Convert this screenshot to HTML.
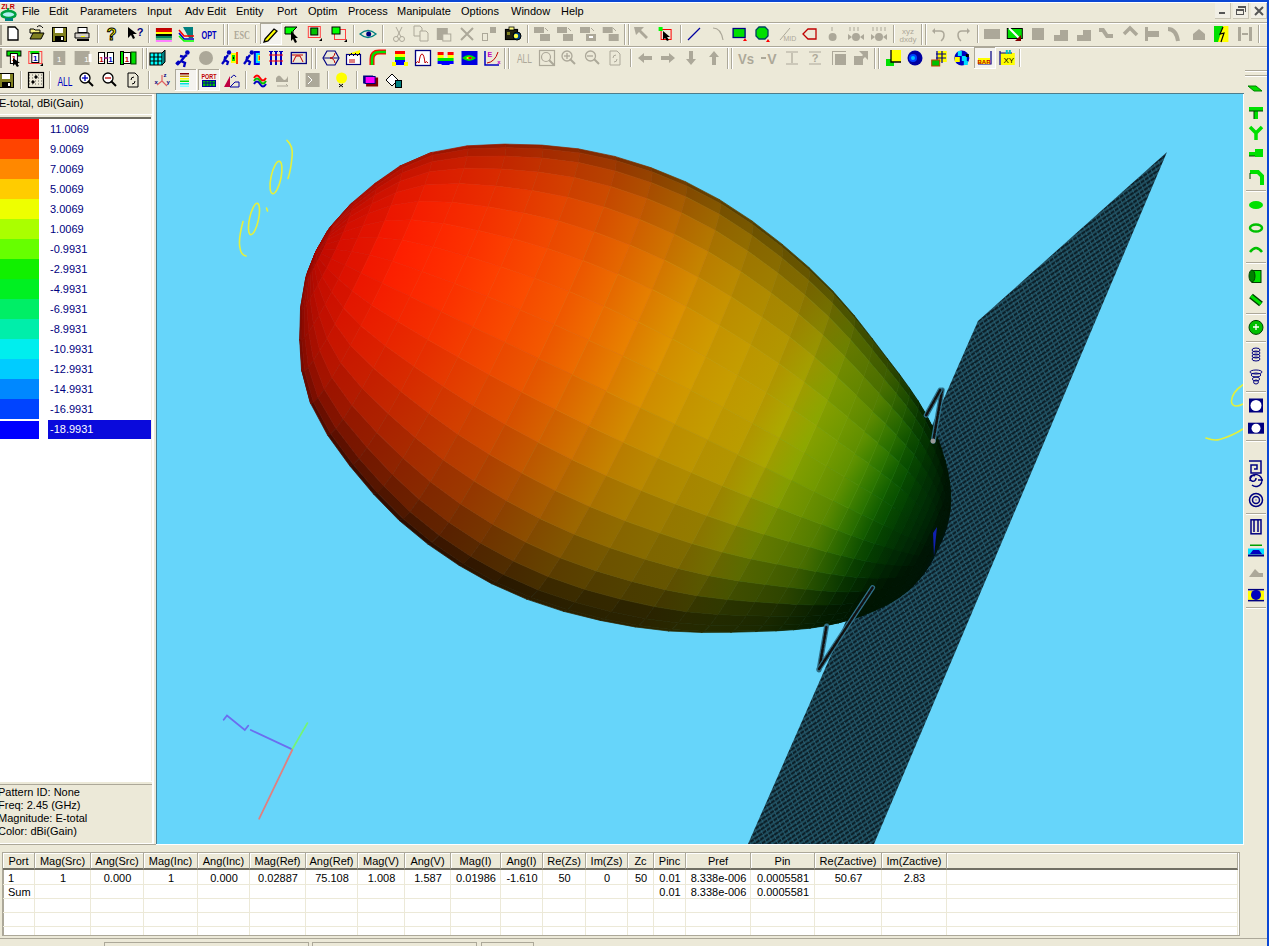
<!DOCTYPE html><html><head><meta charset="utf-8"><style>
*{margin:0;padding:0;box-sizing:border-box}
body{width:1269px;height:946px;overflow:hidden;background:#ece9d8;font-family:"Liberation Sans", sans-serif;font-size:11px;color:#000;position:relative}
.a{position:absolute}
.menu span{position:absolute;top:4px;font-size:11px;line-height:14px}
.tb{position:absolute;width:16px;height:16px}
.sep{position:absolute;width:2px;height:18px;border-left:1px solid #aca899;border-right:1px solid #fff}
.grip{position:absolute;width:6px;height:20px;border-left:1px solid #aca899;border-right:1px solid #aca899}
.leg{position:absolute;left:0;width:39px;height:20px}
.legt{position:absolute;left:50px;color:#000080;font-size:11px;line-height:13px}
.info{position:absolute;left:-2px;font-size:11px;line-height:13px}
table.g{position:absolute;left:3px;top:853px;border-collapse:collapse;table-layout:fixed}
.hd{position:absolute;top:853px;height:17px;background:#ece9d8;border-right:1px solid #aca899;border-bottom:2px solid #716f64;text-align:center;font-size:11px;line-height:16px;box-shadow:inset 1px 1px 0 #fff}
.cell{position:absolute;height:14px;font-size:11px;line-height:14px;text-align:center}
</style></head><body>
<div class="a" style="left:0;top:0;width:1269px;height:2px;background:#0b47d4"></div>
<div class="a" style="left:1267px;top:0;width:2px;height:946px;background:#0b47d4"></div>
<div class="a" style="left:0;top:2px;width:1267px;height:1px;background:#fff"></div>
<svg class="a" style="left:0;top:3px" width="17" height="18"><text x="8" y="6" font-family="Liberation Sans" font-size="7" font-weight="bold" fill="#c00000" text-anchor="middle">ZLR</text><ellipse cx="8.5" cy="11.5" rx="7" ry="3.5" fill="#b0f0f0" stroke="#00a040" stroke-width="2.5"/><path d="M8 5v3" stroke="#00a040" stroke-width="2"/><rect x="5" y="15" width="8" height="3" fill="#008080"/></svg>
<div class="menu">
<span style="left:22px">File</span>
<span style="left:49px">Edit</span>
<span style="left:80px">Parameters</span>
<span style="left:147px">Input</span>
<span style="left:185px">Adv Edit</span>
<span style="left:236px">Entity</span>
<span style="left:277px">Port</span>
<span style="left:308px">Optim</span>
<span style="left:348px">Process</span>
<span style="left:397px">Manipulate</span>
<span style="left:461px">Options</span>
<span style="left:511px">Window</span>
<span style="left:561px">Help</span>
</div>
<div class="a" style="left:0;top:22px;width:1267px;height:1px;background:#aca899"></div>
<div class="a" style="left:0;top:23px;width:1267px;height:1px;background:#fff"></div>
<div class="a" style="left:0;top:46px;width:1267px;height:1px;background:#aca899"></div>
<div class="a" style="left:0;top:47px;width:1267px;height:1px;background:#fff"></div>
<div class="a" style="left:1215px;top:3px;width:16px;height:16px;background:#f1efe5;border-right:1px solid #c8c4b4;border-bottom:1px solid #c8c4b4"></div>
<div class="a" style="left:1233px;top:3px;width:16px;height:16px;background:#f1efe5;border-right:1px solid #c8c4b4;border-bottom:1px solid #c8c4b4"></div>
<div class="a" style="left:1251px;top:3px;width:16px;height:16px;background:#f1efe5;border-right:1px solid #c8c4b4;border-bottom:1px solid #c8c4b4"></div>
<div class="a" style="left:1219px;top:12px;width:6px;height:2px;background:#555"></div>
<div class="a" style="left:1236px;top:9px;width:8px;height:6px;border:1px solid #555;border-top-width:2px"></div>
<div class="a" style="left:1238px;top:6px;width:8px;height:6px;border-top:2px solid #555;border-right:1px solid #555"></div>
<svg class="a" style="left:1254px;top:6px" width="10" height="10"><path d="M1 1L9 9M9 1L1 9" stroke="#555" stroke-width="2"/></svg>
<svg class="a" style="left:0;top:0" width="1269" height="946" viewBox="0 0 1269 946">
<path d="M8 27h7l3 3v10h-10z" fill="#ffffff" stroke="#000" stroke-width="1.3"/>
<path d="M30 29h4l1 1h5v3h-10z" fill="#f8f080" stroke="#000" stroke-width="1"/>
<path d="M30 39l3-6h11l-3 6z" fill="#808020" stroke="#000" stroke-width="1"/>
<path d="M37 27q3-3 6 1" fill="none" stroke="#000" stroke-width="1"/>
<rect x="52.5" y="27.5" width="14.0" height="14.0" fill="#808020" stroke="#000" stroke-width="1"/>
<rect x="55.0" y="28.0" width="8.0" height="5.0" fill="#ffffff"/>
<rect x="55.0" y="36.0" width="9.0" height="5.0" fill="#000"/>
<rect x="61.0" y="37.0" width="2.0" height="3.0" fill="#ffffff"/>
<rect x="78.0" y="27.5" width="9.0" height="5.0" fill="#ffffff" stroke="#000" stroke-width="1"/>
<path d="M75 33h14v5h-14z" fill="#d4d0c8" stroke="#000" stroke-width="1"/>
<rect x="77.0" y="39.0" width="12.0" height="2.0" fill="#000"/>
<rect x="81.0" y="36.0" width="4.0" height="1.0" fill="#ff0"/>
<rect x="97.0" y="25.0" width="1.0" height="18.0" fill="#aca899"/>
<rect x="98.0" y="25.0" width="1.0" height="18.0" fill="#ffffff"/>
<text x="111.6" y="40.0" fill="#ff0" font-size="16" font-weight="bold" text-anchor="middle" font-family='"Liberation Sans", sans-serif' stroke="#000" stroke-width="1">?</text>
<path d="M128 27v11l3-3 2 4 2-1-2-4h4z" fill="#000"/>
<text x="140.0" y="36.0" fill="#000080" font-size="11" font-weight="bold" text-anchor="middle" font-family='"Liberation Sans", sans-serif'>?</text>
<rect x="148.0" y="25.0" width="1.0" height="18.0" fill="#aca899"/>
<rect x="149.0" y="25.0" width="1.0" height="18.0" fill="#ffffff"/>
<rect x="155.9" y="28.0" width="16.0" height="2.0" fill="#c00000"/>
<rect x="155.9" y="30.0" width="16.0" height="2.0" fill="#e00000"/>
<rect x="155.9" y="32.0" width="16.0" height="2.0" fill="#ffff00"/>
<rect x="155.9" y="34.0" width="16.0" height="2.0" fill="#000000"/>
<rect x="155.9" y="36.0" width="16.0" height="2.0" fill="#008060"/>
<rect x="155.9" y="38.0" width="16.0" height="2.0" fill="#60c080"/>
<rect x="155.9" y="40.0" width="16.0" height="2.0" fill="#ff80ff"/>
<path d="M183 27h10v11h-4z" fill="#008080"/>
<path d="M179 30l5 6h10" fill="none" stroke="#ff0000" stroke-width="1.6"/>
<path d="M179 33l5 6h10" fill="none" stroke="#0000c0" stroke-width="1.6"/>
<path d="M179 36l5 5h10" fill="none" stroke="#00ff00" stroke-width="1.6"/>
<text x="209.0" y="39.0" fill="#0000c0" font-size="10" font-weight="bold" text-anchor="middle" font-family='"Liberation Sans", sans-serif' textLength="15" lengthAdjust="spacingAndGlyphs">OPT</text>
<rect x="223.0" y="24.0" width="1.0" height="21.0" fill="#aca899"/>
<rect x="224.0" y="24.0" width="1.0" height="21.0" fill="#ffffff"/>
<rect x="227.0" y="24.0" width="1.0" height="21.0" fill="#aca899"/>
<rect x="228.0" y="24.0" width="1.0" height="21.0" fill="#ffffff"/>
<text x="242.0" y="39.0" fill="#aca899" font-size="12" font-weight="bold" text-anchor="middle" font-family='"Liberation Serif", serif' textLength="16" lengthAdjust="spacingAndGlyphs">ESC</text>
<rect x="255.0" y="25.0" width="1.0" height="18.0" fill="#aca899"/>
<rect x="256.0" y="25.0" width="1.0" height="18.0" fill="#ffffff"/>
<rect x="260.0" y="23.0" width="22.0" height="22.0" fill="#f4f3ee"/>
<rect x="260.0" y="23.0" width="22.0" height="1.0" fill="#aca899"/>
<rect x="260.0" y="23.0" width="1.0" height="22.0" fill="#aca899"/>
<rect x="260.0" y="44.0" width="22.0" height="1.0" fill="#ffffff"/>
<rect x="281.0" y="23.0" width="1.0" height="22.0" fill="#ffffff"/>
<path d="M265 39l9-10 3 2-9 10-4 1z" fill="#ffff00" stroke="#000" stroke-width="1.3"/>
<path d="M285 27h12l-4 4v3h-8z" fill="#00ff00" stroke="#000" stroke-width="1"/>
<path d="M291 31v10l2-2 2 4 2-1-2-4h3z" fill="#000"/>
<rect x="308.3" y="26.5" width="12.0" height="11.0" fill="none" stroke="#ff4040" stroke-width="1"/>
<rect x="310.8" y="28.0" width="7.0" height="7.0" fill="#00c000" stroke="#000" stroke-width="1"/>
<path d="M319 41l3 0v-3z" fill="#000"/>
<rect x="334.5" y="29.5" width="11.0" height="10.0" fill="none" stroke="#ff4040" stroke-width="1"/>
<rect x="332.0" y="27.0" width="8.0" height="7.0" fill="#00ff00" stroke="#000" stroke-width="1"/>
<path d="M344 42l3 0v-3z" fill="#000"/>
<rect x="353.0" y="25.0" width="1.0" height="18.0" fill="#aca899"/>
<rect x="354.0" y="25.0" width="1.0" height="18.0" fill="#ffffff"/>
<path d="M360 34q8-7 16 0q-8 7-16 0z" fill="none" stroke="#008080" stroke-width="1.3"/>
<circle cx="368.7" cy="34.0" r="2.5" fill="#000080"/>
<rect x="382.0" y="25.0" width="1.0" height="18.0" fill="#aca899"/>
<rect x="383.0" y="25.0" width="1.0" height="18.0" fill="#ffffff"/>
<circle cx="396.0" cy="39.0" r="2.5" fill="none" stroke="#aca899" stroke-width="1"/>
<circle cx="402.0" cy="39.0" r="2.5" fill="none" stroke="#aca899" stroke-width="1"/>
<path d="M397 37l5-10M401 37l-5-10" fill="none" stroke="#aca899" stroke-width="1"/>
<path d="M414 26h6l2 2v8h-8z" fill="#ece9d8" stroke="#aca899" stroke-width="1"/>
<path d="M420 31h6l2 2v8h-8z" fill="#ece9d8" stroke="#aca899" stroke-width="1"/>
<rect x="436.8" y="28.0" width="11.0" height="12.0" fill="#aca899"/>
<rect x="442.8" y="34.0" width="8.0" height="7.0" fill="#ece9d8" stroke="#aca899" stroke-width="1"/>
<path d="M461 28l12 12M473 28l-12 12" fill="none" stroke="#aca899" stroke-width="2"/>
<rect x="482.5" y="33.5" width="5.0" height="7.0" fill="none" stroke="#aca899" stroke-width="1"/>
<rect x="490.0" y="27.0" width="6.0" height="6.0" fill="#aca899"/>
<rect x="505.5" y="29.5" width="12.0" height="10.0" fill="#202010" stroke="#000" stroke-width="1.2"/>
<rect x="509.0" y="27.0" width="5.0" height="3.0" fill="#ffff80" stroke="#000" stroke-width="0.8"/>
<rect x="507.0" y="32.0" width="3.0" height="3.0" fill="#808020"/>
<circle cx="517.0" cy="36.0" r="4.0" fill="#004080" stroke="#000" stroke-width="1"/>
<circle cx="516.0" cy="36.0" r="2.2" fill="#ffff40"/>
<rect x="527.0" y="25.0" width="1.0" height="18.0" fill="#aca899"/>
<rect x="528.0" y="25.0" width="1.0" height="18.0" fill="#ffffff"/>
<rect x="534.0" y="27.0" width="10.0" height="6.0" fill="#aca899"/>
<rect x="540.0" y="34.0" width="10.0" height="7.0" fill="#aca899"/>
<path d="M545 28l3 3" fill="none" stroke="#aca899" stroke-width="1"/>
<rect x="557.0" y="27.0" width="10.0" height="6.0" fill="#aca899"/>
<rect x="563.0" y="34.0" width="10.0" height="7.0" fill="#aca899"/>
<path d="M568 28l3 3" fill="none" stroke="#aca899" stroke-width="1"/>
<rect x="580.0" y="27.0" width="10.0" height="6.0" fill="#aca899"/>
<rect x="586.0" y="34.0" width="10.0" height="7.0" fill="#aca899"/>
<path d="M591 28l3 3" fill="none" stroke="#aca899" stroke-width="1"/>
<rect x="589.0" y="36.0" width="4.0" height="2.0" fill="#ffffff"/>
<rect x="602.7" y="27.0" width="10.0" height="6.0" fill="#aca899"/>
<rect x="608.7" y="34.0" width="10.0" height="7.0" fill="#aca899"/>
<path d="M613 28l3 3" fill="none" stroke="#aca899" stroke-width="1"/>
<rect x="624.0" y="24.0" width="1.0" height="21.0" fill="#aca899"/>
<rect x="625.0" y="24.0" width="1.0" height="21.0" fill="#ffffff"/>
<rect x="628.0" y="24.0" width="1.0" height="21.0" fill="#aca899"/>
<rect x="629.0" y="24.0" width="1.0" height="21.0" fill="#ffffff"/>
<path d="M634 27h10l-3 3 7 7-2 2-7-7-3 3z" fill="#aca899"/>
<rect x="661.1" y="29.5" width="10.0" height="10.0" fill="none" stroke="#ff0000" stroke-width="1"/>
<rect x="658.6" y="27.0" width="4.0" height="4.0" fill="#00ff00"/>
<path d="M663 31v9l2-2 2 3 2-1-2-3h3z" fill="#000"/>
<rect x="680.0" y="25.0" width="1.0" height="18.0" fill="#aca899"/>
<rect x="681.0" y="25.0" width="1.0" height="18.0" fill="#ffffff"/>
<path d="M688 40l12-12" fill="none" stroke="#0000a0" stroke-width="1.2"/>
<path d="M713 28q8 0 10 12" fill="none" stroke="#aca899" stroke-width="1.2"/>
<rect x="733.1" y="28.5" width="12.0" height="9.0" fill="#00e000" stroke="#000080" stroke-width="1.3"/>
<path d="M743 41l2-3 2 3z" fill="#ff0000"/>
<path d="M759 27h6l3 3v6l-3 3h-6l-3-3v-6z" fill="#00e000" stroke="#004060" stroke-width="1.3"/>
<path d="M766 42l2-3 2 3z" fill="#ff0000"/>
<path d="M780 40l10-12" fill="none" stroke="#aca899" stroke-width="1"/>
<text x="789.8" y="41.0" fill="#aca899" font-size="7" font-weight="normal" text-anchor="middle" font-family='"Liberation Sans", sans-serif'>MID</text>
<path d="M803 34l5-5h8v10h-8z" fill="none" stroke="#c00000" stroke-width="1.3"/>
<path d="M832 27v4" fill="none" stroke="#aca899" stroke-width="1"/>
<circle cx="832.6" cy="37.0" r="4.0" fill="#aca899"/>
<path d="M850 27v4" fill="none" stroke="#aca899" stroke-width="1"/>
<path d="M854 27v4" fill="none" stroke="#aca899" stroke-width="1"/>
<path d="M858 27v4" fill="none" stroke="#aca899" stroke-width="1"/>
<circle cx="856.0" cy="37.0" r="4.0" fill="#aca899"/>
<path d="M848 34l4 3-4 3z" fill="#aca899"/>
<path d="M864 34l-4 3 4 3z" fill="#aca899"/>
<path d="M873 27v4" fill="none" stroke="#aca899" stroke-width="1"/>
<path d="M877 27v4" fill="none" stroke="#aca899" stroke-width="1"/>
<path d="M881 27v4" fill="none" stroke="#aca899" stroke-width="1"/>
<path d="M885 27v4" fill="none" stroke="#aca899" stroke-width="1"/>
<circle cx="879.0" cy="37.0" r="4.0" fill="#aca899"/>
<path d="M871 34l4 3-4 3z" fill="#aca899"/>
<path d="M887 34l-4 3 4 3z" fill="#aca899"/>
<rect x="893.0" y="25.0" width="1.0" height="18.0" fill="#aca899"/>
<rect x="894.0" y="25.0" width="1.0" height="18.0" fill="#ffffff"/>
<text x="908.0" y="34.0" fill="#aca899" font-size="8" font-weight="normal" text-anchor="middle" font-family='"Liberation Sans", sans-serif'>xyz</text>
<text x="908.0" y="42.0" fill="#aca899" font-size="8" font-weight="normal" text-anchor="middle" font-family='"Liberation Sans", sans-serif'>dxdy</text>
<rect x="921.0" y="24.0" width="1.0" height="21.0" fill="#aca899"/>
<rect x="922.0" y="24.0" width="1.0" height="21.0" fill="#ffffff"/>
<rect x="925.0" y="24.0" width="1.0" height="21.0" fill="#aca899"/>
<rect x="926.0" y="24.0" width="1.0" height="21.0" fill="#ffffff"/>
<path d="M934 31h6q4 0 4 4t-3 6" fill="none" stroke="#aca899" stroke-width="1.5"/>
<path d="M932 31l3-3v6z" fill="#aca899"/>
<path d="M968 31h-6q-4 0-4 4t3 6" fill="none" stroke="#aca899" stroke-width="1.5"/>
<path d="M970 31l-3-3v6z" fill="#aca899"/>
<rect x="977.0" y="25.0" width="1.0" height="18.0" fill="#aca899"/>
<rect x="978.0" y="25.0" width="1.0" height="18.0" fill="#ffffff"/>
<rect x="984.0" y="29.0" width="16.0" height="10.0" fill="#aca899"/>
<rect x="1007.3" y="28.5" width="15.0" height="10.0" fill="#00e000" stroke="#000" stroke-width="1"/>
<path d="M1009 28l10 10" fill="none" stroke="#ffffff" stroke-width="2"/>
<path d="M1015 41l6-6v6z" fill="#800000"/>
<rect x="1032.0" y="28.0" width="12.0" height="12.0" fill="#aca899"/>
<path d="M1054 35h6v-5h8v11h-14z" fill="#aca899"/>
<path d="M1077 35h6v-5h8v11h-14z" fill="#aca899"/>
<path d="M1099 28h5l4 6h5v4h-7l-4-6h-3z" fill="#aca899"/>
<path d="M1124 34l6-6 7 7" fill="none" stroke="#aca899" stroke-width="3.5"/>
<rect x="1145.0" y="27.0" width="3.0" height="14.0" fill="#aca899"/>
<rect x="1148.0" y="31.0" width="11.0" height="6.0" fill="#aca899"/>
<path d="M1168 29q8 0 10 12" fill="none" stroke="#aca899" stroke-width="4"/>
<path d="M1193 40v-6l6-5 6 5v6z" fill="#aca899"/>
<rect x="1214.4" y="26.0" width="14.0" height="16.0" fill="#ffff00"/>
<path d="M1214 26h9l-5 16h-4z" fill="#00e000"/>
<path d="M1223 27l-3 7 4-1-3 9" fill="none" stroke="#000" stroke-width="1.2"/>
<rect x="1238.0" y="27.0" width="3.0" height="14.0" fill="#aca899"/>
<rect x="1249.0" y="27.0" width="3.0" height="14.0" fill="#aca899"/>
<path d="M1242 34h6" fill="none" stroke="#aca899" stroke-width="2"/>
<rect x="1258.0" y="25.0" width="1.0" height="18.0" fill="#aca899"/>
<rect x="1259.0" y="25.0" width="1.0" height="18.0" fill="#ffffff"/>
<rect x="6.9" y="51.0" width="14.0" height="5.0" fill="#00e000" stroke="#000" stroke-width="1"/>
<rect x="10.4" y="53.5" width="7.0" height="10.0" fill="#ffffff" stroke="#000" stroke-width="1"/>
<text x="13.9" y="61.0" fill="#c00000" font-size="8" font-weight="bold" text-anchor="middle" font-family='"Liberation Sans", sans-serif'>1</text>
<path d="M13 58v8l2-2 2 3 2-1-2-3h3z" fill="#000"/>
<rect x="28.8" y="51.5" width="13.0" height="12.0" fill="none" stroke="#ff4040" stroke-width="1"/>
<rect x="30.3" y="51.0" width="9.0" height="3.0" fill="#00e000"/>
<rect x="31.8" y="53.5" width="7.0" height="9.0" fill="#ffffff" stroke="#000" stroke-width="1"/>
<text x="35.3" y="61.0" fill="#0000c0" font-size="8" font-weight="bold" text-anchor="middle" font-family='"Liberation Sans", sans-serif'>1</text>
<path d="M40 66l3 0v-3z" fill="#000"/>
<rect x="53.3" y="51.0" width="12.0" height="14.0" fill="#aca899"/>
<text x="59.3" y="62.0" fill="#ffffff" font-size="8" font-weight="normal" text-anchor="middle" font-family='"Liberation Sans", sans-serif'>1</text>
<rect x="74.6" y="51.0" width="15.0" height="14.0" fill="#aca899"/>
<rect x="88.6" y="54.0" width="3.0" height="8.0" fill="#ffffff"/>
<text x="86.6" y="62.0" fill="#ffffff" font-size="8" font-weight="normal" text-anchor="middle" font-family='"Liberation Sans", sans-serif'>1</text>
<rect x="98.5" y="52.5" width="6.0" height="11.0" fill="#ffffff" stroke="#000" stroke-width="1"/>
<rect x="107.5" y="52.5" width="6.0" height="11.0" fill="#ffffff" stroke="#000" stroke-width="1"/>
<text x="101.5" y="62.0" fill="#c00000" font-size="8" font-weight="bold" text-anchor="middle" font-family='"Liberation Sans", sans-serif'>1</text>
<text x="110.5" y="62.0" fill="#0000c0" font-size="8" font-weight="bold" text-anchor="middle" font-family='"Liberation Sans", sans-serif'>1</text>
<path d="M104 58h4" fill="none" stroke="#800080" stroke-width="1.5"/>
<rect x="120.5" y="51.5" width="3.0" height="13.0" fill="#00e000" stroke="#000" stroke-width="1"/>
<rect x="123.5" y="52.5" width="7.0" height="11.0" fill="#ffffff" stroke="#000" stroke-width="1"/>
<rect x="131.0" y="52.0" width="5.0" height="12.0" fill="#00e000" stroke="#004000" stroke-width="1"/>
<text x="127.0" y="62.0" fill="#c00000" font-size="8" font-weight="bold" text-anchor="middle" font-family='"Liberation Sans", sans-serif'>1</text>
<rect x="142.0" y="48.0" width="1.0" height="21.0" fill="#aca899"/>
<rect x="143.0" y="48.0" width="1.0" height="21.0" fill="#ffffff"/>
<rect x="146.0" y="48.0" width="1.0" height="21.0" fill="#aca899"/>
<rect x="147.0" y="48.0" width="1.0" height="21.0" fill="#ffffff"/>
<path d="M150 53h12v12h-12z" fill="#00ffff" stroke="#000" stroke-width="1.2"/>
<path d="M162 53l3-3v12l-3 3" fill="#008080" stroke="#000" stroke-width="1"/>
<path d="M154 53v12M158 53v12M150 57h12M150 61h12" fill="none" stroke="#000" stroke-width="1.2"/>
<circle cx="187.4" cy="52.5" r="2.3" fill="#0000c0"/>
<path d="M186 55l-5 6M180 56l4 1 3-2M179 61l-3 3" fill="none" stroke="#0000c0" stroke-width="2.4"/>
<path d="M181 61l-4 4M181 61l4 2 -1 4" fill="none" stroke="#0000c0" stroke-width="2.4"/>
<circle cx="206.0" cy="58.0" r="7.0" fill="#aca899"/>
<circle cx="229.0" cy="52.5" r="2.2" fill="#0000c0"/>
<path d="M228 55l-4 5M224 57l3 1" fill="none" stroke="#0000c0" stroke-width="2.2"/>
<path d="M225 60l-3 4M225 60l3 2-1 3" fill="none" stroke="#0000c0" stroke-width="2.2"/>
<rect x="231.0" y="53.0" width="5.0" height="10.0" fill="#ffff00"/>
<rect x="232.0" y="55.0" width="3.0" height="6.0" fill="#00e000"/>
<rect x="233.0" y="57.0" width="1.0" height="2.0" fill="#000"/>
<rect x="236.0" y="52.0" width="2.0" height="12.0" fill="#ff4000"/>
<circle cx="251.8" cy="52.5" r="2.2" fill="#0000c0"/>
<path d="M250 55l-4 5M246 57l3 1" fill="none" stroke="#0000c0" stroke-width="2.2"/>
<path d="M247 60l-3 4M247 60l3 2-1 3" fill="none" stroke="#0000c0" stroke-width="2.2"/>
<rect x="253.8" y="51.0" width="6.0" height="14.0" fill="#0000e0"/>
<rect x="255.8" y="53.0" width="4.0" height="10.0" fill="#00e0ff"/>
<rect x="257.8" y="55.0" width="2.0" height="6.0" fill="#ffff00"/>
<rect x="258.8" y="56.0" width="1.0" height="4.0" fill="#ff0000"/>
<rect x="270.0" y="51.0" width="2.0" height="14.0" fill="#0000c0"/>
<rect x="275.0" y="51.0" width="2.0" height="14.0" fill="#0000c0"/>
<rect x="280.0" y="51.0" width="2.0" height="14.0" fill="#0000c0"/>
<rect x="269.0" y="51.0" width="4.0" height="1.0" fill="#0000c0"/>
<rect x="274.0" y="51.0" width="4.0" height="1.0" fill="#0000c0"/>
<rect x="279.0" y="51.0" width="4.0" height="1.0" fill="#0000c0"/>
<path d="M269 55h14M269 61h14" fill="none" stroke="#ff0000" stroke-width="1"/>
<rect x="291.3" y="52.5" width="15.0" height="11.0" fill="none" stroke="#000080" stroke-width="1.3"/>
<path d="M293 62l3-6h4l3 6M292 55h11" fill="none" stroke="#c00000" stroke-width="1"/>
<rect x="311.0" y="48.0" width="1.0" height="21.0" fill="#aca899"/>
<rect x="312.0" y="48.0" width="1.0" height="21.0" fill="#ffffff"/>
<rect x="315.0" y="48.0" width="1.0" height="21.0" fill="#aca899"/>
<rect x="316.0" y="48.0" width="1.0" height="21.0" fill="#ffffff"/>
<path d="M323 58l4-7h8l4 7-4 7h-8z" fill="none" stroke="#000080" stroke-width="1.2"/>
<path d="M324 58h14" fill="none" stroke="#000080" stroke-width="1"/>
<path d="M330 58q4 0 5-5M330 58q4 0 5 5" fill="none" stroke="#c00000" stroke-width="1"/>
<rect x="346.5" y="54.5" width="14.0" height="10.0" fill="#ffffff" stroke="#000080" stroke-width="1.2"/>
<path d="M348 54l12-4v4h-12z" fill="#ffff00"/>
<path d="M349 56l3-3M353 56l3-3M357 56l3-3" fill="none" stroke="#000" stroke-width="1"/>
<path d="M349 60h6M349 62h6" fill="none" stroke="#c00000" stroke-width="1"/>
<path d="M372 65v-6q0-7 7-7h7" fill="none" stroke="#ff0000" stroke-width="5"/>
<path d="M372 65v-6q0-7 7-7h7" fill="none" stroke="#00e000" stroke-width="2.5"/>
<rect x="395.0" y="51.0" width="10.0" height="3.0" fill="#ff0000"/>
<rect x="395.0" y="54.0" width="10.0" height="3.0" fill="#ffff00"/>
<rect x="395.0" y="57.0" width="10.0" height="3.0" fill="#00e000"/>
<rect x="395.0" y="60.0" width="10.0" height="3.0" fill="#0000ff"/>
<rect x="392.0" y="62.0" width="4.0" height="4.0" fill="#ffff00"/>
<rect x="404.0" y="62.0" width="4.0" height="4.0" fill="#ffff00"/>
<rect x="396.0" y="62.0" width="8.0" height="3.0" fill="#0000ff"/>
<rect x="415.5" y="50.5" width="15.0" height="15.0" fill="#ffffff" stroke="#000080" stroke-width="1.3"/>
<path d="M416 63q2-3 3 0q1-9 3-9t3 9q1-3 3 0" fill="none" stroke="#c00000" stroke-width="1"/>
<rect x="437.6" y="52.0" width="6.0" height="3.0" fill="#ff0000"/>
<rect x="447.6" y="52.0" width="6.0" height="3.0" fill="#ff0000"/>
<rect x="437.6" y="55.0" width="6.0" height="3.0" fill="#ffff00"/>
<rect x="447.6" y="55.0" width="6.0" height="3.0" fill="#ffff00"/>
<rect x="437.6" y="58.0" width="6.0" height="3.0" fill="#00e000"/>
<rect x="447.6" y="58.0" width="6.0" height="3.0" fill="#00e000"/>
<rect x="437.6" y="61.0" width="6.0" height="3.0" fill="#0000ff"/>
<rect x="447.6" y="61.0" width="6.0" height="3.0" fill="#0000ff"/>
<rect x="442.6" y="58.0" width="6.0" height="3.0" fill="#00e000"/>
<rect x="441.6" y="61.0" width="8.0" height="4.0" fill="#0000ff"/>
<rect x="461.5" y="51.0" width="16.0" height="14.0" fill="#0000e0"/>
<path d="M462 58q7-6 14 0q-7 6-14 0z" fill="#00e000"/>
<path d="M466 58q3-2.5 6 0q-3 2.5-6 0z" fill="#ffff00"/>
<rect x="468.5" y="57.0" width="3.0" height="2.0" fill="#ff0000"/>
<path d="M485 51v14h14" fill="none" stroke="#0000c0" stroke-width="1.5"/>
<path d="M487 63q8-1 11-11" fill="none" stroke="#c00000" stroke-width="1"/>
<text x="489.9" y="57.0" fill="#c000c0" font-size="7" font-weight="bold" text-anchor="middle" font-family='"Liberation Sans", sans-serif'>E</text>
<text x="498.9" y="64.0" fill="#c000c0" font-size="6" font-weight="bold" text-anchor="middle" font-family='"Liberation Sans", sans-serif'>x</text>
<rect x="504.0" y="48.0" width="1.0" height="21.0" fill="#aca899"/>
<rect x="505.0" y="48.0" width="1.0" height="21.0" fill="#ffffff"/>
<rect x="508.0" y="48.0" width="1.0" height="21.0" fill="#aca899"/>
<rect x="509.0" y="48.0" width="1.0" height="21.0" fill="#ffffff"/>
<text x="524.4" y="63.0" fill="#aca899" font-size="12" font-weight="normal" text-anchor="middle" font-family='"Liberation Sans", sans-serif' textLength="15" lengthAdjust="spacingAndGlyphs">ALL</text>
<rect x="539.5" y="50.5" width="15.0" height="15.0" fill="none" stroke="#aca899" stroke-width="1.2"/>
<circle cx="546.0" cy="57.0" r="4.5" fill="none" stroke="#aca899" stroke-width="1.2"/>
<path d="M549 60l5 5" fill="none" stroke="#aca899" stroke-width="2"/>
<circle cx="567.0" cy="56.0" r="5.0" fill="none" stroke="#aca899" stroke-width="1.3"/>
<path d="M570 59l5 5" fill="none" stroke="#aca899" stroke-width="2"/>
<path d="M564 56h6" fill="none" stroke="#aca899" stroke-width="1.3"/>
<path d="M567 53v6" fill="none" stroke="#aca899" stroke-width="1.3"/>
<circle cx="590.5" cy="56.0" r="5.0" fill="none" stroke="#aca899" stroke-width="1.3"/>
<path d="M594 59l5 5" fill="none" stroke="#aca899" stroke-width="2"/>
<path d="M587 56h6" fill="none" stroke="#aca899" stroke-width="1.3"/>
<path d="M610 51h7l3 3v11h-10z" fill="none" stroke="#aca899" stroke-width="1"/>
<path d="M613 58q0-3 3-3M617 59q0 3-3 3" fill="none" stroke="#aca899" stroke-width="1"/>
<rect x="630.0" y="49.0" width="1.0" height="18.0" fill="#aca899"/>
<rect x="631.0" y="49.0" width="1.0" height="18.0" fill="#ffffff"/>
<path d="M638 58l6-5v3h8v4h-8v3z" fill="#aca899"/>
<path d="M675 58l-6-5v3h-8v4h8v3z" fill="#aca899"/>
<path d="M691 65l-5-6h3v-8h4v8h3z" fill="#aca899"/>
<path d="M714 51l-5 6h3v8h4v-8h3z" fill="#aca899"/>
<rect x="727.0" y="48.0" width="1.0" height="21.0" fill="#aca899"/>
<rect x="728.0" y="48.0" width="1.0" height="21.0" fill="#ffffff"/>
<rect x="731.0" y="48.0" width="1.0" height="21.0" fill="#aca899"/>
<rect x="732.0" y="48.0" width="1.0" height="21.0" fill="#ffffff"/>
<text x="746.0" y="64.0" fill="#aca899" font-size="14" font-weight="bold" text-anchor="middle" font-family='"Liberation Sans", sans-serif' textLength="16" lengthAdjust="spacingAndGlyphs">Vs</text>
<text x="772.0" y="64.0" fill="#aca899" font-size="14" font-weight="bold" text-anchor="middle" font-family='"Liberation Sans", sans-serif'>V</text>
<path d="M761 58h5" fill="none" stroke="#aca899" stroke-width="2"/>
<path d="M786 52h12M786 64h12M792 53v10" fill="none" stroke="#aca899" stroke-width="1.2"/>
<path d="M809 52h12M809 64h12" fill="none" stroke="#aca899" stroke-width="1.2"/>
<text x="815.0" y="62.0" fill="#aca899" font-size="11" font-weight="bold" text-anchor="middle" font-family='"Liberation Sans", sans-serif'>?</text>
<rect x="832.0" y="51.0" width="1.0" height="14.0" fill="#aca899"/>
<rect x="832.0" y="51.0" width="14.0" height="1.0" fill="#aca899"/>
<rect x="835.0" y="54.0" width="11.0" height="11.0" fill="#aca899"/>
<rect x="854.0" y="56.0" width="9.0" height="9.0" fill="#aca899"/>
<path d="M859 51h9v9l-3-3-5 5-2-2 5-5z" fill="#aca899"/>
<rect x="874.0" y="48.0" width="1.0" height="21.0" fill="#aca899"/>
<rect x="875.0" y="48.0" width="1.0" height="21.0" fill="#ffffff"/>
<rect x="878.0" y="48.0" width="1.0" height="21.0" fill="#aca899"/>
<rect x="879.0" y="48.0" width="1.0" height="21.0" fill="#ffffff"/>
<rect x="886.0" y="59.0" width="8.0" height="7.0" fill="#00e000"/>
<rect x="891.0" y="50.0" width="10.0" height="12.0" fill="#ffff00"/>
<path d="M891 50v12h10" fill="none" stroke="#000" stroke-width="1.3"/>
<circle cx="915.0" cy="58.0" r="7.5" fill="#0000a0"/>
<circle cx="913.0" cy="58.0" r="4.0" fill="#0040ff"/>
<circle cx="913.0" cy="58.0" r="2.0" fill="#00c0ff"/>
<rect x="937.7" y="51.0" width="9.0" height="11.0" fill="#ffff00"/>
<path d="M937 51v12M942 51v12M936 54h10M936 58h10" fill="none" stroke="#000080" stroke-width="1.2"/>
<rect x="931.7" y="60.0" width="8.0" height="6.0" fill="#00c000" stroke="#c04000" stroke-width="1"/>
<circle cx="961.8" cy="58.0" r="7.5" fill="#0000c0"/>
<rect x="957.8" y="51.0" width="4.0" height="5.0" fill="#00e0ff"/>
<rect x="961.8" y="56.0" width="5.0" height="5.0" fill="#00e0ff"/>
<rect x="954.8" y="57.0" width="5.0" height="5.0" fill="#ffff00"/>
<rect x="963.8" y="61.0" width="4.0" height="4.0" fill="#00e0ff"/>
<rect x="965.8" y="54.0" width="3.0" height="3.0" fill="#000"/>
<rect x="974.0" y="47.0" width="22.0" height="22.0" fill="#f4f3ee"/>
<rect x="974.0" y="47.0" width="22.0" height="1.0" fill="#aca899"/>
<rect x="974.0" y="47.0" width="1.0" height="22.0" fill="#aca899"/>
<rect x="974.0" y="68.0" width="22.0" height="1.0" fill="#ffffff"/>
<rect x="995.0" y="47.0" width="1.0" height="22.0" fill="#ffffff"/>
<path d="M991 51v13h-13" fill="none" stroke="#000080" stroke-width="1.2"/>
<rect x="978.0" y="58.0" width="12.0" height="6.0" fill="#ffff00"/>
<text x="984.0" y="64.0" fill="#c00000" font-size="6" font-weight="bold" text-anchor="middle" font-family='"Liberation Sans", sans-serif'>BAR</text>
<rect x="1000.8" y="53.0" width="14.0" height="12.0" fill="#ffff00"/>
<path d="M1000 51v14M1000 53h12" fill="none" stroke="#000080" stroke-width="1.2"/>
<rect x="1005.8" y="50.0" width="2.0" height="4.0" fill="#00c0c0"/>
<rect x="1008.8" y="50.0" width="2.0" height="4.0" fill="#00c0c0"/>
<text x="1008.8" y="63.0" fill="#000" font-size="8" font-weight="normal" text-anchor="middle" font-family='"Liberation Sans", sans-serif'>XY</text>
<rect x="1019.0" y="49.0" width="1.0" height="18.0" fill="#aca899"/>
<rect x="1020.0" y="49.0" width="1.0" height="18.0" fill="#ffffff"/>
<rect x="-0.5" y="73.5" width="14.0" height="14.0" fill="#808020" stroke="#000" stroke-width="1"/>
<rect x="2.0" y="74.0" width="8.0" height="5.0" fill="#ffffff"/>
<rect x="2.0" y="82.0" width="9.0" height="5.0" fill="#000"/>
<rect x="8.0" y="83.0" width="2.0" height="3.0" fill="#ffffff"/>
<rect x="20.0" y="71.0" width="1.0" height="18.0" fill="#aca899"/>
<rect x="21.0" y="71.0" width="1.0" height="18.0" fill="#ffffff"/>
<rect x="28.5" y="72.5" width="15.0" height="15.0" fill="none" stroke="#000" stroke-width="1.2"/>
<path d="M29 75h13" fill="none" stroke="#000" stroke-width="0.6" stroke-dasharray="1 2"/>
<path d="M29 78h13" fill="none" stroke="#000" stroke-width="0.6" stroke-dasharray="1 2"/>
<path d="M29 81h13" fill="none" stroke="#000" stroke-width="0.6" stroke-dasharray="1 2"/>
<path d="M29 84h13" fill="none" stroke="#000" stroke-width="0.6" stroke-dasharray="1 2"/>
<path d="M36 75l2 2-2 2-2-2zM33 80l2 2-2 2-2-2z" fill="#000"/>
<rect x="49.0" y="71.0" width="1.0" height="18.0" fill="#aca899"/>
<rect x="50.0" y="71.0" width="1.0" height="18.0" fill="#ffffff"/>
<text x="65.0" y="86.0" fill="#0000c0" font-size="13" font-weight="normal" text-anchor="middle" font-family='"Liberation Sans", sans-serif' textLength="15" lengthAdjust="spacingAndGlyphs">ALL</text>
<circle cx="85.0" cy="78.0" r="5.0" fill="#ffffff" stroke="#000" stroke-width="1.3"/>
<path d="M88 81l5 5" fill="none" stroke="#000" stroke-width="2"/>
<path d="M82 78h6" fill="none" stroke="#0000c0" stroke-width="1.3"/>
<path d="M85 75v6" fill="none" stroke="#0000c0" stroke-width="1.3"/>
<circle cx="108.0" cy="78.0" r="5.0" fill="#ffffff" stroke="#000" stroke-width="1.3"/>
<path d="M111 81l5 5" fill="none" stroke="#000" stroke-width="2"/>
<path d="M105 78h6" fill="none" stroke="#c00000" stroke-width="1.3"/>
<path d="M128 73h7l3 3v11h-10z" fill="none" stroke="#000" stroke-width="1"/>
<path d="M131 80q0-3 3-3M135 81q0 3-3 3" fill="none" stroke="#000" stroke-width="1"/>
<rect x="148.0" y="71.0" width="1.0" height="18.0" fill="#aca899"/>
<rect x="149.0" y="71.0" width="1.0" height="18.0" fill="#ffffff"/>
<path d="M162 81v-6M162 81l5 5" fill="none" stroke="#e06060" stroke-width="1.2"/>
<path d="M162 81l-5 4" fill="none" stroke="#e06060" stroke-width="1.2"/>
<text x="163.6" y="77.0" fill="#000080" font-size="6" font-weight="bold" text-anchor="start" font-family='"Liberation Sans", sans-serif'>z</text>
<text x="154.6" y="84.0" fill="#000080" font-size="6" font-weight="bold" text-anchor="start" font-family='"Liberation Sans", sans-serif'>x</text>
<text x="166.6" y="84.0" fill="#000080" font-size="6" font-weight="bold" text-anchor="start" font-family='"Liberation Sans", sans-serif'>y</text>
<rect x="175.0" y="69.0" width="22.0" height="22.0" fill="#f4f3ee"/>
<rect x="175.0" y="69.0" width="22.0" height="1.0" fill="#aca899"/>
<rect x="175.0" y="69.0" width="1.0" height="22.0" fill="#aca899"/>
<rect x="175.0" y="90.0" width="22.0" height="1.0" fill="#ffffff"/>
<rect x="196.0" y="69.0" width="1.0" height="22.0" fill="#ffffff"/>
<rect x="180.0" y="73.0" width="9.0" height="1.5" fill="#800000"/>
<rect x="180.0" y="75.5" width="9.0" height="1.5" fill="#c08000"/>
<rect x="180.0" y="78.0" width="9.0" height="1.5" fill="#ffff00"/>
<rect x="180.0" y="80.5" width="9.0" height="1.5" fill="#00e000"/>
<rect x="180.0" y="83.0" width="9.0" height="1.5" fill="#00e0e0"/>
<rect x="180.0" y="85.5" width="9.0" height="1.5" fill="#80ffff"/>
<rect x="198.0" y="69.0" width="22.0" height="22.0" fill="#f4f3ee"/>
<rect x="198.0" y="69.0" width="22.0" height="1.0" fill="#aca899"/>
<rect x="198.0" y="69.0" width="1.0" height="22.0" fill="#aca899"/>
<rect x="198.0" y="90.0" width="22.0" height="1.0" fill="#ffffff"/>
<rect x="219.0" y="69.0" width="1.0" height="22.0" fill="#ffffff"/>
<text x="209.0" y="79.0" fill="#c00000" font-size="7" font-weight="bold" text-anchor="middle" font-family='"Liberation Sans", sans-serif' textLength="15" lengthAdjust="spacingAndGlyphs">PORT</text>
<rect x="202.5" y="80.5" width="13.0" height="6.0" fill="#00c000" stroke="#0000a0" stroke-width="1"/>
<path d="M202 83h13M206 80v6M209 80v6M212 80v6" fill="none" stroke="#0000a0" stroke-width="1"/>
<path d="M224 87l6-11v11z" fill="#c00040"/>
<path d="M230 87l5-5h4v5z" fill="none" stroke="#0000a0" stroke-width="1"/>
<path d="M231 78q3-5 5-1" fill="none" stroke="#0000a0" stroke-width="1"/>
<rect x="245.0" y="71.0" width="1.0" height="18.0" fill="#aca899"/>
<rect x="246.0" y="71.0" width="1.0" height="18.0" fill="#ffffff"/>
<path d="M254 78q3-5 6 0t6 0" fill="none" stroke="#ff0000" stroke-width="2"/>
<path d="M254 81q3-5 6 0t6 0" fill="none" stroke="#00c000" stroke-width="2"/>
<path d="M254 84q3-5 6 0t6 0" fill="none" stroke="#0000c0" stroke-width="2"/>
<path d="M276 78q3-5 6 0t6-2v6h-12z" fill="#aca899"/>
<path d="M277 86h11l-2-2" fill="none" stroke="#aca899" stroke-width="1"/>
<rect x="298.0" y="71.0" width="1.0" height="18.0" fill="#aca899"/>
<rect x="299.0" y="71.0" width="1.0" height="18.0" fill="#ffffff"/>
<rect x="305.6" y="73.0" width="14.0" height="14.0" fill="#aca899"/>
<path d="M308 76l4 4-4 4" fill="none" stroke="#ffffff" stroke-width="1"/>
<rect x="327.0" y="71.0" width="1.0" height="18.0" fill="#aca899"/>
<rect x="328.0" y="71.0" width="1.0" height="18.0" fill="#ffffff"/>
<circle cx="341.6" cy="78.0" r="5.5" fill="#ffff00"/>
<path d="M339 84l4 3M343 84l-4 3" fill="none" stroke="#000" stroke-width="1"/>
<rect x="356.0" y="71.0" width="1.0" height="18.0" fill="#aca899"/>
<rect x="357.0" y="71.0" width="1.0" height="18.0" fill="#ffffff"/>
<rect x="363.1" y="75.5" width="10.0" height="8.0" fill="#000080"/>
<rect x="366.1" y="77.5" width="12.0" height="9.0" fill="#800000"/>
<rect x="365.1" y="76.5" width="10.0" height="7.0" fill="#ff00ff" stroke="#000080" stroke-width="1"/>
<path d="M386 80l6-6 6 6-6 6z" fill="#ffffff" stroke="#000" stroke-width="1"/>
<rect x="395.5" y="80.5" width="6.0" height="7.0" fill="#008080" stroke="#000" stroke-width="1"/>
<rect x="0.0" y="25.0" width="2.0" height="20.0" fill="#aca899"/>
<rect x="0.0" y="48.0" width="2.0" height="20.0" fill="#aca899"/>
<rect x="1245.0" y="70.0" width="22.0" height="1.0" fill="#aca899"/>
<rect x="1245.0" y="71.0" width="22.0" height="1.0" fill="#ffffff"/>
<rect x="1245.0" y="75.0" width="22.0" height="1.0" fill="#aca899"/>
<rect x="1245.0" y="76.0" width="22.0" height="1.0" fill="#ffffff"/>
<path d="M1248 86h8l6 5h-8z" fill="#00e000" stroke="#008000" stroke-width="1"/>
<rect x="1249.0" y="107.0" width="14.0" height="4.0" fill="#00e000"/>
<rect x="1254.0" y="110.0" width="4.0" height="9.0" fill="#00e000"/>
<path d="M1249 111h14M1254 111v8" fill="none" stroke="#004000" stroke-width="1"/>
<path d="M1250 127l6 6v7M1262 127l-6 6" fill="none" stroke="#00e000" stroke-width="3.5"/>
<rect x="1249.0" y="152.0" width="14.0" height="4.0" fill="#00e000"/>
<rect x="1255.0" y="149.0" width="8.0" height="8.0" fill="#00e000"/>
<path d="M1249 156h6" fill="none" stroke="#004000" stroke-width="1"/>
<path d="M1250 172h8l4 4v9" fill="none" stroke="#00e000" stroke-width="4"/>
<path d="M1250 179v-6" fill="none" stroke="#004000" stroke-width="1"/>
<rect x="1246.0" y="190.0" width="20.0" height="1.0" fill="#aca899"/>
<rect x="1246.0" y="191.0" width="20.0" height="1.0" fill="#ffffff"/>
<ellipse cx="1256" cy="205" rx="7" ry="4" fill="#00e000"/>
<ellipse cx="1256" cy="228" rx="6" ry="3.5" fill="none" stroke="#00c000" stroke-width="2.5"/>
<path d="M1250 252q6-8 12 0" fill="none" stroke="#00c000" stroke-width="2.5"/>
<rect x="1246.0" y="262.0" width="20.0" height="1.0" fill="#aca899"/>
<rect x="1246.0" y="263.0" width="20.0" height="1.0" fill="#ffffff"/>
<rect x="1252.0" y="270.5" width="9.0" height="12.0" fill="#00e000" stroke="#004000" stroke-width="1"/>
<ellipse cx="1252" cy="276" rx="3" ry="6" fill="#008000" stroke="#004000"/>
<path d="M1251 296l10 8" fill="none" stroke="#004000" stroke-width="6"/>
<path d="M1251 296l10 8" fill="none" stroke="#00e000" stroke-width="3"/>
<rect x="1246.0" y="313.0" width="20.0" height="1.0" fill="#aca899"/>
<rect x="1246.0" y="314.0" width="20.0" height="1.0" fill="#ffffff"/>
<circle cx="1256.0" cy="327.4" r="7.0" fill="#00c000" stroke="#004000" stroke-width="1"/>
<path d="M1253 327h6M1256 324v6" fill="none" stroke="#ffffff" stroke-width="1.3"/>
<rect x="1246.0" y="341.0" width="20.0" height="1.0" fill="#aca899"/>
<rect x="1246.0" y="342.0" width="20.0" height="1.0" fill="#ffffff"/>
<ellipse cx="1256" cy="350" rx="4" ry="2" fill="none" stroke="#000080"/>
<ellipse cx="1256" cy="353" rx="4" ry="2" fill="none" stroke="#000080"/>
<ellipse cx="1256" cy="356" rx="4" ry="2" fill="none" stroke="#000080"/>
<ellipse cx="1256" cy="359" rx="4" ry="2" fill="none" stroke="#000080"/>
<ellipse cx="1256" cy="372" rx="6.0" ry="2" fill="none" stroke="#000080"/>
<ellipse cx="1256" cy="375" rx="4.8" ry="2" fill="none" stroke="#000080"/>
<ellipse cx="1256" cy="379" rx="3.6" ry="2" fill="none" stroke="#000080"/>
<ellipse cx="1256" cy="382" rx="2.4" ry="2" fill="none" stroke="#000080"/>
<rect x="1246.0" y="391.0" width="20.0" height="1.0" fill="#aca899"/>
<rect x="1246.0" y="392.0" width="20.0" height="1.0" fill="#ffffff"/>
<rect x="1249.0" y="398.5" width="14.0" height="14.0" fill="#000080"/>
<circle cx="1256.0" cy="405.5" r="5.5" fill="#ffffff"/>
<rect x="1248.0" y="422.7" width="16.0" height="11.0" fill="#000080"/>
<circle cx="1256.0" cy="428.2" r="4.5" fill="#ffffff"/>
<rect x="1246.0" y="440.0" width="20.0" height="1.0" fill="#aca899"/>
<rect x="1246.0" y="441.0" width="20.0" height="1.0" fill="#ffffff"/>
<path d="M1249 461h12v12h-10v-8h6v4h-3" fill="none" stroke="#000080" stroke-width="1.5"/>
<path d="M1250 481a6 6 0 1 1 2 4M1256 478a3 3 0 1 1 -1 -2" fill="none" stroke="#000080" stroke-width="1.5"/>
<path d="M1258 480h5" fill="none" stroke="#000080" stroke-width="1.5"/>
<circle cx="1256.0" cy="500.0" r="6.5" fill="none" stroke="#000080" stroke-width="1.5"/>
<circle cx="1256.0" cy="500.0" r="3.5" fill="none" stroke="#000080" stroke-width="1.5"/>
<rect x="1255.5" y="499.5" width="1.0" height="1.0" fill="#000080"/>
<rect x="1246.0" y="513.0" width="20.0" height="1.0" fill="#aca899"/>
<rect x="1246.0" y="514.0" width="20.0" height="1.0" fill="#ffffff"/>
<rect x="1251.0" y="519.8" width="10.0" height="14.0" fill="none" stroke="#000080" stroke-width="1.5"/>
<path d="M1254 520v12M1258 520v12" fill="none" stroke="#000080" stroke-width="1.5"/>
<rect x="1250.0" y="544.5" width="12.0" height="1.5" fill="#00a000"/>
<rect x="1248.0" y="548.5" width="16.0" height="6.0" fill="#00e0ff"/>
<path d="M1250 554l3-4h6l3 4z" fill="#0000c0"/>
<rect x="1248.0" y="554.5" width="16.0" height="2.0" fill="#000080"/>
<path d="M1249 577h14v-4h-4l-4-4z" fill="#aca899"/>
<rect x="1248.0" y="590.9" width="16.0" height="9.0" fill="#ffff00"/>
<circle cx="1256.0" cy="594.9" r="5.0" fill="#0000c0"/>
<rect x="1248.0" y="588.9" width="16.0" height="1.5" fill="#000080"/>
<rect x="1248.0" y="599.9" width="16.0" height="1.5" fill="#000080"/>
<rect x="1246.0" y="607.0" width="20.0" height="1.0" fill="#aca899"/>
<rect x="1246.0" y="608.0" width="20.0" height="1.0" fill="#ffffff"/>
</svg>
<div class="a" style="left:0;top:93px;width:157px;height:1px;background:#aca899"></div>
<div class="a" style="left:0;top:94px;width:153px;height:1px;background:#fff"></div>
<div class="a" style="left:0;top:95px;width:152px;height:1px;background:#aca899"></div>
<div class="a" style="left:-1px;top:97px;font-size:11px;line-height:13px">E-total, dBi(Gain)</div>
<div class="a" style="left:0;top:114px;width:153px;height:1px;background:#fff"></div>
<div class="a" style="left:0;top:117px;width:152px;height:2px;background:#716f64"></div>
<div class="a" style="left:0;top:119px;width:151px;height:662px;background:#fff"></div>
<div class="a" style="left:151px;top:117px;width:1px;height:664px;background:#f1efe2"></div>
<div class="a" style="left:0;top:781px;width:152px;height:1px;background:#fff"></div>
<div class="a" style="left:152px;top:94px;width:2px;height:751px;background:#fff"></div>
<div class="a" style="left:0;top:784px;width:152px;height:1px;background:#aca899"></div>
<div class="a" style="left:0;top:843px;width:152px;height:1px;background:#fff"></div>
<div class="leg" style="top:119px;height:20px;background:rgb(255,0,0)"></div>
<div class="legt" style="top:123px">11.0069</div>
<div class="leg" style="top:139px;height:20px;background:rgb(255,68,0)"></div>
<div class="legt" style="top:143px">9.0069</div>
<div class="leg" style="top:159px;height:20px;background:rgb(255,136,0)"></div>
<div class="legt" style="top:163px">7.0069</div>
<div class="leg" style="top:179px;height:20px;background:rgb(255,204,0)"></div>
<div class="legt" style="top:183px">5.0069</div>
<div class="leg" style="top:199px;height:20px;background:rgb(238,255,0)"></div>
<div class="legt" style="top:203px">3.0069</div>
<div class="leg" style="top:219px;height:20px;background:rgb(170,255,0)"></div>
<div class="legt" style="top:223px">1.0069</div>
<div class="leg" style="top:239px;height:20px;background:rgb(102,255,0)"></div>
<div class="legt" style="top:243px">-0.9931</div>
<div class="leg" style="top:259px;height:20px;background:rgb(17,240,0)"></div>
<div class="legt" style="top:263px">-2.9931</div>
<div class="leg" style="top:279px;height:20px;background:rgb(0,240,34)"></div>
<div class="legt" style="top:283px">-4.9931</div>
<div class="leg" style="top:299px;height:20px;background:rgb(0,238,102)"></div>
<div class="legt" style="top:303px">-6.9931</div>
<div class="leg" style="top:319px;height:20px;background:rgb(0,238,170)"></div>
<div class="legt" style="top:323px">-8.9931</div>
<div class="leg" style="top:339px;height:20px;background:rgb(0,238,238)"></div>
<div class="legt" style="top:343px">-10.9931</div>
<div class="leg" style="top:359px;height:20px;background:rgb(0,204,255)"></div>
<div class="legt" style="top:363px">-12.9931</div>
<div class="leg" style="top:379px;height:20px;background:rgb(0,136,255)"></div>
<div class="legt" style="top:383px">-14.9931</div>
<div class="leg" style="top:399px;height:20px;background:rgb(0,68,255)"></div>
<div class="legt" style="top:403px">-16.9931</div>
<div class="leg" style="top:421px;height:18px;background:rgb(0,0,255)"></div>
<div class="a" style="left:48px;top:420px;width:103px;height:19px;background:#0a0adc"></div>
<div class="legt" style="top:423px;color:#fff">-18.9931</div>
<div class="info" style="top:786px">Pattern ID: None</div>
<div class="info" style="top:799px">Freq: 2.45 (GHz)</div>
<div class="info" style="top:812px">Magnitude: E-total</div>
<div class="info" style="top:825px">Color: dBi(Gain)</div>
<div class="a" style="left:156px;top:93px;width:1088px;height:752px;background:#4d7d8c"></div>
<svg class="a" style="left:0;top:0" width="1269" height="946" viewBox="0 0 1269 946">
<defs><clipPath id="vc"><rect x="157" y="94" width="1086" height="750"/></clipPath><pattern id="mesh" width="4" height="4" patternUnits="userSpaceOnUse" patternTransform="rotate(-35)"><rect width="4" height="4" fill="#0c2029"/><path d="M0 2H4" stroke="#2e6f86" stroke-width="1.1"/></pattern><pattern id="mesh2" width="5" height="5" patternUnits="userSpaceOnUse" patternTransform="rotate(66)"><path d="M0 2.5H5" stroke="#2a6478" stroke-width="0.8" stroke-dasharray="2 1"/></pattern></defs>
<g clip-path="url(#vc)">
<rect x="157" y="94" width="1086" height="750" fill="#66d5fa"/>
<polygon points="1167,152 978,321 748,844 874,844" fill="url(#mesh)"/>
<polygon points="1167,152 978,321 748,844 874,844" fill="url(#mesh2)"/>
<g fill="none" stroke="#e4f03c" stroke-width="1.6" stroke-linecap="round">
<path d="M243,221.5 Q238,240 240,248 Q241,255 246,256"/>
<ellipse cx="254" cy="219" rx="4.5" ry="16" transform="rotate(12 254 219)"/>
<path d="M266.5,208 L267.5,211"/>
<ellipse cx="276" cy="177.5" rx="5" ry="16.5" transform="rotate(12 276 177.5)"/>
<path d="M287,140.3 Q293,146 292.2,155 Q291,170 288,178.4"/>
<path d="M1243,384.7 Q1232,392 1231.4,401 Q1232,409 1243,404"/>
<path d="M1206,438 Q1214,441 1219.6,439.5 Q1232,436 1243,429"/>
</g>
<g fill="none" stroke-width="1.8" stroke-linecap="round">
<path d="M250.8,730 L292.2,749.4 M223.7,719.8 L227,715.5 L244.8,730 L248.2,725.7" stroke="#6a6ef0"/>
<path d="M292.2,749.4 L307.4,723.1" stroke="#74f474"/>
<path d="M292.2,750 L259.2,818.7" stroke="#e08080"/>
</g>
<defs><linearGradient id="g0" gradientUnits="userSpaceOnUse" x1="950.1" y1="508.1" x2="948.9" y2="516.3"><stop offset="0" stop-color="#001405"/><stop offset="1" stop-color="#001408"/></linearGradient><linearGradient id="g4" gradientUnits="userSpaceOnUse" x1="839.0" y1="622.6" x2="851.5" y2="619.2"><stop offset="0" stop-color="#011701"/><stop offset="1" stop-color="#011502"/></linearGradient><linearGradient id="g6" gradientUnits="userSpaceOnUse" x1="919.5" y1="578.8" x2="924.0" y2="573.1"><stop offset="0" stop-color="#001409"/><stop offset="1" stop-color="#001410"/></linearGradient><linearGradient id="g7" gradientUnits="userSpaceOnUse" x1="932.2" y1="426.5" x2="937.4" y2="438.2"><stop offset="0" stop-color="#011701"/><stop offset="1" stop-color="#011501"/></linearGradient><linearGradient id="g8" gradientUnits="userSpaceOnUse" x1="925.4" y1="571.1" x2="928.9" y2="565.8"><stop offset="0" stop-color="#001410"/><stop offset="1" stop-color="#001215"/></linearGradient><linearGradient id="g9" gradientUnits="userSpaceOnUse" x1="948.4" y1="518.6" x2="946.8" y2="525.9"><stop offset="0" stop-color="#001408"/><stop offset="1" stop-color="#00140f"/></linearGradient><linearGradient id="g10" gradientUnits="userSpaceOnUse" x1="946.0" y1="528.5" x2="943.9" y2="534.7"><stop offset="0" stop-color="#00140f"/><stop offset="1" stop-color="#001214"/></linearGradient><linearGradient id="g11" gradientUnits="userSpaceOnUse" x1="825.3" y1="625.6" x2="839.0" y2="622.6"><stop offset="0" stop-color="#021900"/><stop offset="1" stop-color="#011701"/></linearGradient><linearGradient id="g13" gradientUnits="userSpaceOnUse" x1="925.8" y1="414.2" x2="932.2" y2="426.5"><stop offset="0" stop-color="#031900"/><stop offset="1" stop-color="#011701"/></linearGradient><linearGradient id="g15" gradientUnits="userSpaceOnUse" x1="810.7" y1="627.8" x2="825.3" y2="625.6"><stop offset="0" stop-color="#051c00"/><stop offset="1" stop-color="#021900"/></linearGradient><linearGradient id="g16" gradientUnits="userSpaceOnUse" x1="918.4" y1="401.8" x2="925.8" y2="414.2"><stop offset="0" stop-color="#061c00"/><stop offset="1" stop-color="#031900"/></linearGradient><linearGradient id="g17" gradientUnits="userSpaceOnUse" x1="914.3" y1="584.2" x2="919.5" y2="578.8"><stop offset="0" stop-color="#001405"/><stop offset="1" stop-color="#001409"/></linearGradient><linearGradient id="g18" gradientUnits="userSpaceOnUse" x1="927.1" y1="568.4" x2="930.2" y2="563.8"><stop offset="0" stop-color="#001410"/><stop offset="1" stop-color="#001215"/></linearGradient><linearGradient id="g20" gradientUnits="userSpaceOnUse" x1="944.8" y1="531.6" x2="943.1" y2="537.0"><stop offset="0" stop-color="#00140f"/><stop offset="1" stop-color="#001214"/></linearGradient><linearGradient id="g21" gradientUnits="userSpaceOnUse" x1="949.4" y1="510.9" x2="948.4" y2="518.6"><stop offset="0" stop-color="#001405"/><stop offset="1" stop-color="#001408"/></linearGradient><linearGradient id="g23" gradientUnits="userSpaceOnUse" x1="921.2" y1="576.2" x2="925.4" y2="571.1"><stop offset="0" stop-color="#001409"/><stop offset="1" stop-color="#001410"/></linearGradient><linearGradient id="g24" gradientUnits="userSpaceOnUse" x1="794.8" y1="629.3" x2="810.7" y2="627.8"><stop offset="0" stop-color="#0b2000"/><stop offset="1" stop-color="#051c00"/></linearGradient><linearGradient id="g25" gradientUnits="userSpaceOnUse" x1="909.7" y1="389.1" x2="918.4" y2="401.8"><stop offset="0" stop-color="#0c2100"/><stop offset="1" stop-color="#061d00"/></linearGradient><linearGradient id="g26" gradientUnits="userSpaceOnUse" x1="947.4" y1="521.8" x2="946.0" y2="528.5"><stop offset="0" stop-color="#001408"/><stop offset="1" stop-color="#00140f"/></linearGradient><linearGradient id="g28" gradientUnits="userSpaceOnUse" x1="929.0" y1="565.1" x2="931.5" y2="561.4"><stop offset="0" stop-color="#001410"/><stop offset="1" stop-color="#001215"/></linearGradient><linearGradient id="g29" gradientUnits="userSpaceOnUse" x1="943.4" y1="535.3" x2="942.1" y2="539.7"><stop offset="0" stop-color="#00140f"/><stop offset="1" stop-color="#001215"/></linearGradient><linearGradient id="g30" gradientUnits="userSpaceOnUse" x1="777.1" y1="630.4" x2="794.8" y2="629.3"><stop offset="0" stop-color="#122400"/><stop offset="1" stop-color="#0b2000"/></linearGradient><linearGradient id="g33" gradientUnits="userSpaceOnUse" x1="899.6" y1="375.3" x2="909.7" y2="389.1"><stop offset="0" stop-color="#152900"/><stop offset="1" stop-color="#0d2500"/></linearGradient><linearGradient id="g35" gradientUnits="userSpaceOnUse" x1="931.0" y1="561.4" x2="933.0" y2="558.7"><stop offset="0" stop-color="#001410"/><stop offset="1" stop-color="#001215"/></linearGradient><linearGradient id="g37" gradientUnits="userSpaceOnUse" x1="941.7" y1="539.4" x2="940.8" y2="542.7"><stop offset="0" stop-color="#001410"/><stop offset="1" stop-color="#001215"/></linearGradient><linearGradient id="g38" gradientUnits="userSpaceOnUse" x1="756.7" y1="631.1" x2="777.1" y2="630.4"><stop offset="0" stop-color="#1a2800"/><stop offset="1" stop-color="#122400"/></linearGradient><linearGradient id="g39" gradientUnits="userSpaceOnUse" x1="923.4" y1="572.8" x2="927.1" y2="568.4"><stop offset="0" stop-color="#001409"/><stop offset="1" stop-color="#001410"/></linearGradient><linearGradient id="g40" gradientUnits="userSpaceOnUse" x1="887.6" y1="359.7" x2="899.6" y2="375.3"><stop offset="0" stop-color="#1f2f00"/><stop offset="1" stop-color="#162b00"/></linearGradient><linearGradient id="g41" gradientUnits="userSpaceOnUse" x1="916.4" y1="581.0" x2="921.2" y2="576.2"><stop offset="0" stop-color="#001405"/><stop offset="1" stop-color="#001409"/></linearGradient><linearGradient id="g43" gradientUnits="userSpaceOnUse" x1="946.0" y1="525.8" x2="944.8" y2="531.6"><stop offset="0" stop-color="#001408"/><stop offset="1" stop-color="#00140f"/></linearGradient><linearGradient id="g44" gradientUnits="userSpaceOnUse" x1="933.2" y1="557.2" x2="934.6" y2="555.7"><stop offset="0" stop-color="#001410"/><stop offset="1" stop-color="#001215"/></linearGradient><linearGradient id="g45" gradientUnits="userSpaceOnUse" x1="948.2" y1="514.8" x2="947.4" y2="521.8"><stop offset="0" stop-color="#001405"/><stop offset="1" stop-color="#001408"/></linearGradient><linearGradient id="g46" gradientUnits="userSpaceOnUse" x1="939.7" y1="543.8" x2="939.4" y2="545.9"><stop offset="0" stop-color="#001410"/><stop offset="1" stop-color="#001215"/></linearGradient><linearGradient id="g48" gradientUnits="userSpaceOnUse" x1="935.4" y1="552.8" x2="936.2" y2="552.5"><stop offset="0" stop-color="#001410"/><stop offset="1" stop-color="#001215"/></linearGradient><linearGradient id="g49" gradientUnits="userSpaceOnUse" x1="937.6" y1="548.3" x2="937.8" y2="549.2"><stop offset="0" stop-color="#001410"/><stop offset="1" stop-color="#001215"/></linearGradient><linearGradient id="g52" gradientUnits="userSpaceOnUse" x1="732.1" y1="631.7" x2="756.7" y2="631.1"><stop offset="0" stop-color="#1f2900"/><stop offset="1" stop-color="#1a2800"/></linearGradient><linearGradient id="g53" gradientUnits="userSpaceOnUse" x1="872.7" y1="340.1" x2="887.6" y2="359.7"><stop offset="0" stop-color="#243000"/><stop offset="1" stop-color="#1f2e00"/></linearGradient><linearGradient id="g55" gradientUnits="userSpaceOnUse" x1="925.8" y1="568.6" x2="929.0" y2="565.1"><stop offset="0" stop-color="#001409"/><stop offset="1" stop-color="#001410"/></linearGradient><linearGradient id="g56" gradientUnits="userSpaceOnUse" x1="944.1" y1="530.5" x2="943.4" y2="535.3"><stop offset="0" stop-color="#001408"/><stop offset="1" stop-color="#00140f"/></linearGradient><linearGradient id="g60" gradientUnits="userSpaceOnUse" x1="919.0" y1="576.9" x2="923.4" y2="572.8"><stop offset="0" stop-color="#001405"/><stop offset="1" stop-color="#001409"/></linearGradient><linearGradient id="g61" gradientUnits="userSpaceOnUse" x1="854.5" y1="316.9" x2="872.7" y2="340.1"><stop offset="0" stop-color="#2b3400"/><stop offset="1" stop-color="#263200"/></linearGradient><linearGradient id="g62" gradientUnits="userSpaceOnUse" x1="702.6" y1="631.8" x2="732.1" y2="631.7"><stop offset="0" stop-color="#232a00"/><stop offset="1" stop-color="#1f2900"/></linearGradient><linearGradient id="g66" gradientUnits="userSpaceOnUse" x1="946.5" y1="519.7" x2="946.0" y2="525.8"><stop offset="0" stop-color="#001405"/><stop offset="1" stop-color="#001408"/></linearGradient><linearGradient id="g67" gradientUnits="userSpaceOnUse" x1="928.4" y1="563.8" x2="931.0" y2="561.4"><stop offset="0" stop-color="#001409"/><stop offset="1" stop-color="#001410"/></linearGradient><linearGradient id="g68" gradientUnits="userSpaceOnUse" x1="941.9" y1="535.7" x2="941.7" y2="539.4"><stop offset="0" stop-color="#001408"/><stop offset="1" stop-color="#001410"/></linearGradient><linearGradient id="g69" gradientUnits="userSpaceOnUse" x1="841.9" y1="620.4" x2="854.2" y2="617.2"><stop offset="0" stop-color="#011701"/><stop offset="1" stop-color="#011502"/></linearGradient><linearGradient id="g70" gradientUnits="userSpaceOnUse" x1="931.2" y1="558.5" x2="933.2" y2="557.2"><stop offset="0" stop-color="#001409"/><stop offset="1" stop-color="#001410"/></linearGradient><linearGradient id="g72" gradientUnits="userSpaceOnUse" x1="932.2" y1="430.2" x2="937.4" y2="441.7"><stop offset="0" stop-color="#011801"/><stop offset="1" stop-color="#011601"/></linearGradient><linearGradient id="g73" gradientUnits="userSpaceOnUse" x1="939.4" y1="541.3" x2="939.7" y2="543.8"><stop offset="0" stop-color="#001408"/><stop offset="1" stop-color="#001410"/></linearGradient><linearGradient id="g74" gradientUnits="userSpaceOnUse" x1="833.1" y1="292.5" x2="854.5" y2="316.9"><stop offset="0" stop-color="#383700"/><stop offset="1" stop-color="#303a00"/></linearGradient><linearGradient id="g75" gradientUnits="userSpaceOnUse" x1="670.2" y1="630.3" x2="702.6" y2="631.8"><stop offset="0" stop-color="#282800"/><stop offset="1" stop-color="#232a00"/></linearGradient><linearGradient id="g76" gradientUnits="userSpaceOnUse" x1="934.0" y1="552.9" x2="935.4" y2="552.8"><stop offset="0" stop-color="#001408"/><stop offset="1" stop-color="#001410"/></linearGradient><linearGradient id="g78" gradientUnits="userSpaceOnUse" x1="936.8" y1="547.1" x2="937.6" y2="548.3"><stop offset="0" stop-color="#001408"/><stop offset="1" stop-color="#001410"/></linearGradient><linearGradient id="g80" gradientUnits="userSpaceOnUse" x1="921.9" y1="571.8" x2="925.8" y2="568.6"><stop offset="0" stop-color="#001405"/><stop offset="1" stop-color="#001409"/></linearGradient><linearGradient id="g82" gradientUnits="userSpaceOnUse" x1="944.2" y1="525.4" x2="944.1" y2="530.5"><stop offset="0" stop-color="#001405"/><stop offset="1" stop-color="#001408"/></linearGradient><linearGradient id="g83" gradientUnits="userSpaceOnUse" x1="828.4" y1="623.2" x2="841.9" y2="620.4"><stop offset="0" stop-color="#021900"/><stop offset="1" stop-color="#011701"/></linearGradient><linearGradient id="g85" gradientUnits="userSpaceOnUse" x1="925.9" y1="418.3" x2="932.2" y2="430.2"><stop offset="0" stop-color="#031f00"/><stop offset="1" stop-color="#021c01"/></linearGradient><linearGradient id="g88" gradientUnits="userSpaceOnUse" x1="809.2" y1="269.0" x2="833.1" y2="292.5"><stop offset="0" stop-color="#433800"/><stop offset="1" stop-color="#403f00"/></linearGradient><linearGradient id="g89" gradientUnits="userSpaceOnUse" x1="636.9" y1="626.2" x2="670.2" y2="630.3"><stop offset="0" stop-color="#2a2300"/><stop offset="1" stop-color="#282800"/></linearGradient><linearGradient id="g91" gradientUnits="userSpaceOnUse" x1="925.1" y1="565.9" x2="928.4" y2="563.8"><stop offset="0" stop-color="#001405"/><stop offset="1" stop-color="#001409"/></linearGradient><linearGradient id="g92" gradientUnits="userSpaceOnUse" x1="814.0" y1="625.3" x2="828.4" y2="623.2"><stop offset="0" stop-color="#051c00"/><stop offset="1" stop-color="#021900"/></linearGradient><linearGradient id="g93" gradientUnits="userSpaceOnUse" x1="941.5" y1="531.8" x2="941.9" y2="535.7"><stop offset="0" stop-color="#001405"/><stop offset="1" stop-color="#001408"/></linearGradient><linearGradient id="g95" gradientUnits="userSpaceOnUse" x1="918.4" y1="406.1" x2="925.9" y2="418.3"><stop offset="0" stop-color="#082800"/><stop offset="1" stop-color="#042400"/></linearGradient><linearGradient id="g98" gradientUnits="userSpaceOnUse" x1="928.5" y1="559.5" x2="931.2" y2="558.5"><stop offset="0" stop-color="#001405"/><stop offset="1" stop-color="#001409"/></linearGradient><linearGradient id="g99" gradientUnits="userSpaceOnUse" x1="938.5" y1="538.6" x2="939.4" y2="541.3"><stop offset="0" stop-color="#001405"/><stop offset="1" stop-color="#001408"/></linearGradient><linearGradient id="g100" gradientUnits="userSpaceOnUse" x1="782.5" y1="246.0" x2="809.2" y2="269.0"><stop offset="0" stop-color="#4b3c00"/><stop offset="1" stop-color="#4a3f00"/></linearGradient><linearGradient id="g101" gradientUnits="userSpaceOnUse" x1="602.3" y1="619.7" x2="636.9" y2="626.2"><stop offset="0" stop-color="#2a2200"/><stop offset="1" stop-color="#2a2300"/></linearGradient><linearGradient id="g105" gradientUnits="userSpaceOnUse" x1="798.4" y1="626.6" x2="814.0" y2="625.3"><stop offset="0" stop-color="#0b2000"/><stop offset="1" stop-color="#051c00"/></linearGradient><linearGradient id="g106" gradientUnits="userSpaceOnUse" x1="931.9" y1="552.7" x2="934.0" y2="552.9"><stop offset="0" stop-color="#001405"/><stop offset="1" stop-color="#001408"/></linearGradient><linearGradient id="g108" gradientUnits="userSpaceOnUse" x1="935.3" y1="545.6" x2="936.8" y2="547.1"><stop offset="0" stop-color="#001405"/><stop offset="1" stop-color="#001408"/></linearGradient><linearGradient id="g109" gradientUnits="userSpaceOnUse" x1="909.8" y1="393.6" x2="918.4" y2="406.1"><stop offset="0" stop-color="#133500"/><stop offset="1" stop-color="#092d00"/></linearGradient><linearGradient id="g114" gradientUnits="userSpaceOnUse" x1="752.5" y1="222.9" x2="782.5" y2="246.0"><stop offset="0" stop-color="#523d00"/><stop offset="1" stop-color="#524100"/></linearGradient><linearGradient id="g115" gradientUnits="userSpaceOnUse" x1="565.5" y1="610.5" x2="602.3" y2="619.7"><stop offset="0" stop-color="#2a2000"/><stop offset="1" stop-color="#2a2200"/></linearGradient><linearGradient id="g116" gradientUnits="userSpaceOnUse" x1="780.9" y1="627.4" x2="798.4" y2="626.6"><stop offset="0" stop-color="#122400"/><stop offset="1" stop-color="#0b2000"/></linearGradient><linearGradient id="g118" gradientUnits="userSpaceOnUse" x1="899.6" y1="380.1" x2="909.8" y2="393.6"><stop offset="0" stop-color="#1f3e00"/><stop offset="1" stop-color="#143800"/></linearGradient><linearGradient id="g119" gradientUnits="userSpaceOnUse" x1="400.7" y1="165.8" x2="430.4" y2="152.9"><stop offset="0" stop-color="#910e00"/><stop offset="1" stop-color="#911100"/></linearGradient><linearGradient id="g120" gradientUnits="userSpaceOnUse" x1="301.9" y1="370.8" x2="310.2" y2="402.0"><stop offset="0" stop-color="#530800"/><stop offset="1" stop-color="#530a00"/></linearGradient><linearGradient id="g128" gradientUnits="userSpaceOnUse" x1="720.0" y1="201.6" x2="752.5" y2="222.9"><stop offset="0" stop-color="#5b3d00"/><stop offset="1" stop-color="#5b4400"/></linearGradient><linearGradient id="g129" gradientUnits="userSpaceOnUse" x1="528.6" y1="598.4" x2="565.5" y2="610.5"><stop offset="0" stop-color="#2a1c00"/><stop offset="1" stop-color="#2a2000"/></linearGradient><linearGradient id="g134" gradientUnits="userSpaceOnUse" x1="760.7" y1="627.9" x2="780.9" y2="627.4"><stop offset="0" stop-color="#1a2800"/><stop offset="1" stop-color="#122400"/></linearGradient><linearGradient id="g135" gradientUnits="userSpaceOnUse" x1="846.0" y1="615.4" x2="857.9" y2="612.5"><stop offset="0" stop-color="#011701"/><stop offset="1" stop-color="#011502"/></linearGradient><linearGradient id="g136" gradientUnits="userSpaceOnUse" x1="887.6" y1="364.8" x2="899.6" y2="380.1"><stop offset="0" stop-color="#304700"/><stop offset="1" stop-color="#214100"/></linearGradient><linearGradient id="g137" gradientUnits="userSpaceOnUse" x1="375.4" y1="183.4" x2="400.7" y2="165.8"><stop offset="0" stop-color="#980c00"/><stop offset="1" stop-color="#980e00"/></linearGradient><linearGradient id="g138" gradientUnits="userSpaceOnUse" x1="299.9" y1="340.0" x2="301.9" y2="370.8"><stop offset="0" stop-color="#690800"/><stop offset="1" stop-color="#690a00"/></linearGradient><linearGradient id="g141" gradientUnits="userSpaceOnUse" x1="930.8" y1="436.9" x2="936.1" y2="447.9"><stop offset="0" stop-color="#022301"/><stop offset="1" stop-color="#012002"/></linearGradient><linearGradient id="g145" gradientUnits="userSpaceOnUse" x1="686.3" y1="183.9" x2="720.0" y2="201.6"><stop offset="0" stop-color="#663900"/><stop offset="1" stop-color="#664400"/></linearGradient><linearGradient id="g146" gradientUnits="userSpaceOnUse" x1="493.8" y1="582.9" x2="528.6" y2="598.4"><stop offset="0" stop-color="#2a1800"/><stop offset="1" stop-color="#2a1c00"/></linearGradient><linearGradient id="g151" gradientUnits="userSpaceOnUse" x1="351.9" y1="203.2" x2="375.4" y2="183.4"><stop offset="0" stop-color="#9a0a00"/><stop offset="1" stop-color="#9a0c00"/></linearGradient><linearGradient id="g152" gradientUnits="userSpaceOnUse" x1="300.7" y1="309.3" x2="299.9" y2="340.0"><stop offset="0" stop-color="#720700"/><stop offset="1" stop-color="#720900"/></linearGradient><linearGradient id="g153" gradientUnits="userSpaceOnUse" x1="736.4" y1="628.3" x2="760.7" y2="627.9"><stop offset="0" stop-color="#1f2900"/><stop offset="1" stop-color="#1a2800"/></linearGradient><linearGradient id="g154" gradientUnits="userSpaceOnUse" x1="872.8" y1="345.6" x2="887.6" y2="364.8"><stop offset="0" stop-color="#374900"/><stop offset="1" stop-color="#2f4600"/></linearGradient><linearGradient id="g156" gradientUnits="userSpaceOnUse" x1="832.8" y1="617.7" x2="846.0" y2="615.4"><stop offset="0" stop-color="#021900"/><stop offset="1" stop-color="#011701"/></linearGradient><linearGradient id="g160" gradientUnits="userSpaceOnUse" x1="924.3" y1="425.5" x2="930.8" y2="436.9"><stop offset="0" stop-color="#042b00"/><stop offset="1" stop-color="#022801"/></linearGradient><linearGradient id="g164" gradientUnits="userSpaceOnUse" x1="651.5" y1="169.9" x2="686.3" y2="183.9"><stop offset="0" stop-color="#703300"/><stop offset="1" stop-color="#703f00"/></linearGradient><linearGradient id="g165" gradientUnits="userSpaceOnUse" x1="461.2" y1="564.5" x2="493.8" y2="582.9"><stop offset="0" stop-color="#2a1300"/><stop offset="1" stop-color="#2a1800"/></linearGradient><linearGradient id="g168" gradientUnits="userSpaceOnUse" x1="331.6" y1="225.7" x2="351.9" y2="203.2"><stop offset="0" stop-color="#9b0800"/><stop offset="1" stop-color="#9b0a00"/></linearGradient><linearGradient id="g173" gradientUnits="userSpaceOnUse" x1="818.7" y1="619.4" x2="832.8" y2="617.7"><stop offset="0" stop-color="#051c00"/><stop offset="1" stop-color="#021900"/></linearGradient><linearGradient id="g176" gradientUnits="userSpaceOnUse" x1="615.5" y1="158.6" x2="651.5" y2="169.9"><stop offset="0" stop-color="#792c00"/><stop offset="1" stop-color="#793700"/></linearGradient><linearGradient id="g177" gradientUnits="userSpaceOnUse" x1="430.0" y1="543.4" x2="461.2" y2="564.5"><stop offset="0" stop-color="#2a0f00"/><stop offset="1" stop-color="#2a1300"/></linearGradient><linearGradient id="g178" gradientUnits="userSpaceOnUse" x1="854.5" y1="322.8" x2="872.8" y2="345.6"><stop offset="0" stop-color="#414e00"/><stop offset="1" stop-color="#394c00"/></linearGradient><linearGradient id="g179" gradientUnits="userSpaceOnUse" x1="707.2" y1="628.2" x2="736.4" y2="628.3"><stop offset="0" stop-color="#232a00"/><stop offset="1" stop-color="#1f2900"/></linearGradient><linearGradient id="g182" gradientUnits="userSpaceOnUse" x1="916.8" y1="413.8" x2="924.3" y2="425.5"><stop offset="0" stop-color="#0b3700"/><stop offset="1" stop-color="#053100"/></linearGradient><linearGradient id="g188" gradientUnits="userSpaceOnUse" x1="578.9" y1="150.9" x2="615.5" y2="158.6"><stop offset="0" stop-color="#812800"/><stop offset="1" stop-color="#812f00"/></linearGradient><linearGradient id="g189" gradientUnits="userSpaceOnUse" x1="401.1" y1="519.6" x2="430.0" y2="543.4"><stop offset="0" stop-color="#2a0d00"/><stop offset="1" stop-color="#2a0f00"/></linearGradient><linearGradient id="g195" gradientUnits="userSpaceOnUse" x1="803.5" y1="620.3" x2="818.7" y2="619.4"><stop offset="0" stop-color="#0b2000"/><stop offset="1" stop-color="#051c00"/></linearGradient><linearGradient id="g196" gradientUnits="userSpaceOnUse" x1="542.6" y1="147.1" x2="578.9" y2="150.9"><stop offset="0" stop-color="#8a2300"/><stop offset="1" stop-color="#8a2a00"/></linearGradient><linearGradient id="g197" gradientUnits="userSpaceOnUse" x1="375.5" y1="493.5" x2="401.1" y2="519.6"><stop offset="0" stop-color="#310c00"/><stop offset="1" stop-color="#310f00"/></linearGradient><linearGradient id="g198" gradientUnits="userSpaceOnUse" x1="908.0" y1="401.7" x2="916.8" y2="413.8"><stop offset="0" stop-color="#194600"/><stop offset="1" stop-color="#0c3c00"/></linearGradient><linearGradient id="g201" gradientUnits="userSpaceOnUse" x1="332.0" y1="225.9" x2="352.7" y2="203.6"><stop offset="0" stop-color="#a40900"/><stop offset="1" stop-color="#a40b00"/></linearGradient><linearGradient id="g202" gradientUnits="userSpaceOnUse" x1="833.2" y1="298.9" x2="854.5" y2="322.8"><stop offset="0" stop-color="#515000"/><stop offset="1" stop-color="#475500"/></linearGradient><linearGradient id="g203" gradientUnits="userSpaceOnUse" x1="675.2" y1="626.4" x2="707.2" y2="628.2"><stop offset="0" stop-color="#282800"/><stop offset="1" stop-color="#232a00"/></linearGradient><linearGradient id="g204" gradientUnits="userSpaceOnUse" x1="851.2" y1="607.6" x2="862.8" y2="605.4"><stop offset="0" stop-color="#011701"/><stop offset="1" stop-color="#011502"/></linearGradient><linearGradient id="g208" gradientUnits="userSpaceOnUse" x1="505.4" y1="145.9" x2="542.6" y2="147.1"><stop offset="0" stop-color="#901c00"/><stop offset="1" stop-color="#902400"/></linearGradient><linearGradient id="g209" gradientUnits="userSpaceOnUse" x1="351.5" y1="465.1" x2="375.5" y2="493.5"><stop offset="0" stop-color="#390b00"/><stop offset="1" stop-color="#390e00"/></linearGradient><linearGradient id="g211" gradientUnits="userSpaceOnUse" x1="352.7" y1="203.6" x2="376.6" y2="184.0"><stop offset="0" stop-color="#a70b00"/><stop offset="1" stop-color="#a70d00"/></linearGradient><linearGradient id="g212" gradientUnits="userSpaceOnUse" x1="301.5" y1="309.7" x2="301.1" y2="340.6"><stop offset="0" stop-color="#7f0800"/><stop offset="1" stop-color="#7f0a00"/></linearGradient><linearGradient id="g213" gradientUnits="userSpaceOnUse" x1="927.9" y1="446.3" x2="933.4" y2="456.6"><stop offset="0" stop-color="#032c01"/><stop offset="1" stop-color="#022803"/></linearGradient><linearGradient id="g215" gradientUnits="userSpaceOnUse" x1="467.7" y1="147.4" x2="505.4" y2="145.9"><stop offset="0" stop-color="#951700"/><stop offset="1" stop-color="#951d00"/></linearGradient><linearGradient id="g216" gradientUnits="userSpaceOnUse" x1="329.2" y1="434.7" x2="351.5" y2="465.1"><stop offset="0" stop-color="#410a00"/><stop offset="1" stop-color="#410d00"/></linearGradient><linearGradient id="g219" gradientUnits="userSpaceOnUse" x1="376.6" y1="184.0" x2="402.3" y2="166.6"><stop offset="0" stop-color="#a70d00"/><stop offset="1" stop-color="#a71000"/></linearGradient><linearGradient id="g220" gradientUnits="userSpaceOnUse" x1="301.1" y1="340.6" x2="303.4" y2="371.5"><stop offset="0" stop-color="#780900"/><stop offset="1" stop-color="#780b00"/></linearGradient><linearGradient id="g224" gradientUnits="userSpaceOnUse" x1="432.3" y1="153.8" x2="467.7" y2="147.4"><stop offset="0" stop-color="#9d1300"/><stop offset="1" stop-color="#9d1800"/></linearGradient><linearGradient id="g225" gradientUnits="userSpaceOnUse" x1="312.1" y1="403.0" x2="329.2" y2="434.7"><stop offset="0" stop-color="#500900"/><stop offset="1" stop-color="#500c00"/></linearGradient><linearGradient id="g226" gradientUnits="userSpaceOnUse" x1="786.4" y1="620.7" x2="803.5" y2="620.3"><stop offset="0" stop-color="#122400"/><stop offset="1" stop-color="#0b2000"/></linearGradient><linearGradient id="g227" gradientUnits="userSpaceOnUse" x1="303.4" y1="371.5" x2="312.1" y2="403.0"><stop offset="0" stop-color="#670a00"/><stop offset="1" stop-color="#670c00"/></linearGradient><linearGradient id="g228" gradientUnits="userSpaceOnUse" x1="402.3" y1="166.6" x2="432.3" y2="153.8"><stop offset="0" stop-color="#a51000"/><stop offset="1" stop-color="#a51400"/></linearGradient><linearGradient id="g230" gradientUnits="userSpaceOnUse" x1="897.8" y1="388.6" x2="908.0" y2="401.7"><stop offset="0" stop-color="#295200"/><stop offset="1" stop-color="#1a4a00"/></linearGradient><linearGradient id="g235" gradientUnits="userSpaceOnUse" x1="809.3" y1="275.7" x2="833.2" y2="298.9"><stop offset="0" stop-color="#5e4f00"/><stop offset="1" stop-color="#5a5900"/></linearGradient><linearGradient id="g236" gradientUnits="userSpaceOnUse" x1="642.2" y1="622.1" x2="675.2" y2="626.4"><stop offset="0" stop-color="#2a2300"/><stop offset="1" stop-color="#282800"/></linearGradient><linearGradient id="g237" gradientUnits="userSpaceOnUse" x1="838.5" y1="609.3" x2="851.2" y2="607.6"><stop offset="0" stop-color="#021900"/><stop offset="1" stop-color="#011701"/></linearGradient><linearGradient id="g240" gradientUnits="userSpaceOnUse" x1="921.3" y1="435.5" x2="927.9" y2="446.3"><stop offset="0" stop-color="#053600"/><stop offset="1" stop-color="#033101"/></linearGradient><linearGradient id="g244" gradientUnits="userSpaceOnUse" x1="332.0" y1="226.9" x2="352.7" y2="205.6"><stop offset="0" stop-color="#ac0900"/><stop offset="1" stop-color="#ac0b00"/></linearGradient><linearGradient id="g246" gradientUnits="userSpaceOnUse" x1="766.6" y1="620.7" x2="786.4" y2="620.7"><stop offset="0" stop-color="#1a2800"/><stop offset="1" stop-color="#122400"/></linearGradient><linearGradient id="g247" gradientUnits="userSpaceOnUse" x1="885.6" y1="373.8" x2="897.8" y2="388.6"><stop offset="0" stop-color="#3e5d00"/><stop offset="1" stop-color="#2b5500"/></linearGradient><linearGradient id="g259" gradientUnits="userSpaceOnUse" x1="782.6" y1="253.0" x2="809.3" y2="275.7"><stop offset="0" stop-color="#675200"/><stop offset="1" stop-color="#665600"/></linearGradient><linearGradient id="g260" gradientUnits="userSpaceOnUse" x1="607.8" y1="615.3" x2="642.2" y2="622.1"><stop offset="0" stop-color="#2a2200"/><stop offset="1" stop-color="#2a2300"/></linearGradient><linearGradient id="g264" gradientUnits="userSpaceOnUse" x1="824.9" y1="610.3" x2="838.5" y2="609.3"><stop offset="0" stop-color="#051c00"/><stop offset="1" stop-color="#021900"/></linearGradient><linearGradient id="g266" gradientUnits="userSpaceOnUse" x1="913.5" y1="424.5" x2="921.3" y2="435.5"><stop offset="0" stop-color="#0e4300"/><stop offset="1" stop-color="#063d00"/></linearGradient><linearGradient id="g267" gradientUnits="userSpaceOnUse" x1="352.7" y1="205.6" x2="376.6" y2="186.9"><stop offset="0" stop-color="#b30b00"/><stop offset="1" stop-color="#b30e00"/></linearGradient><linearGradient id="g268" gradientUnits="userSpaceOnUse" x1="303.1" y1="308.5" x2="303.4" y2="338.8"><stop offset="0" stop-color="#8c0900"/><stop offset="1" stop-color="#8c0b00"/></linearGradient><linearGradient id="g269" gradientUnits="userSpaceOnUse" x1="857.5" y1="597.3" x2="868.5" y2="595.9"><stop offset="0" stop-color="#011701"/><stop offset="1" stop-color="#011502"/></linearGradient><linearGradient id="g270" gradientUnits="userSpaceOnUse" x1="742.7" y1="620.6" x2="766.6" y2="620.7"><stop offset="0" stop-color="#1f2900"/><stop offset="1" stop-color="#1a2800"/></linearGradient><linearGradient id="g271" gradientUnits="userSpaceOnUse" x1="870.6" y1="355.3" x2="885.6" y2="373.8"><stop offset="0" stop-color="#486000"/><stop offset="1" stop-color="#3d5c00"/></linearGradient><linearGradient id="g272" gradientUnits="userSpaceOnUse" x1="331.6" y1="228.7" x2="352.0" y2="209.1"><stop offset="0" stop-color="#b40a00"/><stop offset="1" stop-color="#b40c00"/></linearGradient><linearGradient id="g273" gradientUnits="userSpaceOnUse" x1="308.1" y1="277.5" x2="305.4" y2="305.6"><stop offset="0" stop-color="#9b0800"/><stop offset="1" stop-color="#9b0a00"/></linearGradient><linearGradient id="g275" gradientUnits="userSpaceOnUse" x1="923.7" y1="458.1" x2="929.6" y2="467.5"><stop offset="0" stop-color="#033401"/><stop offset="1" stop-color="#022f03"/></linearGradient><linearGradient id="g277" gradientUnits="userSpaceOnUse" x1="752.5" y1="230.2" x2="782.6" y2="253.0"><stop offset="0" stop-color="#6e5200"/><stop offset="1" stop-color="#6e5800"/></linearGradient><linearGradient id="g278" gradientUnits="userSpaceOnUse" x1="571.2" y1="606.0" x2="607.8" y2="615.3"><stop offset="0" stop-color="#2a2000"/><stop offset="1" stop-color="#2a2200"/></linearGradient><linearGradient id="g279" gradientUnits="userSpaceOnUse" x1="810.0" y1="610.6" x2="824.9" y2="610.3"><stop offset="0" stop-color="#0b2000"/><stop offset="1" stop-color="#051c00"/></linearGradient><linearGradient id="g284" gradientUnits="userSpaceOnUse" x1="904.5" y1="413.1" x2="913.5" y2="424.5"><stop offset="0" stop-color="#1e5500"/><stop offset="1" stop-color="#0f4900"/></linearGradient><linearGradient id="g285" gradientUnits="userSpaceOnUse" x1="924.6" y1="480.2" x2="929.8" y2="488.1"><stop offset="0" stop-color="#022f03"/><stop offset="1" stop-color="#012e05"/></linearGradient><linearGradient id="g287" gradientUnits="userSpaceOnUse" x1="376.6" y1="186.9" x2="402.3" y2="170.4"><stop offset="0" stop-color="#b60e00"/><stop offset="1" stop-color="#b61100"/></linearGradient><linearGradient id="g288" gradientUnits="userSpaceOnUse" x1="303.4" y1="338.8" x2="306.5" y2="369.1"><stop offset="0" stop-color="#880b00"/><stop offset="1" stop-color="#880d00"/></linearGradient><linearGradient id="g289" gradientUnits="userSpaceOnUse" x1="845.3" y1="598.2" x2="857.5" y2="597.3"><stop offset="0" stop-color="#021c00"/><stop offset="1" stop-color="#011a01"/></linearGradient><linearGradient id="g290" gradientUnits="userSpaceOnUse" x1="330.9" y1="231.3" x2="350.4" y2="214.1"><stop offset="0" stop-color="#ba0a00"/><stop offset="1" stop-color="#ba0c00"/></linearGradient><linearGradient id="g291" gradientUnits="userSpaceOnUse" x1="309.6" y1="275.4" x2="308.4" y2="301.3"><stop offset="0" stop-color="#a30900"/><stop offset="1" stop-color="#a30a00"/></linearGradient><linearGradient id="g292" gradientUnits="userSpaceOnUse" x1="720.1" y1="209.1" x2="752.5" y2="230.2"><stop offset="0" stop-color="#775000"/><stop offset="1" stop-color="#775900"/></linearGradient><linearGradient id="g293" gradientUnits="userSpaceOnUse" x1="534.5" y1="593.8" x2="571.2" y2="606.0"><stop offset="0" stop-color="#2a1c00"/><stop offset="1" stop-color="#2a2000"/></linearGradient><linearGradient id="g294" gradientUnits="userSpaceOnUse" x1="852.2" y1="333.3" x2="870.6" y2="355.3"><stop offset="0" stop-color="#546500"/><stop offset="1" stop-color="#4a6300"/></linearGradient><linearGradient id="g295" gradientUnits="userSpaceOnUse" x1="714.0" y1="619.8" x2="742.7" y2="620.6"><stop offset="0" stop-color="#232a00"/><stop offset="1" stop-color="#1f2900"/></linearGradient><linearGradient id="g296" gradientUnits="userSpaceOnUse" x1="916.8" y1="448.2" x2="923.7" y2="458.1"><stop offset="0" stop-color="#063f00"/><stop offset="1" stop-color="#033902"/></linearGradient><linearGradient id="g297" gradientUnits="userSpaceOnUse" x1="793.4" y1="610.4" x2="810.0" y2="610.6"><stop offset="0" stop-color="#132600"/><stop offset="1" stop-color="#0c2200"/></linearGradient><linearGradient id="g299" gradientUnits="userSpaceOnUse" x1="894.1" y1="400.6" x2="904.5" y2="413.1"><stop offset="0" stop-color="#326300"/><stop offset="1" stop-color="#205900"/></linearGradient><linearGradient id="g301" gradientUnits="userSpaceOnUse" x1="306.5" y1="369.1" x2="315.8" y2="400.1"><stop offset="0" stop-color="#7b0c00"/><stop offset="1" stop-color="#7b0f00"/></linearGradient><linearGradient id="g302" gradientUnits="userSpaceOnUse" x1="402.3" y1="170.4" x2="432.3" y2="158.5"><stop offset="0" stop-color="#b81100"/><stop offset="1" stop-color="#b81600"/></linearGradient><linearGradient id="g303" gradientUnits="userSpaceOnUse" x1="686.3" y1="191.5" x2="720.1" y2="209.1"><stop offset="0" stop-color="#834900"/><stop offset="1" stop-color="#835800"/></linearGradient><linearGradient id="g304" gradientUnits="userSpaceOnUse" x1="499.7" y1="578.3" x2="534.5" y2="593.8"><stop offset="0" stop-color="#2a1800"/><stop offset="1" stop-color="#2a1c00"/></linearGradient><linearGradient id="g305" gradientUnits="userSpaceOnUse" x1="864.6" y1="584.8" x2="875.1" y2="584.4"><stop offset="0" stop-color="#022001"/><stop offset="1" stop-color="#011e02"/></linearGradient><linearGradient id="g306" gradientUnits="userSpaceOnUse" x1="352.0" y1="209.1" x2="375.5" y2="192.1"><stop offset="0" stop-color="#bd0c00"/><stop offset="1" stop-color="#bd0f00"/></linearGradient><linearGradient id="g307" gradientUnits="userSpaceOnUse" x1="305.4" y1="305.6" x2="306.8" y2="334.6"><stop offset="0" stop-color="#990a00"/><stop offset="1" stop-color="#990c00"/></linearGradient><linearGradient id="g311" gradientUnits="userSpaceOnUse" x1="918.3" y1="471.9" x2="924.6" y2="480.2"><stop offset="0" stop-color="#033902"/><stop offset="1" stop-color="#023404"/></linearGradient><linearGradient id="g312" gradientUnits="userSpaceOnUse" x1="329.7" y1="234.4" x2="348.2" y2="220.4"><stop offset="0" stop-color="#bf0a00"/><stop offset="1" stop-color="#bf0c00"/></linearGradient><linearGradient id="g313" gradientUnits="userSpaceOnUse" x1="311.4" y1="272.5" x2="311.9" y2="295.7"><stop offset="0" stop-color="#ac0900"/><stop offset="1" stop-color="#ac0b00"/></linearGradient><linearGradient id="g314" gradientUnits="userSpaceOnUse" x1="918.7" y1="494.5" x2="924.4" y2="501.1"><stop offset="0" stop-color="#023103"/><stop offset="1" stop-color="#013105"/></linearGradient><linearGradient id="g315" gradientUnits="userSpaceOnUse" x1="832.2" y1="598.4" x2="845.3" y2="598.2"><stop offset="0" stop-color="#072500"/><stop offset="1" stop-color="#032100"/></linearGradient><linearGradient id="g316" gradientUnits="userSpaceOnUse" x1="432.3" y1="158.5" x2="467.8" y2="152.8"><stop offset="0" stop-color="#b41500"/><stop offset="1" stop-color="#b41c00"/></linearGradient><linearGradient id="g317" gradientUnits="userSpaceOnUse" x1="315.8" y1="400.1" x2="333.5" y2="431.3"><stop offset="0" stop-color="#690d00"/><stop offset="1" stop-color="#691000"/></linearGradient><linearGradient id="g318" gradientUnits="userSpaceOnUse" x1="467.0" y1="560.0" x2="499.7" y2="578.3"><stop offset="0" stop-color="#311600"/><stop offset="1" stop-color="#311b00"/></linearGradient><linearGradient id="g319" gradientUnits="userSpaceOnUse" x1="651.6" y1="177.3" x2="686.3" y2="191.5"><stop offset="0" stop-color="#8d4000"/><stop offset="1" stop-color="#8d4f00"/></linearGradient><linearGradient id="g320" gradientUnits="userSpaceOnUse" x1="908.7" y1="438.0" x2="916.8" y2="448.2"><stop offset="0" stop-color="#104d00"/><stop offset="1" stop-color="#074500"/></linearGradient><linearGradient id="g321" gradientUnits="userSpaceOnUse" x1="830.7" y1="310.1" x2="852.2" y2="333.3"><stop offset="0" stop-color="#686600"/><stop offset="1" stop-color="#5a6d00"/></linearGradient><linearGradient id="g322" gradientUnits="userSpaceOnUse" x1="682.5" y1="617.4" x2="714.0" y2="619.8"><stop offset="0" stop-color="#282800"/><stop offset="1" stop-color="#232a00"/></linearGradient><linearGradient id="g323" gradientUnits="userSpaceOnUse" x1="774.1" y1="609.7" x2="793.4" y2="610.4"><stop offset="0" stop-color="#1d2c00"/><stop offset="1" stop-color="#142800"/></linearGradient><linearGradient id="g324" gradientUnits="userSpaceOnUse" x1="881.7" y1="386.6" x2="894.1" y2="400.6"><stop offset="0" stop-color="#4a7000"/><stop offset="1" stop-color="#336600"/></linearGradient><linearGradient id="g325" gradientUnits="userSpaceOnUse" x1="467.8" y1="152.8" x2="505.5" y2="151.9"><stop offset="0" stop-color="#ae1b00"/><stop offset="1" stop-color="#ae2200"/></linearGradient><linearGradient id="g326" gradientUnits="userSpaceOnUse" x1="333.5" y1="431.3" x2="356.2" y2="461.4"><stop offset="0" stop-color="#5d0e00"/><stop offset="1" stop-color="#5d1200"/></linearGradient><linearGradient id="g327" gradientUnits="userSpaceOnUse" x1="615.6" y1="165.9" x2="651.6" y2="177.3"><stop offset="0" stop-color="#953600"/><stop offset="1" stop-color="#954400"/></linearGradient><linearGradient id="g328" gradientUnits="userSpaceOnUse" x1="435.7" y1="538.9" x2="467.0" y2="560.0"><stop offset="0" stop-color="#3a1500"/><stop offset="1" stop-color="#3a1a00"/></linearGradient><linearGradient id="g329" gradientUnits="userSpaceOnUse" x1="505.5" y1="151.9" x2="542.6" y2="153.6"><stop offset="0" stop-color="#aa2100"/><stop offset="1" stop-color="#aa2b00"/></linearGradient><linearGradient id="g330" gradientUnits="userSpaceOnUse" x1="356.2" y1="461.4" x2="380.6" y2="489.4"><stop offset="0" stop-color="#561100"/><stop offset="1" stop-color="#561600"/></linearGradient><linearGradient id="g331" gradientUnits="userSpaceOnUse" x1="328.2" y1="238.1" x2="345.3" y2="227.7"><stop offset="0" stop-color="#c30b00"/><stop offset="1" stop-color="#c30d00"/></linearGradient><linearGradient id="g332" gradientUnits="userSpaceOnUse" x1="313.4" y1="269.0" x2="315.8" y2="288.8"><stop offset="0" stop-color="#b30a00"/><stop offset="1" stop-color="#b30b00"/></linearGradient><linearGradient id="g333" gradientUnits="userSpaceOnUse" x1="579.0" y1="157.8" x2="615.6" y2="165.9"><stop offset="0" stop-color="#9d3000"/><stop offset="1" stop-color="#9d3900"/></linearGradient><linearGradient id="g334" gradientUnits="userSpaceOnUse" x1="406.6" y1="515.3" x2="435.7" y2="538.9"><stop offset="0" stop-color="#431500"/><stop offset="1" stop-color="#431900"/></linearGradient><linearGradient id="g336" gradientUnits="userSpaceOnUse" x1="542.6" y1="153.6" x2="579.0" y2="157.8"><stop offset="0" stop-color="#a52900"/><stop offset="1" stop-color="#a53300"/></linearGradient><linearGradient id="g337" gradientUnits="userSpaceOnUse" x1="380.6" y1="489.4" x2="406.6" y2="515.3"><stop offset="0" stop-color="#4e1400"/><stop offset="1" stop-color="#4e1800"/></linearGradient><linearGradient id="g338" gradientUnits="userSpaceOnUse" x1="912.0" y1="509.7" x2="918.3" y2="515.1"><stop offset="0" stop-color="#023203"/><stop offset="1" stop-color="#013105"/></linearGradient><linearGradient id="g339" gradientUnits="userSpaceOnUse" x1="853.0" y1="584.7" x2="864.6" y2="584.8"><stop offset="0" stop-color="#042900"/><stop offset="1" stop-color="#022501"/></linearGradient><linearGradient id="g340" gradientUnits="userSpaceOnUse" x1="911.0" y1="463.0" x2="918.3" y2="471.9"><stop offset="0" stop-color="#074500"/><stop offset="1" stop-color="#043f02"/></linearGradient><linearGradient id="g341" gradientUnits="userSpaceOnUse" x1="817.9" y1="597.9" x2="832.2" y2="598.4"><stop offset="0" stop-color="#113100"/><stop offset="1" stop-color="#082a00"/></linearGradient><linearGradient id="g342" gradientUnits="userSpaceOnUse" x1="872.4" y1="570.5" x2="882.2" y2="571.2"><stop offset="0" stop-color="#022a01"/><stop offset="1" stop-color="#012603"/></linearGradient><linearGradient id="g343" gradientUnits="userSpaceOnUse" x1="897.3" y1="541.3" x2="904.8" y2="544.1"><stop offset="0" stop-color="#022d03"/><stop offset="1" stop-color="#012d05"/></linearGradient><linearGradient id="g344" gradientUnits="userSpaceOnUse" x1="899.4" y1="427.4" x2="908.7" y2="438.0"><stop offset="0" stop-color="#226100"/><stop offset="1" stop-color="#115300"/></linearGradient><linearGradient id="g345" gradientUnits="userSpaceOnUse" x1="904.8" y1="525.5" x2="911.7" y2="529.6"><stop offset="0" stop-color="#023103"/><stop offset="1" stop-color="#013005"/></linearGradient><linearGradient id="g346" gradientUnits="userSpaceOnUse" x1="911.9" y1="487.3" x2="918.7" y2="494.5"><stop offset="0" stop-color="#033c02"/><stop offset="1" stop-color="#023704"/></linearGradient><linearGradient id="g347" gradientUnits="userSpaceOnUse" x1="326.5" y1="242.3" x2="341.8" y2="236.0"><stop offset="0" stop-color="#c50b00"/><stop offset="1" stop-color="#c50d00"/></linearGradient><linearGradient id="g348" gradientUnits="userSpaceOnUse" x1="315.5" y1="265.1" x2="320.1" y2="281.0"><stop offset="0" stop-color="#ba0a00"/><stop offset="1" stop-color="#ba0c00"/></linearGradient><linearGradient id="g349" gradientUnits="userSpaceOnUse" x1="375.5" y1="192.1" x2="400.8" y2="177.3"><stop offset="0" stop-color="#c30f00"/><stop offset="1" stop-color="#c31200"/></linearGradient><linearGradient id="g350" gradientUnits="userSpaceOnUse" x1="306.8" y1="334.6" x2="310.9" y2="363.7"><stop offset="0" stop-color="#970c00"/><stop offset="1" stop-color="#970e00"/></linearGradient><linearGradient id="g351" gradientUnits="userSpaceOnUse" x1="350.4" y1="214.1" x2="373.2" y2="199.5"><stop offset="0" stop-color="#c70d00"/><stop offset="1" stop-color="#c71000"/></linearGradient><linearGradient id="g352" gradientUnits="userSpaceOnUse" x1="308.4" y1="301.3" x2="311.1" y2="328.3"><stop offset="0" stop-color="#a60b00"/><stop offset="1" stop-color="#a60d00"/></linearGradient><linearGradient id="g353" gradientUnits="userSpaceOnUse" x1="806.7" y1="287.7" x2="830.7" y2="310.1"><stop offset="0" stop-color="#766400"/><stop offset="1" stop-color="#727000"/></linearGradient><linearGradient id="g354" gradientUnits="userSpaceOnUse" x1="649.9" y1="612.6" x2="682.5" y2="617.4"><stop offset="0" stop-color="#2a2300"/><stop offset="1" stop-color="#282800"/></linearGradient><linearGradient id="g355" gradientUnits="userSpaceOnUse" x1="750.8" y1="608.8" x2="774.1" y2="609.7"><stop offset="0" stop-color="#232f00"/><stop offset="1" stop-color="#1e2d00"/></linearGradient><linearGradient id="g356" gradientUnits="userSpaceOnUse" x1="866.4" y1="369.0" x2="881.7" y2="386.6"><stop offset="0" stop-color="#567300"/><stop offset="1" stop-color="#4a6f00"/></linearGradient><linearGradient id="g357" gradientUnits="userSpaceOnUse" x1="324.5" y1="246.8" x2="337.9" y2="244.8"><stop offset="0" stop-color="#c60b00"/><stop offset="1" stop-color="#c60d00"/></linearGradient><linearGradient id="g358" gradientUnits="userSpaceOnUse" x1="317.8" y1="260.7" x2="324.6" y2="272.4"><stop offset="0" stop-color="#bf0a00"/><stop offset="1" stop-color="#bf0c00"/></linearGradient><linearGradient id="g359" gradientUnits="userSpaceOnUse" x1="322.3" y1="251.4" x2="333.6" y2="254.0"><stop offset="0" stop-color="#c50b00"/><stop offset="1" stop-color="#c50d00"/></linearGradient><linearGradient id="g360" gradientUnits="userSpaceOnUse" x1="320.1" y1="256.1" x2="329.1" y2="263.3"><stop offset="0" stop-color="#c30b00"/><stop offset="1" stop-color="#c30d00"/></linearGradient><linearGradient id="g361" gradientUnits="userSpaceOnUse" x1="880.5" y1="554.7" x2="889.6" y2="556.7"><stop offset="0" stop-color="#033202"/><stop offset="1" stop-color="#022d03"/></linearGradient><linearGradient id="g362" gradientUnits="userSpaceOnUse" x1="840.4" y1="583.9" x2="853.0" y2="584.7"><stop offset="0" stop-color="#0a3300"/><stop offset="1" stop-color="#042e00"/></linearGradient><linearGradient id="g363" gradientUnits="userSpaceOnUse" x1="801.7" y1="596.8" x2="817.9" y2="597.9"><stop offset="0" stop-color="#1d3b00"/><stop offset="1" stop-color="#123500"/></linearGradient><linearGradient id="g364" gradientUnits="userSpaceOnUse" x1="904.7" y1="503.8" x2="912.0" y2="509.7"><stop offset="0" stop-color="#033d02"/><stop offset="1" stop-color="#023804"/></linearGradient><linearGradient id="g365" gradientUnits="userSpaceOnUse" x1="902.5" y1="453.8" x2="911.0" y2="463.0"><stop offset="0" stop-color="#115400"/><stop offset="1" stop-color="#074c00"/></linearGradient><linearGradient id="g366" gradientUnits="userSpaceOnUse" x1="888.6" y1="415.8" x2="899.4" y2="427.4"><stop offset="0" stop-color="#397000"/><stop offset="1" stop-color="#246500"/></linearGradient><linearGradient id="g367" gradientUnits="userSpaceOnUse" x1="861.4" y1="569.2" x2="872.4" y2="570.5"><stop offset="0" stop-color="#053300"/><stop offset="1" stop-color="#032f02"/></linearGradient><linearGradient id="g368" gradientUnits="userSpaceOnUse" x1="779.9" y1="265.5" x2="806.7" y2="287.7"><stop offset="0" stop-color="#806600"/><stop offset="1" stop-color="#7f6b00"/></linearGradient><linearGradient id="g369" gradientUnits="userSpaceOnUse" x1="615.9" y1="605.4" x2="649.9" y2="612.6"><stop offset="0" stop-color="#2c2300"/><stop offset="1" stop-color="#2c2500"/></linearGradient><linearGradient id="g370" gradientUnits="userSpaceOnUse" x1="904.1" y1="479.6" x2="911.9" y2="487.3"><stop offset="0" stop-color="#074800"/><stop offset="1" stop-color="#044202"/></linearGradient><linearGradient id="g371" gradientUnits="userSpaceOnUse" x1="888.7" y1="538.0" x2="897.3" y2="541.3"><stop offset="0" stop-color="#033702"/><stop offset="1" stop-color="#023304"/></linearGradient><linearGradient id="g372" gradientUnits="userSpaceOnUse" x1="896.9" y1="520.9" x2="904.8" y2="525.5"><stop offset="0" stop-color="#033b02"/><stop offset="1" stop-color="#023604"/></linearGradient><linearGradient id="g373" gradientUnits="userSpaceOnUse" x1="400.8" y1="177.3" x2="430.5" y2="166.8"><stop offset="0" stop-color="#c91300"/><stop offset="1" stop-color="#c91800"/></linearGradient><linearGradient id="g374" gradientUnits="userSpaceOnUse" x1="310.9" y1="363.7" x2="321.2" y2="393.5"><stop offset="0" stop-color="#900e00"/><stop offset="1" stop-color="#901100"/></linearGradient><linearGradient id="g375" gradientUnits="userSpaceOnUse" x1="348.2" y1="220.4" x2="369.9" y2="208.7"><stop offset="0" stop-color="#ce0d00"/><stop offset="1" stop-color="#ce1000"/></linearGradient><linearGradient id="g376" gradientUnits="userSpaceOnUse" x1="311.9" y1="295.7" x2="316.3" y2="319.9"><stop offset="0" stop-color="#b20b00"/><stop offset="1" stop-color="#b20e00"/></linearGradient><linearGradient id="g377" gradientUnits="userSpaceOnUse" x1="847.7" y1="348.1" x2="866.4" y2="369.0"><stop offset="0" stop-color="#657900"/><stop offset="1" stop-color="#587600"/></linearGradient><linearGradient id="g378" gradientUnits="userSpaceOnUse" x1="722.8" y1="607.1" x2="750.8" y2="608.8"><stop offset="0" stop-color="#2a3300"/><stop offset="1" stop-color="#253100"/></linearGradient><linearGradient id="g379" gradientUnits="userSpaceOnUse" x1="826.7" y1="582.5" x2="840.4" y2="583.9"><stop offset="0" stop-color="#174200"/><stop offset="1" stop-color="#0b3900"/></linearGradient><linearGradient id="g380" gradientUnits="userSpaceOnUse" x1="783.1" y1="595.2" x2="801.7" y2="596.8"><stop offset="0" stop-color="#2d4400"/><stop offset="1" stop-color="#1f3e00"/></linearGradient><linearGradient id="g381" gradientUnits="userSpaceOnUse" x1="875.9" y1="402.6" x2="888.6" y2="415.8"><stop offset="0" stop-color="#547f00"/><stop offset="1" stop-color="#3a7300"/></linearGradient><linearGradient id="g382" gradientUnits="userSpaceOnUse" x1="892.9" y1="444.1" x2="902.5" y2="453.8"><stop offset="0" stop-color="#256900"/><stop offset="1" stop-color="#125b00"/></linearGradient><linearGradient id="g383" gradientUnits="userSpaceOnUse" x1="870.2" y1="552.2" x2="880.5" y2="554.7"><stop offset="0" stop-color="#053c00"/><stop offset="1" stop-color="#033702"/></linearGradient><linearGradient id="g384" gradientUnits="userSpaceOnUse" x1="749.7" y1="243.1" x2="779.9" y2="265.5"><stop offset="0" stop-color="#886500"/><stop offset="1" stop-color="#886c00"/></linearGradient><linearGradient id="g385" gradientUnits="userSpaceOnUse" x1="579.6" y1="595.8" x2="615.9" y2="605.4"><stop offset="0" stop-color="#332600"/><stop offset="1" stop-color="#332800"/></linearGradient><linearGradient id="g386" gradientUnits="userSpaceOnUse" x1="896.3" y1="497.3" x2="904.7" y2="503.8"><stop offset="0" stop-color="#074900"/><stop offset="1" stop-color="#044302"/></linearGradient><linearGradient id="g387" gradientUnits="userSpaceOnUse" x1="373.2" y1="199.5" x2="397.9" y2="186.9"><stop offset="0" stop-color="#ce1000"/><stop offset="1" stop-color="#ce1400"/></linearGradient><linearGradient id="g388" gradientUnits="userSpaceOnUse" x1="311.1" y1="328.3" x2="316.6" y2="355.4"><stop offset="0" stop-color="#a70d00"/><stop offset="1" stop-color="#a71000"/></linearGradient><linearGradient id="g389" gradientUnits="userSpaceOnUse" x1="849.4" y1="567.3" x2="861.4" y2="569.2"><stop offset="0" stop-color="#0c4000"/><stop offset="1" stop-color="#053a00"/></linearGradient><linearGradient id="g390" gradientUnits="userSpaceOnUse" x1="430.5" y1="166.8" x2="465.7" y2="162.4"><stop offset="0" stop-color="#c91800"/><stop offset="1" stop-color="#c91f00"/></linearGradient><linearGradient id="g391" gradientUnits="userSpaceOnUse" x1="321.2" y1="393.5" x2="339.7" y2="423.7"><stop offset="0" stop-color="#831000"/><stop offset="1" stop-color="#831400"/></linearGradient><linearGradient id="g392" gradientUnits="userSpaceOnUse" x1="895.2" y1="471.5" x2="904.1" y2="479.6"><stop offset="0" stop-color="#125800"/><stop offset="1" stop-color="#085000"/></linearGradient><linearGradient id="g393" gradientUnits="userSpaceOnUse" x1="879.1" y1="534.2" x2="888.7" y2="538.0"><stop offset="0" stop-color="#064300"/><stop offset="1" stop-color="#033d02"/></linearGradient><linearGradient id="g394" gradientUnits="userSpaceOnUse" x1="887.9" y1="515.7" x2="896.9" y2="520.9"><stop offset="0" stop-color="#074700"/><stop offset="1" stop-color="#044102"/></linearGradient><linearGradient id="g395" gradientUnits="userSpaceOnUse" x1="345.3" y1="227.7" x2="365.6" y2="219.6"><stop offset="0" stop-color="#d40e00"/><stop offset="1" stop-color="#d41100"/></linearGradient><linearGradient id="g396" gradientUnits="userSpaceOnUse" x1="315.8" y1="288.8" x2="322.1" y2="309.8"><stop offset="0" stop-color="#bd0c00"/><stop offset="1" stop-color="#bd0f00"/></linearGradient><linearGradient id="g397" gradientUnits="userSpaceOnUse" x1="825.8" y1="326.0" x2="847.7" y2="348.1"><stop offset="0" stop-color="#7b7900"/><stop offset="1" stop-color="#6c8100"/></linearGradient><linearGradient id="g398" gradientUnits="userSpaceOnUse" x1="691.8" y1="603.7" x2="722.8" y2="607.1"><stop offset="0" stop-color="#363600"/><stop offset="1" stop-color="#303900"/></linearGradient><linearGradient id="g399" gradientUnits="userSpaceOnUse" x1="717.2" y1="222.3" x2="749.7" y2="243.1"><stop offset="0" stop-color="#916200"/><stop offset="1" stop-color="#916d00"/></linearGradient><linearGradient id="g400" gradientUnits="userSpaceOnUse" x1="543.1" y1="583.3" x2="579.6" y2="595.8"><stop offset="0" stop-color="#3b2800"/><stop offset="1" stop-color="#3b2c00"/></linearGradient><linearGradient id="g401" gradientUnits="userSpaceOnUse" x1="811.1" y1="580.4" x2="826.7" y2="582.5"><stop offset="0" stop-color="#274f00"/><stop offset="1" stop-color="#184700"/></linearGradient><linearGradient id="g402" gradientUnits="userSpaceOnUse" x1="881.7" y1="433.5" x2="892.9" y2="444.1"><stop offset="0" stop-color="#3d7a00"/><stop offset="1" stop-color="#276e00"/></linearGradient><linearGradient id="g403" gradientUnits="userSpaceOnUse" x1="465.7" y1="162.4" x2="503.2" y2="162.6"><stop offset="0" stop-color="#c51e00"/><stop offset="1" stop-color="#c52700"/></linearGradient><linearGradient id="g404" gradientUnits="userSpaceOnUse" x1="339.7" y1="423.7" x2="363.1" y2="453.0"><stop offset="0" stop-color="#791300"/><stop offset="1" stop-color="#791800"/></linearGradient><linearGradient id="g405" gradientUnits="userSpaceOnUse" x1="760.4" y1="593.2" x2="783.1" y2="595.2"><stop offset="0" stop-color="#364800"/><stop offset="1" stop-color="#2e4500"/></linearGradient><linearGradient id="g406" gradientUnits="userSpaceOnUse" x1="860.2" y1="386.2" x2="875.9" y2="402.6"><stop offset="0" stop-color="#628300"/><stop offset="1" stop-color="#547e00"/></linearGradient><linearGradient id="g407" gradientUnits="userSpaceOnUse" x1="858.8" y1="549.1" x2="870.2" y2="552.2"><stop offset="0" stop-color="#0e4a00"/><stop offset="1" stop-color="#064300"/></linearGradient><linearGradient id="g408" gradientUnits="userSpaceOnUse" x1="886.8" y1="490.4" x2="896.3" y2="497.3"><stop offset="0" stop-color="#125900"/><stop offset="1" stop-color="#085100"/></linearGradient><linearGradient id="g409" gradientUnits="userSpaceOnUse" x1="836.3" y1="564.8" x2="849.4" y2="567.3"><stop offset="0" stop-color="#1c5100"/><stop offset="1" stop-color="#0d4600"/></linearGradient><linearGradient id="g410" gradientUnits="userSpaceOnUse" x1="341.8" y1="236.0" x2="360.5" y2="231.8"><stop offset="0" stop-color="#d70e00"/><stop offset="1" stop-color="#d71100"/></linearGradient><linearGradient id="g411" gradientUnits="userSpaceOnUse" x1="320.1" y1="281.0" x2="328.4" y2="298.2"><stop offset="0" stop-color="#c60d00"/><stop offset="1" stop-color="#c61000"/></linearGradient><linearGradient id="g412" gradientUnits="userSpaceOnUse" x1="885.0" y1="462.9" x2="895.2" y2="471.5"><stop offset="0" stop-color="#276e00"/><stop offset="1" stop-color="#135f00"/></linearGradient><linearGradient id="g413" gradientUnits="userSpaceOnUse" x1="683.4" y1="204.8" x2="717.2" y2="222.3"><stop offset="0" stop-color="#9d5800"/><stop offset="1" stop-color="#9d6900"/></linearGradient><linearGradient id="g414" gradientUnits="userSpaceOnUse" x1="508.4" y1="567.8" x2="543.1" y2="583.3"><stop offset="0" stop-color="#462700"/><stop offset="1" stop-color="#462f00"/></linearGradient><linearGradient id="g415" gradientUnits="userSpaceOnUse" x1="503.2" y1="162.6" x2="540.1" y2="165.1"><stop offset="0" stop-color="#c22600"/><stop offset="1" stop-color="#c23100"/></linearGradient><linearGradient id="g416" gradientUnits="userSpaceOnUse" x1="363.1" y1="453.0" x2="388.1" y2="480.3"><stop offset="0" stop-color="#731700"/><stop offset="1" stop-color="#731d00"/></linearGradient><linearGradient id="g417" gradientUnits="userSpaceOnUse" x1="868.4" y1="529.9" x2="879.1" y2="534.2"><stop offset="0" stop-color="#105200"/><stop offset="1" stop-color="#074a00"/></linearGradient><linearGradient id="g418" gradientUnits="userSpaceOnUse" x1="877.8" y1="510.1" x2="887.9" y2="515.7"><stop offset="0" stop-color="#115700"/><stop offset="1" stop-color="#074f00"/></linearGradient><linearGradient id="g419" gradientUnits="userSpaceOnUse" x1="397.9" y1="186.9" x2="426.9" y2="178.5"><stop offset="0" stop-color="#d81500"/><stop offset="1" stop-color="#d81a00"/></linearGradient><linearGradient id="g420" gradientUnits="userSpaceOnUse" x1="316.6" y1="355.4" x2="328.1" y2="383.4"><stop offset="0" stop-color="#a41000"/><stop offset="1" stop-color="#a41400"/></linearGradient><linearGradient id="g421" gradientUnits="userSpaceOnUse" x1="369.9" y1="208.7" x2="393.5" y2="199.0"><stop offset="0" stop-color="#d71100"/><stop offset="1" stop-color="#d71400"/></linearGradient><linearGradient id="g422" gradientUnits="userSpaceOnUse" x1="316.3" y1="319.9" x2="323.3" y2="344.5"><stop offset="0" stop-color="#b50e00"/><stop offset="1" stop-color="#b51100"/></linearGradient><linearGradient id="g423" gradientUnits="userSpaceOnUse" x1="648.7" y1="190.5" x2="683.4" y2="204.8"><stop offset="0" stop-color="#a74c00"/><stop offset="1" stop-color="#a75e00"/></linearGradient><linearGradient id="g424" gradientUnits="userSpaceOnUse" x1="475.5" y1="549.5" x2="508.4" y2="567.8"><stop offset="0" stop-color="#502500"/><stop offset="1" stop-color="#502d00"/></linearGradient><linearGradient id="g425" gradientUnits="userSpaceOnUse" x1="540.1" y1="165.1" x2="576.3" y2="170.1"><stop offset="0" stop-color="#be3000"/><stop offset="1" stop-color="#be3a00"/></linearGradient><linearGradient id="g426" gradientUnits="userSpaceOnUse" x1="388.1" y1="480.3" x2="414.5" y2="505.5"><stop offset="0" stop-color="#6c1b00"/><stop offset="1" stop-color="#6c2100"/></linearGradient><linearGradient id="g427" gradientUnits="userSpaceOnUse" x1="337.9" y1="244.8" x2="354.7" y2="244.8"><stop offset="0" stop-color="#d80e00"/><stop offset="1" stop-color="#d81100"/></linearGradient><linearGradient id="g428" gradientUnits="userSpaceOnUse" x1="324.6" y1="272.4" x2="335.0" y2="285.5"><stop offset="0" stop-color="#ce0d00"/><stop offset="1" stop-color="#ce1000"/></linearGradient><linearGradient id="g429" gradientUnits="userSpaceOnUse" x1="793.2" y1="577.7" x2="811.1" y2="580.4"><stop offset="0" stop-color="#3c5a00"/><stop offset="1" stop-color="#295200"/></linearGradient><linearGradient id="g430" gradientUnits="userSpaceOnUse" x1="801.5" y1="304.4" x2="825.8" y2="326.0"><stop offset="0" stop-color="#8b7500"/><stop offset="1" stop-color="#868400"/></linearGradient><linearGradient id="g431" gradientUnits="userSpaceOnUse" x1="659.8" y1="598.1" x2="691.8" y2="603.7"><stop offset="0" stop-color="#423700"/><stop offset="1" stop-color="#3f3e00"/></linearGradient><linearGradient id="g432" gradientUnits="userSpaceOnUse" x1="612.8" y1="178.7" x2="648.7" y2="190.5"><stop offset="0" stop-color="#af4000"/><stop offset="1" stop-color="#af5000"/></linearGradient><linearGradient id="g433" gradientUnits="userSpaceOnUse" x1="444.0" y1="528.7" x2="475.5" y2="549.5"><stop offset="0" stop-color="#592000"/><stop offset="1" stop-color="#592900"/></linearGradient><linearGradient id="g434" gradientUnits="userSpaceOnUse" x1="868.5" y1="421.4" x2="881.7" y2="433.5"><stop offset="0" stop-color="#5c8900"/><stop offset="1" stop-color="#3f7d00"/></linearGradient><linearGradient id="g435" gradientUnits="userSpaceOnUse" x1="576.3" y1="170.1" x2="612.8" y2="178.7"><stop offset="0" stop-color="#b73800"/><stop offset="1" stop-color="#b74300"/></linearGradient><linearGradient id="g436" gradientUnits="userSpaceOnUse" x1="414.5" y1="505.5" x2="444.0" y2="528.7"><stop offset="0" stop-color="#621e00"/><stop offset="1" stop-color="#622400"/></linearGradient><linearGradient id="g437" gradientUnits="userSpaceOnUse" x1="333.6" y1="254.0" x2="348.4" y2="258.4"><stop offset="0" stop-color="#d70e00"/><stop offset="1" stop-color="#d71100"/></linearGradient><linearGradient id="g438" gradientUnits="userSpaceOnUse" x1="329.1" y1="263.3" x2="341.8" y2="272.1"><stop offset="0" stop-color="#d40e00"/><stop offset="1" stop-color="#d41100"/></linearGradient><linearGradient id="g439" gradientUnits="userSpaceOnUse" x1="846.3" y1="545.4" x2="858.8" y2="549.1"><stop offset="0" stop-color="#215e00"/><stop offset="1" stop-color="#105100"/></linearGradient><linearGradient id="g440" gradientUnits="userSpaceOnUse" x1="876.2" y1="483.0" x2="886.8" y2="490.4"><stop offset="0" stop-color="#276f00"/><stop offset="1" stop-color="#136000"/></linearGradient><linearGradient id="g441" gradientUnits="userSpaceOnUse" x1="821.4" y1="561.6" x2="836.3" y2="564.8"><stop offset="0" stop-color="#306000"/><stop offset="1" stop-color="#1e5600"/></linearGradient><linearGradient id="g442" gradientUnits="userSpaceOnUse" x1="841.0" y1="366.7" x2="860.2" y2="386.2"><stop offset="0" stop-color="#728a00"/><stop offset="1" stop-color="#648600"/></linearGradient><linearGradient id="g443" gradientUnits="userSpaceOnUse" x1="733.2" y1="590.2" x2="760.4" y2="593.2"><stop offset="0" stop-color="#404d00"/><stop offset="1" stop-color="#384b00"/></linearGradient><linearGradient id="g444" gradientUnits="userSpaceOnUse" x1="873.3" y1="453.4" x2="885.0" y2="462.9"><stop offset="0" stop-color="#408000"/><stop offset="1" stop-color="#297300"/></linearGradient><linearGradient id="g445" gradientUnits="userSpaceOnUse" x1="856.5" y1="524.9" x2="868.4" y2="529.9"><stop offset="0" stop-color="#246700"/><stop offset="1" stop-color="#115900"/></linearGradient><linearGradient id="g446" gradientUnits="userSpaceOnUse" x1="866.6" y1="503.9" x2="877.8" y2="510.1"><stop offset="0" stop-color="#266d00"/><stop offset="1" stop-color="#125e00"/></linearGradient><linearGradient id="g447" gradientUnits="userSpaceOnUse" x1="774.4" y1="283.0" x2="801.5" y2="304.4"><stop offset="0" stop-color="#967800"/><stop offset="1" stop-color="#947d00"/></linearGradient><linearGradient id="g448" gradientUnits="userSpaceOnUse" x1="626.2" y1="590.3" x2="659.8" y2="598.1"><stop offset="0" stop-color="#4a3b00"/><stop offset="1" stop-color="#493e00"/></linearGradient><linearGradient id="g449" gradientUnits="userSpaceOnUse" x1="426.9" y1="178.5" x2="461.5" y2="175.9"><stop offset="0" stop-color="#db1a00"/><stop offset="1" stop-color="#db2200"/></linearGradient><linearGradient id="g450" gradientUnits="userSpaceOnUse" x1="328.1" y1="383.4" x2="347.6" y2="412.1"><stop offset="0" stop-color="#9c1300"/><stop offset="1" stop-color="#9c1800"/></linearGradient><linearGradient id="g451" gradientUnits="userSpaceOnUse" x1="365.6" y1="219.6" x2="387.9" y2="213.2"><stop offset="0" stop-color="#dd1100"/><stop offset="1" stop-color="#dd1500"/></linearGradient><linearGradient id="g452" gradientUnits="userSpaceOnUse" x1="322.1" y1="309.8" x2="331.0" y2="331.2"><stop offset="0" stop-color="#c20f00"/><stop offset="1" stop-color="#c21200"/></linearGradient><linearGradient id="g453" gradientUnits="userSpaceOnUse" x1="771.2" y1="574.3" x2="793.2" y2="577.7"><stop offset="0" stop-color="#475f00"/><stop offset="1" stop-color="#3d5b00"/></linearGradient><linearGradient id="g454" gradientUnits="userSpaceOnUse" x1="852.2" y1="406.4" x2="868.5" y2="421.4"><stop offset="0" stop-color="#6b8f00"/><stop offset="1" stop-color="#5b8900"/></linearGradient><linearGradient id="g455" gradientUnits="userSpaceOnUse" x1="832.1" y1="541.0" x2="846.3" y2="545.4"><stop offset="0" stop-color="#376e00"/><stop offset="1" stop-color="#226300"/></linearGradient><linearGradient id="g456" gradientUnits="userSpaceOnUse" x1="863.9" y1="474.7" x2="876.2" y2="483.0"><stop offset="0" stop-color="#418100"/><stop offset="1" stop-color="#297400"/></linearGradient><linearGradient id="g457" gradientUnits="userSpaceOnUse" x1="804.1" y1="557.6" x2="821.4" y2="561.6"><stop offset="0" stop-color="#496d00"/><stop offset="1" stop-color="#316300"/></linearGradient><linearGradient id="g458" gradientUnits="userSpaceOnUse" x1="859.6" y1="442.5" x2="873.3" y2="453.4"><stop offset="0" stop-color="#609000"/><stop offset="1" stop-color="#428300"/></linearGradient><linearGradient id="g459" gradientUnits="userSpaceOnUse" x1="818.6" y1="345.9" x2="841.0" y2="366.7"><stop offset="0" stop-color="#8b8900"/><stop offset="1" stop-color="#7a9200"/></linearGradient><linearGradient id="g460" gradientUnits="userSpaceOnUse" x1="703.0" y1="585.7" x2="733.2" y2="590.2"><stop offset="0" stop-color="#504f00"/><stop offset="1" stop-color="#465400"/></linearGradient><linearGradient id="g461" gradientUnits="userSpaceOnUse" x1="393.5" y1="199.0" x2="421.6" y2="193.2"><stop offset="0" stop-color="#e41600"/><stop offset="1" stop-color="#e41b00"/></linearGradient><linearGradient id="g462" gradientUnits="userSpaceOnUse" x1="323.3" y1="344.5" x2="336.3" y2="370.1"><stop offset="0" stop-color="#b71100"/><stop offset="1" stop-color="#b71600"/></linearGradient><linearGradient id="g463" gradientUnits="userSpaceOnUse" x1="843.0" y1="519.2" x2="856.5" y2="524.9"><stop offset="0" stop-color="#3c7800"/><stop offset="1" stop-color="#266c00"/></linearGradient><linearGradient id="g464" gradientUnits="userSpaceOnUse" x1="853.7" y1="496.9" x2="866.6" y2="503.9"><stop offset="0" stop-color="#407f00"/><stop offset="1" stop-color="#287200"/></linearGradient><linearGradient id="g465" gradientUnits="userSpaceOnUse" x1="744.1" y1="261.3" x2="774.4" y2="283.0"><stop offset="0" stop-color="#9e7600"/><stop offset="1" stop-color="#9e7e00"/></linearGradient><linearGradient id="g466" gradientUnits="userSpaceOnUse" x1="590.3" y1="580.1" x2="626.2" y2="590.3"><stop offset="0" stop-color="#513c00"/><stop offset="1" stop-color="#514100"/></linearGradient><linearGradient id="g467" gradientUnits="userSpaceOnUse" x1="461.5" y1="175.9" x2="498.5" y2="177.5"><stop offset="0" stop-color="#d92100"/><stop offset="1" stop-color="#d92b00"/></linearGradient><linearGradient id="g468" gradientUnits="userSpaceOnUse" x1="347.6" y1="412.1" x2="371.9" y2="440.0"><stop offset="0" stop-color="#941700"/><stop offset="1" stop-color="#941d00"/></linearGradient><linearGradient id="g469" gradientUnits="userSpaceOnUse" x1="360.5" y1="231.8" x2="381.2" y2="229.1"><stop offset="0" stop-color="#e11200"/><stop offset="1" stop-color="#e11500"/></linearGradient><linearGradient id="g470" gradientUnits="userSpaceOnUse" x1="328.4" y1="298.2" x2="339.2" y2="316.1"><stop offset="0" stop-color="#cd1000"/><stop offset="1" stop-color="#cd1400"/></linearGradient><linearGradient id="g471" gradientUnits="userSpaceOnUse" x1="815.6" y1="535.7" x2="832.1" y2="541.0"><stop offset="0" stop-color="#537c00"/><stop offset="1" stop-color="#397100"/></linearGradient><linearGradient id="g472" gradientUnits="userSpaceOnUse" x1="849.6" y1="465.2" x2="863.9" y2="474.7"><stop offset="0" stop-color="#619200"/><stop offset="1" stop-color="#438500"/></linearGradient><linearGradient id="g473" gradientUnits="userSpaceOnUse" x1="832.3" y1="388.6" x2="852.2" y2="406.4"><stop offset="0" stop-color="#7c9600"/><stop offset="1" stop-color="#6d9200"/></linearGradient><linearGradient id="g474" gradientUnits="userSpaceOnUse" x1="744.9" y1="569.9" x2="771.2" y2="574.3"><stop offset="0" stop-color="#536400"/><stop offset="1" stop-color="#496200"/></linearGradient><linearGradient id="g475" gradientUnits="userSpaceOnUse" x1="711.4" y1="240.9" x2="744.1" y2="261.3"><stop offset="0" stop-color="#a77100"/><stop offset="1" stop-color="#a77d00"/></linearGradient><linearGradient id="g476" gradientUnits="userSpaceOnUse" x1="554.1" y1="567.2" x2="590.3" y2="580.1"><stop offset="0" stop-color="#5a3c00"/><stop offset="1" stop-color="#5a4300"/></linearGradient><linearGradient id="g477" gradientUnits="userSpaceOnUse" x1="783.0" y1="552.8" x2="804.1" y2="557.6"><stop offset="0" stop-color="#567200"/><stop offset="1" stop-color="#496e00"/></linearGradient><linearGradient id="g478" gradientUnits="userSpaceOnUse" x1="842.7" y1="429.1" x2="859.6" y2="442.5"><stop offset="0" stop-color="#709600"/><stop offset="1" stop-color="#608f00"/></linearGradient><linearGradient id="g479" gradientUnits="userSpaceOnUse" x1="498.5" y1="177.5" x2="535.1" y2="181.4"><stop offset="0" stop-color="#d62a00"/><stop offset="1" stop-color="#d63600"/></linearGradient><linearGradient id="g480" gradientUnits="userSpaceOnUse" x1="371.9" y1="440.0" x2="397.7" y2="466.2"><stop offset="0" stop-color="#8f1c00"/><stop offset="1" stop-color="#8f2400"/></linearGradient><linearGradient id="g481" gradientUnits="userSpaceOnUse" x1="354.7" y1="244.8" x2="373.6" y2="246.2"><stop offset="0" stop-color="#e31200"/><stop offset="1" stop-color="#e31600"/></linearGradient><linearGradient id="g482" gradientUnits="userSpaceOnUse" x1="335.0" y1="285.5" x2="347.9" y2="299.5"><stop offset="0" stop-color="#d61100"/><stop offset="1" stop-color="#d61400"/></linearGradient><linearGradient id="g483" gradientUnits="userSpaceOnUse" x1="793.9" y1="325.5" x2="818.6" y2="345.9"><stop offset="0" stop-color="#9c8400"/><stop offset="1" stop-color="#979400"/></linearGradient><linearGradient id="g484" gradientUnits="userSpaceOnUse" x1="671.6" y1="579.1" x2="703.0" y2="585.7"><stop offset="0" stop-color="#5d4e00"/><stop offset="1" stop-color="#595800"/></linearGradient><linearGradient id="g485" gradientUnits="userSpaceOnUse" x1="827.2" y1="512.5" x2="843.0" y2="519.2"><stop offset="0" stop-color="#5b8800"/><stop offset="1" stop-color="#3e7c00"/></linearGradient><linearGradient id="g486" gradientUnits="userSpaceOnUse" x1="838.6" y1="488.7" x2="853.7" y2="496.9"><stop offset="0" stop-color="#5f8f00"/><stop offset="1" stop-color="#418300"/></linearGradient><linearGradient id="g487" gradientUnits="userSpaceOnUse" x1="348.4" y1="258.4" x2="365.3" y2="264.0"><stop offset="0" stop-color="#e11200"/><stop offset="1" stop-color="#e11500"/></linearGradient><linearGradient id="g488" gradientUnits="userSpaceOnUse" x1="341.8" y1="272.1" x2="356.7" y2="281.9"><stop offset="0" stop-color="#dd1100"/><stop offset="1" stop-color="#dd1500"/></linearGradient><linearGradient id="g489" gradientUnits="userSpaceOnUse" x1="677.7" y1="223.5" x2="711.4" y2="240.9"><stop offset="0" stop-color="#b36500"/><stop offset="1" stop-color="#b37800"/></linearGradient><linearGradient id="g490" gradientUnits="userSpaceOnUse" x1="519.4" y1="551.6" x2="554.1" y2="567.2"><stop offset="0" stop-color="#653900"/><stop offset="1" stop-color="#654400"/></linearGradient><linearGradient id="g491" gradientUnits="userSpaceOnUse" x1="535.1" y1="181.4" x2="571.0" y2="187.4"><stop offset="0" stop-color="#d33500"/><stop offset="1" stop-color="#d34100"/></linearGradient><linearGradient id="g492" gradientUnits="userSpaceOnUse" x1="397.7" y1="466.2" x2="424.8" y2="490.6"><stop offset="0" stop-color="#892200"/><stop offset="1" stop-color="#892a00"/></linearGradient><linearGradient id="g493" gradientUnits="userSpaceOnUse" x1="421.6" y1="193.2" x2="455.4" y2="192.9"><stop offset="0" stop-color="#ea1c00"/><stop offset="1" stop-color="#ea2400"/></linearGradient><linearGradient id="g494" gradientUnits="userSpaceOnUse" x1="336.3" y1="370.1" x2="357.1" y2="396.7"><stop offset="0" stop-color="#b31500"/><stop offset="1" stop-color="#b31b00"/></linearGradient><linearGradient id="g495" gradientUnits="userSpaceOnUse" x1="331.0" y1="331.2" x2="345.6" y2="354.0"><stop offset="0" stop-color="#c81300"/><stop offset="1" stop-color="#c81800"/></linearGradient><linearGradient id="g496" gradientUnits="userSpaceOnUse" x1="387.9" y1="213.2" x2="414.8" y2="210.5"><stop offset="0" stop-color="#ec1600"/><stop offset="1" stop-color="#ec1c00"/></linearGradient><linearGradient id="g497" gradientUnits="userSpaceOnUse" x1="643.0" y1="209.0" x2="677.7" y2="223.5"><stop offset="0" stop-color="#bd5600"/><stop offset="1" stop-color="#bd6a00"/></linearGradient><linearGradient id="g498" gradientUnits="userSpaceOnUse" x1="486.5" y1="533.5" x2="519.4" y2="551.6"><stop offset="0" stop-color="#6f3300"/><stop offset="1" stop-color="#6f3e00"/></linearGradient><linearGradient id="g499" gradientUnits="userSpaceOnUse" x1="571.0" y1="187.4" x2="607.2" y2="196.8"><stop offset="0" stop-color="#cc3f00"/><stop offset="1" stop-color="#cc4b00"/></linearGradient><linearGradient id="g500" gradientUnits="userSpaceOnUse" x1="424.8" y1="490.6" x2="454.6" y2="513.1"><stop offset="0" stop-color="#802700"/><stop offset="1" stop-color="#802f00"/></linearGradient><linearGradient id="g501" gradientUnits="userSpaceOnUse" x1="607.2" y1="196.8" x2="643.0" y2="209.0"><stop offset="0" stop-color="#c54800"/><stop offset="1" stop-color="#c55a00"/></linearGradient><linearGradient id="g502" gradientUnits="userSpaceOnUse" x1="454.6" y1="513.1" x2="486.5" y2="533.5"><stop offset="0" stop-color="#772c00"/><stop offset="1" stop-color="#773600"/></linearGradient><linearGradient id="g503" gradientUnits="userSpaceOnUse" x1="795.3" y1="529.2" x2="815.6" y2="535.7"><stop offset="0" stop-color="#618200"/><stop offset="1" stop-color="#537d00"/></linearGradient><linearGradient id="g504" gradientUnits="userSpaceOnUse" x1="831.9" y1="453.4" x2="849.6" y2="465.2"><stop offset="0" stop-color="#729800"/><stop offset="1" stop-color="#619200"/></linearGradient><linearGradient id="g505" gradientUnits="userSpaceOnUse" x1="809.4" y1="369.4" x2="832.3" y2="388.6"><stop offset="0" stop-color="#979500"/><stop offset="1" stop-color="#849e00"/></linearGradient><linearGradient id="g506" gradientUnits="userSpaceOnUse" x1="715.6" y1="563.9" x2="744.9" y2="569.9"><stop offset="0" stop-color="#676500"/><stop offset="1" stop-color="#5a6c00"/></linearGradient><linearGradient id="g507" gradientUnits="userSpaceOnUse" x1="766.5" y1="305.1" x2="793.9" y2="325.5"><stop offset="0" stop-color="#a88600"/><stop offset="1" stop-color="#a68c00"/></linearGradient><linearGradient id="g508" gradientUnits="userSpaceOnUse" x1="638.5" y1="570.3" x2="671.6" y2="579.1"><stop offset="0" stop-color="#665200"/><stop offset="1" stop-color="#655500"/></linearGradient><linearGradient id="g509" gradientUnits="userSpaceOnUse" x1="822.0" y1="413.0" x2="842.7" y2="429.1"><stop offset="0" stop-color="#839d00"/><stop offset="1" stop-color="#729900"/></linearGradient><linearGradient id="g510" gradientUnits="userSpaceOnUse" x1="757.6" y1="546.6" x2="783.0" y2="552.8"><stop offset="0" stop-color="#647900"/><stop offset="1" stop-color="#587500"/></linearGradient><linearGradient id="g511" gradientUnits="userSpaceOnUse" x1="807.8" y1="504.2" x2="827.2" y2="512.5"><stop offset="0" stop-color="#6a8e00"/><stop offset="1" stop-color="#5b8800"/></linearGradient><linearGradient id="g512" gradientUnits="userSpaceOnUse" x1="820.1" y1="478.7" x2="838.6" y2="488.7"><stop offset="0" stop-color="#709500"/><stop offset="1" stop-color="#5f8f00"/></linearGradient><linearGradient id="g513" gradientUnits="userSpaceOnUse" x1="455.4" y1="192.9" x2="491.8" y2="196.4"><stop offset="0" stop-color="#e92400"/><stop offset="1" stop-color="#e92e00"/></linearGradient><linearGradient id="g514" gradientUnits="userSpaceOnUse" x1="357.1" y1="396.7" x2="382.5" y2="423.0"><stop offset="0" stop-color="#ad1b00"/><stop offset="1" stop-color="#ad2200"/></linearGradient><linearGradient id="g515" gradientUnits="userSpaceOnUse" x1="381.2" y1="229.1" x2="406.6" y2="229.8"><stop offset="0" stop-color="#f21700"/><stop offset="1" stop-color="#f21d00"/></linearGradient><linearGradient id="g516" gradientUnits="userSpaceOnUse" x1="339.2" y1="316.1" x2="355.6" y2="335.5"><stop offset="0" stop-color="#d71400"/><stop offset="1" stop-color="#d71a00"/></linearGradient><linearGradient id="g517" gradientUnits="userSpaceOnUse" x1="735.8" y1="284.2" x2="766.5" y2="305.1"><stop offset="0" stop-color="#af8300"/><stop offset="1" stop-color="#af8c00"/></linearGradient><linearGradient id="g518" gradientUnits="userSpaceOnUse" x1="603.1" y1="559.4" x2="638.5" y2="570.3"><stop offset="0" stop-color="#6d5200"/><stop offset="1" stop-color="#6d5700"/></linearGradient><linearGradient id="g519" gradientUnits="userSpaceOnUse" x1="414.8" y1="210.5" x2="447.5" y2="212.8"><stop offset="0" stop-color="#f51d00"/><stop offset="1" stop-color="#f52600"/></linearGradient><linearGradient id="g520" gradientUnits="userSpaceOnUse" x1="345.6" y1="354.0" x2="367.8" y2="378.2"><stop offset="0" stop-color="#c81800"/><stop offset="1" stop-color="#c81f00"/></linearGradient><linearGradient id="g521" gradientUnits="userSpaceOnUse" x1="810.4" y1="439.3" x2="831.9" y2="453.4"><stop offset="0" stop-color="#859f00"/><stop offset="1" stop-color="#749b00"/></linearGradient><linearGradient id="g522" gradientUnits="userSpaceOnUse" x1="770.9" y1="521.1" x2="795.3" y2="529.2"><stop offset="0" stop-color="#728900"/><stop offset="1" stop-color="#648600"/></linearGradient><linearGradient id="g523" gradientUnits="userSpaceOnUse" x1="784.1" y1="350.3" x2="809.4" y2="369.4"><stop offset="0" stop-color="#a98e00"/><stop offset="1" stop-color="#a3a000"/></linearGradient><linearGradient id="g524" gradientUnits="userSpaceOnUse" x1="684.9" y1="556.0" x2="715.6" y2="563.9"><stop offset="0" stop-color="#756300"/><stop offset="1" stop-color="#716f00"/></linearGradient><linearGradient id="g525" gradientUnits="userSpaceOnUse" x1="373.6" y1="246.2" x2="397.4" y2="250.6"><stop offset="0" stop-color="#f31700"/><stop offset="1" stop-color="#f31d00"/></linearGradient><linearGradient id="g526" gradientUnits="userSpaceOnUse" x1="347.9" y1="299.5" x2="366.2" y2="315.4"><stop offset="0" stop-color="#e31600"/><stop offset="1" stop-color="#e31b00"/></linearGradient><linearGradient id="g527" gradientUnits="userSpaceOnUse" x1="491.8" y1="196.4" x2="527.7" y2="201.8"><stop offset="0" stop-color="#e72d00"/><stop offset="1" stop-color="#e73a00"/></linearGradient><linearGradient id="g528" gradientUnits="userSpaceOnUse" x1="382.5" y1="423.0" x2="409.1" y2="447.7"><stop offset="0" stop-color="#a92100"/><stop offset="1" stop-color="#a92a00"/></linearGradient><linearGradient id="g529" gradientUnits="userSpaceOnUse" x1="798.3" y1="395.6" x2="822.0" y2="413.0"><stop offset="0" stop-color="#9e9c00"/><stop offset="1" stop-color="#8aa600"/></linearGradient><linearGradient id="g530" gradientUnits="userSpaceOnUse" x1="729.2" y1="538.9" x2="757.6" y2="546.6"><stop offset="0" stop-color="#7b7900"/><stop offset="1" stop-color="#6b8100"/></linearGradient><linearGradient id="g531" gradientUnits="userSpaceOnUse" x1="365.3" y1="264.0" x2="387.4" y2="272.2"><stop offset="0" stop-color="#f21700"/><stop offset="1" stop-color="#f21d00"/></linearGradient><linearGradient id="g532" gradientUnits="userSpaceOnUse" x1="356.7" y1="281.9" x2="376.8" y2="294.0"><stop offset="0" stop-color="#ec1600"/><stop offset="1" stop-color="#ec1c00"/></linearGradient><linearGradient id="g533" gradientUnits="userSpaceOnUse" x1="797.7" y1="466.6" x2="820.1" y2="478.7"><stop offset="0" stop-color="#829d00"/><stop offset="1" stop-color="#729900"/></linearGradient><linearGradient id="g534" gradientUnits="userSpaceOnUse" x1="784.4" y1="494.2" x2="807.8" y2="504.2"><stop offset="0" stop-color="#7c9500"/><stop offset="1" stop-color="#6d9100"/></linearGradient><linearGradient id="g535" gradientUnits="userSpaceOnUse" x1="703.0" y1="264.4" x2="735.8" y2="284.2"><stop offset="0" stop-color="#ba7d00"/><stop offset="1" stop-color="#ba8b00"/></linearGradient><linearGradient id="g536" gradientUnits="userSpaceOnUse" x1="567.2" y1="546.0" x2="603.1" y2="559.4"><stop offset="0" stop-color="#765000"/><stop offset="1" stop-color="#765800"/></linearGradient><linearGradient id="g537" gradientUnits="userSpaceOnUse" x1="527.7" y1="201.8" x2="563.1" y2="209.2"><stop offset="0" stop-color="#e43900"/><stop offset="1" stop-color="#e44600"/></linearGradient><linearGradient id="g538" gradientUnits="userSpaceOnUse" x1="409.1" y1="447.7" x2="436.9" y2="470.9"><stop offset="0" stop-color="#a42900"/><stop offset="1" stop-color="#a43200"/></linearGradient><linearGradient id="g539" gradientUnits="userSpaceOnUse" x1="669.2" y1="247.1" x2="703.0" y2="264.4"><stop offset="0" stop-color="#c56f00"/><stop offset="1" stop-color="#c58500"/></linearGradient><linearGradient id="g540" gradientUnits="userSpaceOnUse" x1="532.6" y1="530.3" x2="567.2" y2="546.0"><stop offset="0" stop-color="#824900"/><stop offset="1" stop-color="#825700"/></linearGradient><linearGradient id="g541" gradientUnits="userSpaceOnUse" x1="756.2" y1="331.0" x2="784.1" y2="350.3"><stop offset="0" stop-color="#b49000"/><stop offset="1" stop-color="#b29700"/></linearGradient><linearGradient id="g542" gradientUnits="userSpaceOnUse" x1="652.5" y1="546.2" x2="684.9" y2="556.0"><stop offset="0" stop-color="#7f6600"/><stop offset="1" stop-color="#7e6a00"/></linearGradient><linearGradient id="g543" gradientUnits="userSpaceOnUse" x1="406.6" y1="229.8" x2="438.1" y2="235.1"><stop offset="0" stop-color="#fb1e00"/><stop offset="1" stop-color="#fb2700"/></linearGradient><linearGradient id="g544" gradientUnits="userSpaceOnUse" x1="355.6" y1="335.5" x2="379.4" y2="356.9"><stop offset="0" stop-color="#db1a00"/><stop offset="1" stop-color="#db2200"/></linearGradient><linearGradient id="g545" gradientUnits="userSpaceOnUse" x1="447.5" y1="212.8" x2="483.0" y2="218.5"><stop offset="0" stop-color="#f52600"/><stop offset="1" stop-color="#f53000"/></linearGradient><linearGradient id="g546" gradientUnits="userSpaceOnUse" x1="367.8" y1="378.2" x2="394.3" y2="402.3"><stop offset="0" stop-color="#c41e00"/><stop offset="1" stop-color="#c42700"/></linearGradient><linearGradient id="g547" gradientUnits="userSpaceOnUse" x1="563.1" y1="209.2" x2="599.0" y2="219.5"><stop offset="0" stop-color="#de4400"/><stop offset="1" stop-color="#de5100"/></linearGradient><linearGradient id="g548" gradientUnits="userSpaceOnUse" x1="436.9" y1="470.9" x2="467.3" y2="492.6"><stop offset="0" stop-color="#9c3000"/><stop offset="1" stop-color="#9c3900"/></linearGradient><linearGradient id="g549" gradientUnits="userSpaceOnUse" x1="634.6" y1="232.3" x2="669.2" y2="247.1"><stop offset="0" stop-color="#cf5f00"/><stop offset="1" stop-color="#cf7400"/></linearGradient><linearGradient id="g550" gradientUnits="userSpaceOnUse" x1="499.5" y1="512.4" x2="532.6" y2="530.3"><stop offset="0" stop-color="#8c4000"/><stop offset="1" stop-color="#8c4f00"/></linearGradient><linearGradient id="g551" gradientUnits="userSpaceOnUse" x1="599.0" y1="219.5" x2="634.6" y2="232.3"><stop offset="0" stop-color="#d74e00"/><stop offset="1" stop-color="#d76200"/></linearGradient><linearGradient id="g552" gradientUnits="userSpaceOnUse" x1="467.3" y1="492.6" x2="499.5" y2="512.4"><stop offset="0" stop-color="#943600"/><stop offset="1" stop-color="#944300"/></linearGradient><linearGradient id="g553" gradientUnits="userSpaceOnUse" x1="785.8" y1="423.8" x2="810.4" y2="439.3"><stop offset="0" stop-color="#a19e00"/><stop offset="1" stop-color="#8ca800"/></linearGradient><linearGradient id="g554" gradientUnits="userSpaceOnUse" x1="743.5" y1="511.5" x2="770.9" y2="521.1"><stop offset="0" stop-color="#8b8900"/><stop offset="1" stop-color="#799200"/></linearGradient><linearGradient id="g555" gradientUnits="userSpaceOnUse" x1="772.4" y1="378.0" x2="798.3" y2="395.6"><stop offset="0" stop-color="#b09500"/><stop offset="1" stop-color="#aaa700"/></linearGradient><linearGradient id="g556" gradientUnits="userSpaceOnUse" x1="699.3" y1="529.6" x2="729.2" y2="538.9"><stop offset="0" stop-color="#8a7500"/><stop offset="1" stop-color="#858300"/></linearGradient><linearGradient id="g557" gradientUnits="userSpaceOnUse" x1="772.2" y1="453.1" x2="797.7" y2="466.6"><stop offset="0" stop-color="#9e9c00"/><stop offset="1" stop-color="#8aa600"/></linearGradient><linearGradient id="g558" gradientUnits="userSpaceOnUse" x1="757.9" y1="482.7" x2="784.4" y2="494.2"><stop offset="0" stop-color="#979400"/><stop offset="1" stop-color="#839e00"/></linearGradient><linearGradient id="g559" gradientUnits="userSpaceOnUse" x1="397.4" y1="250.6" x2="427.5" y2="259.1"><stop offset="0" stop-color="#fe1e00"/><stop offset="1" stop-color="#fe2700"/></linearGradient><linearGradient id="g560" gradientUnits="userSpaceOnUse" x1="366.2" y1="315.4" x2="391.5" y2="333.7"><stop offset="0" stop-color="#e91c00"/><stop offset="1" stop-color="#e92400"/></linearGradient><linearGradient id="g561" gradientUnits="userSpaceOnUse" x1="725.2" y1="311.1" x2="756.2" y2="331.0"><stop offset="0" stop-color="#bc8d00"/><stop offset="1" stop-color="#bc9600"/></linearGradient><linearGradient id="g562" gradientUnits="userSpaceOnUse" x1="617.6" y1="534.3" x2="652.5" y2="546.2"><stop offset="0" stop-color="#876500"/><stop offset="1" stop-color="#876c00"/></linearGradient><linearGradient id="g563" gradientUnits="userSpaceOnUse" x1="483.0" y1="218.5" x2="518.2" y2="225.9"><stop offset="0" stop-color="#f33000"/><stop offset="1" stop-color="#f33d00"/></linearGradient><linearGradient id="g564" gradientUnits="userSpaceOnUse" x1="394.3" y1="402.3" x2="422.0" y2="425.3"><stop offset="0" stop-color="#c12600"/><stop offset="1" stop-color="#c13000"/></linearGradient><linearGradient id="g565" gradientUnits="userSpaceOnUse" x1="387.4" y1="272.2" x2="415.9" y2="284.0"><stop offset="0" stop-color="#fb1e00"/><stop offset="1" stop-color="#fb2700"/></linearGradient><linearGradient id="g566" gradientUnits="userSpaceOnUse" x1="376.8" y1="294.0" x2="403.8" y2="309.1"><stop offset="0" stop-color="#f41d00"/><stop offset="1" stop-color="#f42600"/></linearGradient><linearGradient id="g567" gradientUnits="userSpaceOnUse" x1="438.1" y1="235.1" x2="472.5" y2="243.3"><stop offset="0" stop-color="#fc2700"/><stop offset="1" stop-color="#fc3200"/></linearGradient><linearGradient id="g568" gradientUnits="userSpaceOnUse" x1="379.4" y1="356.9" x2="407.2" y2="378.7"><stop offset="0" stop-color="#d82100"/><stop offset="1" stop-color="#d82b00"/></linearGradient><linearGradient id="g569" gradientUnits="userSpaceOnUse" x1="759.2" y1="407.8" x2="785.8" y2="423.8"><stop offset="0" stop-color="#b39700"/><stop offset="1" stop-color="#acaa00"/></linearGradient><linearGradient id="g570" gradientUnits="userSpaceOnUse" x1="714.4" y1="500.6" x2="743.5" y2="511.5"><stop offset="0" stop-color="#9b8300"/><stop offset="1" stop-color="#969400"/></linearGradient><linearGradient id="g571" gradientUnits="userSpaceOnUse" x1="744.0" y1="360.0" x2="772.4" y2="378.0"><stop offset="0" stop-color="#bc9600"/><stop offset="1" stop-color="#ba9d00"/></linearGradient><linearGradient id="g572" gradientUnits="userSpaceOnUse" x1="667.5" y1="518.5" x2="699.3" y2="529.6"><stop offset="0" stop-color="#957700"/><stop offset="1" stop-color="#937c00"/></linearGradient><linearGradient id="g573" gradientUnits="userSpaceOnUse" x1="692.1" y1="291.9" x2="725.2" y2="311.1"><stop offset="0" stop-color="#c78600"/><stop offset="1" stop-color="#c79500"/></linearGradient><linearGradient id="g574" gradientUnits="userSpaceOnUse" x1="581.9" y1="520.3" x2="617.6" y2="534.3"><stop offset="0" stop-color="#906100"/><stop offset="1" stop-color="#906c00"/></linearGradient><linearGradient id="g575" gradientUnits="userSpaceOnUse" x1="518.2" y1="225.9" x2="553.0" y2="234.8"><stop offset="0" stop-color="#f13c00"/><stop offset="1" stop-color="#f14a00"/></linearGradient><linearGradient id="g576" gradientUnits="userSpaceOnUse" x1="422.0" y1="425.3" x2="450.6" y2="447.0"><stop offset="0" stop-color="#bd2f00"/><stop offset="1" stop-color="#bd3a00"/></linearGradient><linearGradient id="g577" gradientUnits="userSpaceOnUse" x1="729.7" y1="470.1" x2="757.9" y2="482.7"><stop offset="0" stop-color="#a88e00"/><stop offset="1" stop-color="#a2a000"/></linearGradient><linearGradient id="g578" gradientUnits="userSpaceOnUse" x1="744.8" y1="438.8" x2="772.2" y2="453.1"><stop offset="0" stop-color="#b09500"/><stop offset="1" stop-color="#aaa700"/></linearGradient><linearGradient id="g579" gradientUnits="userSpaceOnUse" x1="658.2" y1="274.7" x2="692.1" y2="291.9"><stop offset="0" stop-color="#d37600"/><stop offset="1" stop-color="#d38e00"/></linearGradient><linearGradient id="g580" gradientUnits="userSpaceOnUse" x1="547.4" y1="504.5" x2="581.9" y2="520.3"><stop offset="0" stop-color="#9c5700"/><stop offset="1" stop-color="#9c6900"/></linearGradient><linearGradient id="g581" gradientUnits="userSpaceOnUse" x1="553.0" y1="234.8" x2="588.5" y2="246.2"><stop offset="0" stop-color="#eb4800"/><stop offset="1" stop-color="#eb5600"/></linearGradient><linearGradient id="g582" gradientUnits="userSpaceOnUse" x1="450.6" y1="447.0" x2="481.6" y2="467.7"><stop offset="0" stop-color="#b63800"/><stop offset="1" stop-color="#b64200"/></linearGradient><linearGradient id="g583" gradientUnits="userSpaceOnUse" x1="427.5" y1="259.1" x2="460.7" y2="270.0"><stop offset="0" stop-color="#fe2700"/><stop offset="1" stop-color="#fe3200"/></linearGradient><linearGradient id="g584" gradientUnits="userSpaceOnUse" x1="391.5" y1="333.7" x2="420.7" y2="352.9"><stop offset="0" stop-color="#e82400"/><stop offset="1" stop-color="#e82e00"/></linearGradient><linearGradient id="g585" gradientUnits="userSpaceOnUse" x1="472.5" y1="243.3" x2="506.9" y2="252.8"><stop offset="0" stop-color="#fb3100"/><stop offset="1" stop-color="#fb3f00"/></linearGradient><linearGradient id="g586" gradientUnits="userSpaceOnUse" x1="407.2" y1="378.7" x2="436.0" y2="399.7"><stop offset="0" stop-color="#d62a00"/><stop offset="1" stop-color="#d63600"/></linearGradient><linearGradient id="g587" gradientUnits="userSpaceOnUse" x1="623.8" y1="259.7" x2="658.2" y2="274.7"><stop offset="0" stop-color="#dd6500"/><stop offset="1" stop-color="#dd7c00"/></linearGradient><linearGradient id="g588" gradientUnits="userSpaceOnUse" x1="514.2" y1="486.9" x2="547.4" y2="504.5"><stop offset="0" stop-color="#a64c00"/><stop offset="1" stop-color="#a65d00"/></linearGradient><linearGradient id="g589" gradientUnits="userSpaceOnUse" x1="588.5" y1="246.2" x2="623.8" y2="259.7"><stop offset="0" stop-color="#e45300"/><stop offset="1" stop-color="#e46800"/></linearGradient><linearGradient id="g590" gradientUnits="userSpaceOnUse" x1="481.6" y1="467.7" x2="514.2" y2="486.9"><stop offset="0" stop-color="#ae3f00"/><stop offset="1" stop-color="#ae4f00"/></linearGradient><linearGradient id="g591" gradientUnits="userSpaceOnUse" x1="712.5" y1="341.2" x2="744.0" y2="360.0"><stop offset="0" stop-color="#c49300"/><stop offset="1" stop-color="#c49d00"/></linearGradient><linearGradient id="g592" gradientUnits="userSpaceOnUse" x1="633.2" y1="505.6" x2="667.5" y2="518.5"><stop offset="0" stop-color="#9d7500"/><stop offset="1" stop-color="#9d7d00"/></linearGradient><linearGradient id="g593" gradientUnits="userSpaceOnUse" x1="730.2" y1="391.2" x2="759.2" y2="407.8"><stop offset="0" stop-color="#bf9800"/><stop offset="1" stop-color="#bd9f00"/></linearGradient><linearGradient id="g594" gradientUnits="userSpaceOnUse" x1="683.3" y1="488.3" x2="714.4" y2="500.6"><stop offset="0" stop-color="#a78500"/><stop offset="1" stop-color="#a58b00"/></linearGradient><linearGradient id="g595" gradientUnits="userSpaceOnUse" x1="415.9" y1="284.0" x2="447.9" y2="297.7"><stop offset="0" stop-color="#fc2700"/><stop offset="1" stop-color="#fc3100"/></linearGradient><linearGradient id="g596" gradientUnits="userSpaceOnUse" x1="403.8" y1="309.1" x2="434.4" y2="325.6"><stop offset="0" stop-color="#f42600"/><stop offset="1" stop-color="#f43000"/></linearGradient><linearGradient id="g597" gradientUnits="userSpaceOnUse" x1="715.1" y1="423.6" x2="744.8" y2="438.8"><stop offset="0" stop-color="#bc9600"/><stop offset="1" stop-color="#ba9d00"/></linearGradient><linearGradient id="g598" gradientUnits="userSpaceOnUse" x1="699.4" y1="456.3" x2="729.7" y2="470.1"><stop offset="0" stop-color="#b49000"/><stop offset="1" stop-color="#b29600"/></linearGradient><linearGradient id="g599" gradientUnits="userSpaceOnUse" x1="506.9" y1="252.8" x2="541.0" y2="263.4"><stop offset="0" stop-color="#f83e00"/><stop offset="1" stop-color="#f84c00"/></linearGradient><linearGradient id="g600" gradientUnits="userSpaceOnUse" x1="436.0" y1="399.7" x2="465.5" y2="419.8"><stop offset="0" stop-color="#d23500"/><stop offset="1" stop-color="#d24000"/></linearGradient><linearGradient id="g601" gradientUnits="userSpaceOnUse" x1="679.1" y1="322.7" x2="712.5" y2="341.2"><stop offset="0" stop-color="#cf8b00"/><stop offset="1" stop-color="#cf9b00"/></linearGradient><linearGradient id="g602" gradientUnits="userSpaceOnUse" x1="597.9" y1="491.0" x2="633.2" y2="505.6"><stop offset="0" stop-color="#a77000"/><stop offset="1" stop-color="#a77d00"/></linearGradient><linearGradient id="g603" gradientUnits="userSpaceOnUse" x1="460.7" y1="270.0" x2="494.0" y2="281.7"><stop offset="0" stop-color="#fd3200"/><stop offset="1" stop-color="#fd4000"/></linearGradient><linearGradient id="g604" gradientUnits="userSpaceOnUse" x1="420.7" y1="352.9" x2="450.6" y2="371.7"><stop offset="0" stop-color="#e62d00"/><stop offset="1" stop-color="#e63a00"/></linearGradient><linearGradient id="g605" gradientUnits="userSpaceOnUse" x1="698.2" y1="373.5" x2="730.2" y2="391.2"><stop offset="0" stop-color="#c79500"/><stop offset="1" stop-color="#c79f00"/></linearGradient><linearGradient id="g606" gradientUnits="userSpaceOnUse" x1="649.6" y1="474.2" x2="683.3" y2="488.3"><stop offset="0" stop-color="#af8300"/><stop offset="1" stop-color="#af8c00"/></linearGradient><linearGradient id="g607" gradientUnits="userSpaceOnUse" x1="541.0" y1="263.4" x2="575.9" y2="276.0"><stop offset="0" stop-color="#f34a00"/><stop offset="1" stop-color="#f35900"/></linearGradient><linearGradient id="g608" gradientUnits="userSpaceOnUse" x1="465.5" y1="419.8" x2="497.2" y2="439.2"><stop offset="0" stop-color="#cc3e00"/><stop offset="1" stop-color="#cc4a00"/></linearGradient><linearGradient id="g609" gradientUnits="userSpaceOnUse" x1="447.9" y1="297.7" x2="480.1" y2="311.7"><stop offset="0" stop-color="#fa3100"/><stop offset="1" stop-color="#fa3f00"/></linearGradient><linearGradient id="g610" gradientUnits="userSpaceOnUse" x1="434.4" y1="325.6" x2="465.5" y2="342.0"><stop offset="0" stop-color="#f33000"/><stop offset="1" stop-color="#f33d00"/></linearGradient><linearGradient id="g611" gradientUnits="userSpaceOnUse" x1="645.2" y1="305.7" x2="679.1" y2="322.7"><stop offset="0" stop-color="#db7b00"/><stop offset="1" stop-color="#db9300"/></linearGradient><linearGradient id="g612" gradientUnits="userSpaceOnUse" x1="563.5" y1="475.0" x2="597.9" y2="491.0"><stop offset="0" stop-color="#b26400"/><stop offset="1" stop-color="#b27800"/></linearGradient><linearGradient id="g613" gradientUnits="userSpaceOnUse" x1="575.9" y1="276.0" x2="610.9" y2="290.3"><stop offset="0" stop-color="#ec5600"/><stop offset="1" stop-color="#ec6c00"/></linearGradient><linearGradient id="g614" gradientUnits="userSpaceOnUse" x1="497.2" y1="439.2" x2="530.1" y2="457.7"><stop offset="0" stop-color="#c44800"/><stop offset="1" stop-color="#c45900"/></linearGradient><linearGradient id="g615" gradientUnits="userSpaceOnUse" x1="530.1" y1="457.7" x2="563.5" y2="475.0"><stop offset="0" stop-color="#bc5600"/><stop offset="1" stop-color="#bc6a00"/></linearGradient><linearGradient id="g616" gradientUnits="userSpaceOnUse" x1="610.9" y1="290.3" x2="645.2" y2="305.7"><stop offset="0" stop-color="#e56800"/><stop offset="1" stop-color="#e58100"/></linearGradient><linearGradient id="g617" gradientUnits="userSpaceOnUse" x1="682.6" y1="407.2" x2="715.1" y2="423.6"><stop offset="0" stop-color="#c49300"/><stop offset="1" stop-color="#c49d00"/></linearGradient><linearGradient id="g618" gradientUnits="userSpaceOnUse" x1="666.2" y1="441.1" x2="699.4" y2="456.3"><stop offset="0" stop-color="#bc8d00"/><stop offset="1" stop-color="#bc9600"/></linearGradient><linearGradient id="g619" gradientUnits="userSpaceOnUse" x1="494.0" y1="281.7" x2="527.3" y2="294.1"><stop offset="0" stop-color="#fb3f00"/><stop offset="1" stop-color="#fb4d00"/></linearGradient><linearGradient id="g620" gradientUnits="userSpaceOnUse" x1="450.6" y1="371.7" x2="481.1" y2="389.9"><stop offset="0" stop-color="#e33900"/><stop offset="1" stop-color="#e34600"/></linearGradient><linearGradient id="g621" gradientUnits="userSpaceOnUse" x1="664.4" y1="355.8" x2="698.2" y2="373.5"><stop offset="0" stop-color="#d18d00"/><stop offset="1" stop-color="#d19d00"/></linearGradient><linearGradient id="g622" gradientUnits="userSpaceOnUse" x1="614.7" y1="458.9" x2="649.6" y2="474.2"><stop offset="0" stop-color="#b97c00"/><stop offset="1" stop-color="#b98a00"/></linearGradient><linearGradient id="g623" gradientUnits="userSpaceOnUse" x1="480.1" y1="311.7" x2="512.5" y2="326.1"><stop offset="0" stop-color="#f83e00"/><stop offset="1" stop-color="#f84c00"/></linearGradient><linearGradient id="g624" gradientUnits="userSpaceOnUse" x1="465.5" y1="342.0" x2="496.9" y2="358.4"><stop offset="0" stop-color="#f03c00"/><stop offset="1" stop-color="#f04900"/></linearGradient><linearGradient id="g625" gradientUnits="userSpaceOnUse" x1="527.3" y1="294.1" x2="561.6" y2="308.1"><stop offset="0" stop-color="#f54b00"/><stop offset="1" stop-color="#f55a00"/></linearGradient><linearGradient id="g626" gradientUnits="userSpaceOnUse" x1="481.1" y1="389.9" x2="513.4" y2="408.1"><stop offset="0" stop-color="#dd4400"/><stop offset="1" stop-color="#dd5100"/></linearGradient><linearGradient id="g627" gradientUnits="userSpaceOnUse" x1="630.4" y1="339.0" x2="664.4" y2="355.8"><stop offset="0" stop-color="#dd7c00"/><stop offset="1" stop-color="#dd9500"/></linearGradient><linearGradient id="g628" gradientUnits="userSpaceOnUse" x1="580.4" y1="442.7" x2="614.7" y2="458.9"><stop offset="0" stop-color="#c56e00"/><stop offset="1" stop-color="#c58400"/></linearGradient><linearGradient id="g629" gradientUnits="userSpaceOnUse" x1="648.5" y1="390.2" x2="682.6" y2="407.2"><stop offset="0" stop-color="#cf8b00"/><stop offset="1" stop-color="#cf9a00"/></linearGradient><linearGradient id="g630" gradientUnits="userSpaceOnUse" x1="631.7" y1="424.9" x2="666.2" y2="441.1"><stop offset="0" stop-color="#c68500"/><stop offset="1" stop-color="#c69400"/></linearGradient><linearGradient id="g631" gradientUnits="userSpaceOnUse" x1="561.6" y1="308.1" x2="596.2" y2="323.2"><stop offset="0" stop-color="#ef5700"/><stop offset="1" stop-color="#ef6d00"/></linearGradient><linearGradient id="g632" gradientUnits="userSpaceOnUse" x1="513.4" y1="408.1" x2="546.8" y2="425.8"><stop offset="0" stop-color="#d64e00"/><stop offset="1" stop-color="#d66200"/></linearGradient><linearGradient id="g633" gradientUnits="userSpaceOnUse" x1="596.2" y1="323.2" x2="630.4" y2="339.0"><stop offset="0" stop-color="#e86a00"/><stop offset="1" stop-color="#e88200"/></linearGradient><linearGradient id="g634" gradientUnits="userSpaceOnUse" x1="546.8" y1="425.8" x2="580.4" y2="442.7"><stop offset="0" stop-color="#cf5e00"/><stop offset="1" stop-color="#cf7400"/></linearGradient><linearGradient id="g635" gradientUnits="userSpaceOnUse" x1="512.5" y1="326.1" x2="546.2" y2="341.5"><stop offset="0" stop-color="#f34a00"/><stop offset="1" stop-color="#f35900"/></linearGradient><linearGradient id="g636" gradientUnits="userSpaceOnUse" x1="496.9" y1="358.4" x2="529.9" y2="375.2"><stop offset="0" stop-color="#eb4800"/><stop offset="1" stop-color="#eb5600"/></linearGradient><linearGradient id="g637" gradientUnits="userSpaceOnUse" x1="597.5" y1="408.6" x2="631.7" y2="424.9"><stop offset="0" stop-color="#d27600"/><stop offset="1" stop-color="#d28d00"/></linearGradient><linearGradient id="g638" gradientUnits="userSpaceOnUse" x1="614.3" y1="373.6" x2="648.5" y2="390.2"><stop offset="0" stop-color="#da7b00"/><stop offset="1" stop-color="#da9300"/></linearGradient><linearGradient id="g639" gradientUnits="userSpaceOnUse" x1="546.2" y1="341.5" x2="580.4" y2="357.5"><stop offset="0" stop-color="#ec5600"/><stop offset="1" stop-color="#ec6c00"/></linearGradient><linearGradient id="g640" gradientUnits="userSpaceOnUse" x1="529.9" y1="375.2" x2="563.7" y2="392.0"><stop offset="0" stop-color="#e45300"/><stop offset="1" stop-color="#e46800"/></linearGradient><linearGradient id="g641" gradientUnits="userSpaceOnUse" x1="580.4" y1="357.5" x2="614.3" y2="373.6"><stop offset="0" stop-color="#e56800"/><stop offset="1" stop-color="#e58000"/></linearGradient><linearGradient id="g642" gradientUnits="userSpaceOnUse" x1="563.7" y1="392.0" x2="597.5" y2="408.6"><stop offset="0" stop-color="#dc6400"/><stop offset="1" stop-color="#dc7c00"/></linearGradient></defs>
<polygon points="950.2,507.0 949.9,509.2 948.8,517.2 949.1,515.4" fill="url(#g0)" stroke="#001407" stroke-width="0.7"/>
<polygon points="852.5,618.8 850.6,619.5 862.0,615.7 863.9,615.0" fill="#011502" stroke="#011502" stroke-width="0.7"/>
<polygon points="937.0,437.1 937.7,439.2 941.9,450.3 941.3,448.4" fill="#011502" stroke="#011502" stroke-width="0.7"/>
<polygon points="907.3,590.8 905.6,592.6 911.9,587.0 913.3,585.5" fill="#001405" stroke="#001405" stroke-width="0.7"/>
<polygon points="840.1,622.3 837.9,623.0 850.6,619.5 852.5,618.8" fill="url(#g4)" stroke="#011601" stroke-width="0.7"/>
<polygon points="950.7,498.3 950.3,500.9 949.9,509.2 950.2,507.0" fill="#001405" stroke="#001405" stroke-width="0.7"/>
<polygon points="920.3,577.7 918.7,579.9 923.4,574.0 924.7,572.3" fill="url(#g6)" stroke="#00140d" stroke-width="0.7"/>
<polygon points="931.8,425.3 932.5,427.6 937.7,439.2 937.0,437.1" fill="url(#g7)" stroke="#011601" stroke-width="0.7"/>
<polygon points="926.2,569.9 924.7,572.3 928.4,566.6 929.5,564.9" fill="url(#g8)" stroke="#001312" stroke-width="0.7"/>
<polygon points="948.8,517.2 948.0,520.0 946.5,527.0 947.1,524.9" fill="url(#g9)" stroke="#00140c" stroke-width="0.7"/>
<polygon points="946.5,527.0 945.5,529.9 943.6,535.8 944.3,533.7" fill="url(#g10)" stroke="#001312" stroke-width="0.7"/>
<polygon points="826.5,625.2 824.2,626.0 837.9,623.0 840.1,622.3" fill="url(#g11)" stroke="#021800" stroke-width="0.7"/>
<polygon points="900.7,595.7 898.7,597.7 905.6,592.6 907.3,590.8" fill="#001505" stroke="#001505" stroke-width="0.7"/>
<polygon points="925.4,413.0 926.3,415.5 932.5,427.6 931.8,425.3" fill="url(#g13)" stroke="#021800" stroke-width="0.7"/>
<polygon points="950.4,489.4 950.0,492.4 950.3,500.9 950.7,498.3" fill="#001504" stroke="#001504" stroke-width="0.7"/>
<polygon points="811.9,627.4 809.4,628.3 824.2,626.0 826.5,625.2" fill="url(#g15)" stroke="#041a00" stroke-width="0.7"/>
<polygon points="917.9,400.5 918.8,403.1 926.3,415.5 925.4,413.0" fill="url(#g16)" stroke="#041b00" stroke-width="0.7"/>
<polygon points="915.2,582.9 913.3,585.5 918.7,579.9 920.3,577.7" fill="url(#g17)" stroke="#001407" stroke-width="0.7"/>
<polygon points="928.0,566.9 926.2,569.9 929.5,564.9 930.8,562.7" fill="url(#g18)" stroke="#001312" stroke-width="0.7"/>
<polygon points="893.5,600.1 891.3,602.4 898.7,597.7 900.7,595.7" fill="#001504" stroke="#001504" stroke-width="0.7"/>
<polygon points="945.5,529.9 944.2,533.3 942.6,538.3 943.6,535.8" fill="url(#g20)" stroke="#001312" stroke-width="0.7"/>
<polygon points="949.9,509.2 949.0,512.6 948.0,520.0 948.8,517.2" fill="url(#g21)" stroke="#001407" stroke-width="0.7"/>
<polygon points="949.4,480.4 949.0,483.7 950.0,492.4 950.4,489.4" fill="#001504" stroke="#001504" stroke-width="0.7"/>
<polygon points="922.2,574.7 920.3,577.7 924.7,572.3 926.2,569.9" fill="url(#g23)" stroke="#00140d" stroke-width="0.7"/>
<polygon points="796.2,628.9 793.5,629.8 809.4,628.3 811.9,627.4" fill="url(#g24)" stroke="#081e00" stroke-width="0.7"/>
<polygon points="909.2,387.7 910.2,390.4 918.8,403.1 917.9,400.5" fill="url(#g25)" stroke="#091f00" stroke-width="0.7"/>
<polygon points="948.0,520.0 946.8,523.6 945.5,529.9 946.5,527.0" fill="url(#g26)" stroke="#00140c" stroke-width="0.7"/>
<polygon points="885.6,604.2 883.2,606.7 891.3,602.4 893.5,600.1" fill="#001503" stroke="#001503" stroke-width="0.7"/>
<polygon points="930.0,563.4 928.0,566.9 930.8,562.7 932.3,560.1" fill="url(#g28)" stroke="#001312" stroke-width="0.7"/>
<polygon points="944.2,533.3 942.6,537.2 941.5,541.1 942.6,538.3" fill="url(#g29)" stroke="#001312" stroke-width="0.7"/>
<polygon points="778.6,629.9 775.7,630.9 793.5,629.8 796.2,628.9" fill="url(#g30)" stroke="#0e2200" stroke-width="0.7"/>
<polygon points="947.7,471.0 947.2,474.7 949.0,483.7 949.4,480.4" fill="#001503" stroke="#001503" stroke-width="0.7"/>
<polygon points="909.5,587.7 907.3,590.8 913.3,585.5 915.2,582.9" fill="#001405" stroke="#001405" stroke-width="0.7"/>
<polygon points="899.1,373.8 900.1,376.7 910.2,390.4 909.2,387.7" fill="url(#g33)" stroke="#112700" stroke-width="0.7"/>
<polygon points="950.3,500.9 949.3,504.9 949.0,512.6 949.9,509.2" fill="#001405" stroke="#001405" stroke-width="0.7"/>
<polygon points="932.1,559.4 930.0,563.4 932.3,560.1 933.8,557.2" fill="url(#g35)" stroke="#001312" stroke-width="0.7"/>
<polygon points="876.8,608.1 874.1,610.9 883.2,606.7 885.6,604.2" fill="#001503" stroke="#001503" stroke-width="0.7"/>
<polygon points="942.6,537.2 940.7,541.5 940.1,544.2 941.5,541.1" fill="url(#g37)" stroke="#001312" stroke-width="0.7"/>
<polygon points="758.3,630.5 755.2,631.6 775.7,630.9 778.6,629.9" fill="url(#g38)" stroke="#162600" stroke-width="0.7"/>
<polygon points="924.5,570.8 922.2,574.7 926.2,569.9 928.0,566.9" fill="url(#g39)" stroke="#00140c" stroke-width="0.7"/>
<polygon points="887.0,358.1 888.1,361.2 900.1,376.7 899.1,373.8" fill="url(#g40)" stroke="#1b2d00" stroke-width="0.7"/>
<polygon points="917.6,579.2 915.2,582.9 920.3,577.7 922.2,574.7" fill="url(#g41)" stroke="#001407" stroke-width="0.7"/>
<polygon points="945.2,460.9 944.7,465.0 947.2,474.7 947.7,471.0" fill="#001503" stroke="#001503" stroke-width="0.7"/>
<polygon points="946.8,523.6 945.1,528.0 944.2,533.3 945.5,529.9" fill="url(#g43)" stroke="#00140c" stroke-width="0.7"/>
<polygon points="934.3,555.1 932.1,559.4 933.8,557.2 935.4,554.1" fill="url(#g44)" stroke="#001312" stroke-width="0.7"/>
<polygon points="949.0,512.6 947.5,517.0 946.8,523.6 948.0,520.0" fill="url(#g45)" stroke="#001407" stroke-width="0.7"/>
<polygon points="940.7,541.5 938.7,546.0 938.6,547.5 940.1,544.2" fill="url(#g46)" stroke="#001312" stroke-width="0.7"/>
<polygon points="903.3,592.1 900.7,595.7 907.3,590.8 909.5,587.7" fill="#001505" stroke="#001505" stroke-width="0.7"/>
<polygon points="936.5,550.6 934.3,555.1 935.4,554.1 937.0,550.8" fill="url(#g48)" stroke="#001312" stroke-width="0.7"/>
<polygon points="938.7,546.0 936.5,550.6 937.0,550.8 938.6,547.5" fill="url(#g49)" stroke="#001312" stroke-width="0.7"/>
<polygon points="866.8,612.0 863.9,615.0 874.1,610.9 876.8,608.1" fill="#001502" stroke="#001502" stroke-width="0.7"/>
<polygon points="950.0,492.4 948.8,497.0 949.3,504.9 950.3,500.9" fill="#001504" stroke="#001504" stroke-width="0.7"/>
<polygon points="733.7,631.1 730.4,632.3 755.2,631.6 758.3,630.5" fill="url(#g52)" stroke="#1d2800" stroke-width="0.7"/>
<polygon points="872.1,338.4 873.3,341.7 888.1,361.2 887.0,358.1" fill="url(#g53)" stroke="#212f00" stroke-width="0.7"/>
<polygon points="941.9,450.3 941.3,454.8 944.7,465.0 945.2,460.9" fill="#001502" stroke="#001502" stroke-width="0.7"/>
<polygon points="927.0,566.3 924.5,570.8 928.0,566.9 930.0,563.4" fill="url(#g55)" stroke="#00140c" stroke-width="0.7"/>
<polygon points="945.1,528.0 943.1,533.0 942.6,537.2 944.2,533.3" fill="url(#g56)" stroke="#00140c" stroke-width="0.7"/>
<polygon points="896.4,596.1 893.5,600.1 900.7,595.7 903.3,592.1" fill="#001504" stroke="#001504" stroke-width="0.7"/>
<polygon points="912.3,583.4 909.5,587.7 915.2,582.9 917.6,579.2" fill="#001405" stroke="#001405" stroke-width="0.7"/>
<polygon points="855.8,615.5 852.5,618.8 863.9,615.0 866.8,612.0" fill="#011502" stroke="#011502" stroke-width="0.7"/>
<polygon points="920.4,574.5 917.6,579.2 922.2,574.7 924.5,570.8" fill="url(#g60)" stroke="#001407" stroke-width="0.7"/>
<polygon points="853.9,315.1 855.1,318.7 873.3,341.7 872.1,338.4" fill="url(#g61)" stroke="#283300" stroke-width="0.7"/>
<polygon points="704.4,631.2 700.8,632.4 730.4,632.3 733.7,631.1" fill="url(#g62)" stroke="#212a00" stroke-width="0.7"/>
<polygon points="937.7,439.2 937.1,444.1 941.3,454.8 941.9,450.3" fill="#011502" stroke="#011502" stroke-width="0.7"/>
<polygon points="949.3,504.9 947.5,510.1 947.5,517.0 949.0,512.6" fill="#001405" stroke="#001405" stroke-width="0.7"/>
<polygon points="949.0,483.7 947.6,488.9 948.8,497.0 950.0,492.4" fill="#001504" stroke="#001504" stroke-width="0.7"/>
<polygon points="947.5,517.0 945.5,522.4 945.1,528.0 946.8,523.6" fill="url(#g66)" stroke="#001407" stroke-width="0.7"/>
<polygon points="929.7,561.3 927.0,566.3 930.0,563.4 932.1,559.4" fill="url(#g67)" stroke="#00140c" stroke-width="0.7"/>
<polygon points="943.1,533.0 940.7,538.5 940.7,541.5 942.6,537.2" fill="url(#g68)" stroke="#00140c" stroke-width="0.7"/>
<polygon points="843.6,618.6 840.1,622.3 852.5,618.8 855.8,615.5" fill="url(#g69)" stroke="#011601" stroke-width="0.7"/>
<polygon points="932.6,555.8 929.7,561.3 932.1,559.4 934.3,555.1" fill="url(#g70)" stroke="#00140c" stroke-width="0.7"/>
<polygon points="888.8,599.8 885.6,604.2 893.5,600.1 896.4,596.1" fill="#001503" stroke="#001503" stroke-width="0.7"/>
<polygon points="932.5,427.6 931.8,432.9 937.1,444.1 937.7,439.2" fill="url(#g72)" stroke="#011701" stroke-width="0.7"/>
<polygon points="940.7,538.5 938.1,544.2 938.7,546.0 940.7,541.5" fill="url(#g73)" stroke="#00140c" stroke-width="0.7"/>
<polygon points="832.4,290.6 833.8,294.4 855.1,318.7 853.9,315.1" fill="url(#g74)" stroke="#343800" stroke-width="0.7"/>
<polygon points="672.1,629.6 668.3,631.0 700.8,632.4 704.4,631.2" fill="url(#g75)" stroke="#262900" stroke-width="0.7"/>
<polygon points="935.4,550.0 932.6,555.8 934.3,555.1 936.5,550.6" fill="url(#g76)" stroke="#00140c" stroke-width="0.7"/>
<polygon points="947.2,474.7 945.7,480.4 947.6,488.9 949.0,483.7" fill="#001503" stroke="#001503" stroke-width="0.7"/>
<polygon points="938.1,544.2 935.4,550.0 936.5,550.6 938.7,546.0" fill="url(#g78)" stroke="#00140c" stroke-width="0.7"/>
<polygon points="906.5,587.1 903.3,592.1 909.5,587.7 912.3,583.4" fill="#001505" stroke="#001505" stroke-width="0.7"/>
<polygon points="923.5,569.0 920.4,574.5 924.5,570.8 927.0,566.3" fill="url(#g80)" stroke="#001407" stroke-width="0.7"/>
<polygon points="948.8,497.0 946.8,503.0 947.5,510.1 949.3,504.9" fill="#001504" stroke="#001504" stroke-width="0.7"/>
<polygon points="945.5,522.4 943.0,528.5 943.1,533.0 945.1,528.0" fill="url(#g82)" stroke="#001407" stroke-width="0.7"/>
<polygon points="830.3,621.2 826.5,625.2 840.1,622.3 843.6,618.6" fill="url(#g83)" stroke="#021800" stroke-width="0.7"/>
<polygon points="915.6,577.9 912.3,583.4 917.6,579.2 920.4,574.5" fill="#001405" stroke="#001405" stroke-width="0.7"/>
<polygon points="926.3,415.5 925.5,421.1 931.8,432.9 932.5,427.6" fill="url(#g85)" stroke="#021e00" stroke-width="0.7"/>
<polygon points="880.4,603.2 876.8,608.1 885.6,604.2 888.8,599.8" fill="#001503" stroke="#001503" stroke-width="0.7"/>
<polygon points="947.5,510.1 945.1,516.4 945.5,522.4 947.5,517.0" fill="#001405" stroke="#001405" stroke-width="0.7"/>
<polygon points="808.5,267.0 809.9,271.0 833.8,294.4 832.4,290.6" fill="url(#g88)" stroke="#413c00" stroke-width="0.7"/>
<polygon points="638.9,625.5 634.9,626.9 668.3,631.0 672.1,629.6" fill="url(#g89)" stroke="#292600" stroke-width="0.7"/>
<polygon points="944.7,465.0 943.0,471.3 945.7,480.4 947.2,474.7" fill="#001503" stroke="#001503" stroke-width="0.7"/>
<polygon points="926.8,562.8 923.5,569.0 927.0,566.3 929.7,561.3" fill="url(#g91)" stroke="#001407" stroke-width="0.7"/>
<polygon points="816.0,623.1 811.9,627.4 826.5,625.2 830.3,621.2" fill="url(#g92)" stroke="#041a00" stroke-width="0.7"/>
<polygon points="943.0,528.5 940.1,535.1 940.7,538.5 943.1,533.0" fill="url(#g93)" stroke="#001407" stroke-width="0.7"/>
<polygon points="900.0,590.5 896.4,596.1 903.3,592.1 906.5,587.1" fill="#001504" stroke="#001504" stroke-width="0.7"/>
<polygon points="918.8,403.1 918.0,409.1 925.5,421.1 926.3,415.5" fill="url(#g95)" stroke="#062600" stroke-width="0.7"/>
<polygon points="947.6,488.9 945.3,495.6 946.8,503.0 948.8,497.0" fill="#001504" stroke="#001504" stroke-width="0.7"/>
<polygon points="870.8,606.5 866.8,612.0 876.8,608.1 880.4,603.2" fill="#001502" stroke="#001502" stroke-width="0.7"/>
<polygon points="930.2,556.2 926.8,562.8 929.7,561.3 932.6,555.8" fill="url(#g98)" stroke="#001407" stroke-width="0.7"/>
<polygon points="940.1,535.1 936.9,542.1 938.1,544.2 940.7,538.5" fill="url(#g99)" stroke="#001407" stroke-width="0.7"/>
<polygon points="781.8,243.9 783.2,248.1 809.9,271.0 808.5,267.0" fill="url(#g100)" stroke="#4b3e00" stroke-width="0.7"/>
<polygon points="604.4,618.9 600.1,620.4 634.9,626.9 638.9,625.5" fill="url(#g101)" stroke="#2a2300" stroke-width="0.7"/>
<polygon points="919.2,571.4 915.6,577.9 920.4,574.5 923.5,569.0" fill="#001405" stroke="#001405" stroke-width="0.7"/>
<polygon points="910.2,580.8 906.5,587.1 912.3,583.4 915.6,577.9" fill="#001505" stroke="#001505" stroke-width="0.7"/>
<polygon points="941.3,454.8 939.5,461.7 943.0,471.3 944.7,465.0" fill="#001602" stroke="#001602" stroke-width="0.7"/>
<polygon points="800.5,624.3 796.2,628.9 811.9,627.4 816.0,623.1" fill="url(#g105)" stroke="#081e00" stroke-width="0.7"/>
<polygon points="933.6,549.2 930.2,556.2 932.6,555.8 935.4,550.0" fill="url(#g106)" stroke="#001407" stroke-width="0.7"/>
<polygon points="945.1,516.4 942.2,523.6 943.0,528.5 945.5,522.4" fill="#001405" stroke="#001405" stroke-width="0.7"/>
<polygon points="936.9,542.1 933.6,549.2 935.4,550.0 938.1,544.2" fill="url(#g108)" stroke="#001407" stroke-width="0.7"/>
<polygon points="910.2,390.4 909.3,396.8 918.0,409.1 918.8,403.1" fill="url(#g109)" stroke="#0e3100" stroke-width="0.7"/>
<polygon points="946.8,503.0 944.0,510.2 945.1,516.4 947.5,510.1" fill="#001504" stroke="#001504" stroke-width="0.7"/>
<polygon points="892.9,593.5 888.8,599.8 896.4,596.1 900.0,590.5" fill="#001503" stroke="#001503" stroke-width="0.7"/>
<polygon points="860.1,609.5 855.8,615.5 866.8,612.0 870.8,606.5" fill="#011502" stroke="#011502" stroke-width="0.7"/>
<polygon points="945.7,480.4 943.2,487.9 945.3,495.6 947.6,488.9" fill="#001503" stroke="#001503" stroke-width="0.7"/>
<polygon points="751.7,220.7 753.2,225.1 783.2,248.1 781.8,243.9" fill="url(#g114)" stroke="#523f00" stroke-width="0.7"/>
<polygon points="567.7,609.8 563.3,611.3 600.1,620.4 604.4,618.9" fill="url(#g115)" stroke="#2a2100" stroke-width="0.7"/>
<polygon points="783.2,625.0 778.6,629.9 796.2,628.9 800.5,624.3" fill="url(#g116)" stroke="#0e2200" stroke-width="0.7"/>
<polygon points="923.1,564.1 919.2,571.4 923.5,569.0 926.8,562.8" fill="#001405" stroke="#001405" stroke-width="0.7"/>
<polygon points="900.1,376.7 899.2,383.4 909.3,396.8 910.2,390.4" fill="url(#g118)" stroke="#1a3b00" stroke-width="0.7"/>
<polygon points="399.6,166.2 401.9,165.4 431.8,152.4 429.0,153.4" fill="url(#g119)" stroke="#911000" stroke-width="0.7"/>
<polygon points="302.3,371.9 301.5,369.6 309.7,400.6 310.7,403.5" fill="url(#g120)" stroke="#530900" stroke-width="0.7"/>
<polygon points="937.1,444.1 935.1,451.6 939.5,461.7 941.3,454.8" fill="#011b02" stroke="#011b02" stroke-width="0.7"/>
<polygon points="942.2,523.6 938.8,531.4 940.1,535.1 943.0,528.5" fill="#001405" stroke="#001405" stroke-width="0.7"/>
<polygon points="904.2,583.4 900.0,590.5 906.5,587.1 910.2,580.8" fill="#001504" stroke="#001504" stroke-width="0.7"/>
<polygon points="914.4,573.4 910.2,580.8 915.6,577.9 919.2,571.4" fill="#001505" stroke="#001505" stroke-width="0.7"/>
<polygon points="884.8,596.3 880.4,603.2 888.8,599.8 892.9,593.5" fill="#001503" stroke="#001503" stroke-width="0.7"/>
<polygon points="927.1,556.2 923.1,564.1 926.8,562.8 930.2,556.2" fill="#001405" stroke="#001405" stroke-width="0.7"/>
<polygon points="945.3,495.6 942.3,503.8 944.0,510.2 946.8,503.0" fill="#001504" stroke="#001504" stroke-width="0.7"/>
<polygon points="719.2,199.4 720.8,203.8 753.2,225.1 751.7,220.7" fill="url(#g128)" stroke="#5b4100" stroke-width="0.7"/>
<polygon points="530.9,597.6 526.4,599.1 563.3,611.3 567.7,609.8" fill="url(#g129)" stroke="#2a1e00" stroke-width="0.7"/>
<polygon points="944.0,510.2 940.7,518.4 942.2,523.6 945.1,516.4" fill="#001504" stroke="#001504" stroke-width="0.7"/>
<polygon points="938.8,531.4 935.1,539.6 936.9,542.1 940.1,535.1" fill="#001405" stroke="#001405" stroke-width="0.7"/>
<polygon points="305.6,279.1 305.8,277.7 300.9,305.9 300.5,308.7" fill="#770700" stroke="#770700" stroke-width="0.7"/>
<polygon points="330.3,226.9 331.3,225.8 351.3,203.4 349.4,205.4" fill="#920900" stroke="#920900" stroke-width="0.7"/>
<polygon points="763.2,625.3 758.3,630.5 778.6,629.9 783.2,625.0" fill="url(#g134)" stroke="#162600" stroke-width="0.7"/>
<polygon points="848.3,612.1 843.6,618.6 855.8,615.5 860.1,609.5" fill="url(#g135)" stroke="#011601" stroke-width="0.7"/>
<polygon points="888.1,361.2 887.1,368.3 899.2,383.4 900.1,376.7" fill="url(#g136)" stroke="#284400" stroke-width="0.7"/>
<polygon points="374.5,183.7 376.3,183.1 401.9,165.4 399.6,166.2" fill="url(#g137)" stroke="#980d00" stroke-width="0.7"/>
<polygon points="300.2,340.9 299.6,339.1 301.5,369.6 302.3,371.9" fill="url(#g138)" stroke="#690900" stroke-width="0.7"/>
<polygon points="943.0,471.3 940.2,479.6 943.2,487.9 945.7,480.4" fill="#001803" stroke="#001803" stroke-width="0.7"/>
<polygon points="931.2,548.0 927.1,556.2 930.2,556.2 933.6,549.2" fill="#001405" stroke="#001405" stroke-width="0.7"/>
<polygon points="931.8,432.9 929.7,441.0 935.1,451.6 937.1,444.1" fill="url(#g141)" stroke="#022102" stroke-width="0.7"/>
<polygon points="935.1,539.6 931.2,548.0 933.6,549.2 936.9,542.1" fill="#001405" stroke="#001405" stroke-width="0.7"/>
<polygon points="316.0,251.3 316.0,251.3 327.3,231.2 325.5,234.4" fill="#8c0700" stroke="#8c0700" stroke-width="0.7"/>
<polygon points="316.0,251.3 316.0,251.3 308.7,269.2 307.4,272.6" fill="#850700" stroke="#850700" stroke-width="0.7"/>
<polygon points="685.5,181.7 687.1,186.2 720.8,203.8 719.2,199.4" fill="url(#g145)" stroke="#663f00" stroke-width="0.7"/>
<polygon points="496.1,582.2 491.6,583.7 526.4,599.1 530.9,597.6" fill="url(#g146)" stroke="#2a1a00" stroke-width="0.7"/>
<polygon points="316.0,251.3 316.0,251.3 329.0,228.7 327.3,231.2" fill="#8f0700" stroke="#8f0700" stroke-width="0.7"/>
<polygon points="316.0,251.3 316.0,251.3 307.4,272.6 306.4,275.5" fill="#870700" stroke="#870700" stroke-width="0.7"/>
<polygon points="918.8,565.0 914.4,573.4 919.2,571.4 923.1,564.1" fill="#001505" stroke="#001505" stroke-width="0.7"/>
<polygon points="897.5,585.6 892.9,593.5 900.0,590.5 904.2,583.4" fill="#001503" stroke="#001503" stroke-width="0.7"/>
<polygon points="351.3,203.4 352.5,203.0 376.3,183.1 374.5,183.7" fill="url(#g151)" stroke="#9a0b00" stroke-width="0.7"/>
<polygon points="300.9,309.9 300.5,308.7 299.6,339.1 300.2,340.9" fill="url(#g152)" stroke="#720800" stroke-width="0.7"/>
<polygon points="739.1,625.5 733.7,631.1 758.3,630.5 763.2,625.3" fill="url(#g153)" stroke="#1d2800" stroke-width="0.7"/>
<polygon points="873.3,341.7 872.2,349.4 887.1,368.3 888.1,361.2" fill="url(#g154)" stroke="#334800" stroke-width="0.7"/>
<polygon points="875.6,598.9 870.8,606.5 880.4,603.2 884.8,596.3" fill="#001502" stroke="#001502" stroke-width="0.7"/>
<polygon points="835.4,614.2 830.3,621.2 843.6,618.6 848.3,612.1" fill="url(#g156)" stroke="#021800" stroke-width="0.7"/>
<polygon points="940.7,518.4 936.8,527.4 938.8,531.4 942.2,523.6" fill="#001504" stroke="#001504" stroke-width="0.7"/>
<polygon points="943.2,487.9 939.7,497.0 942.3,503.8 945.3,495.6" fill="#001804" stroke="#001804" stroke-width="0.7"/>
<polygon points="908.9,575.0 904.2,583.4 910.2,580.8 914.4,573.4" fill="#001504" stroke="#001504" stroke-width="0.7"/>
<polygon points="925.5,421.1 923.2,429.8 929.7,441.0 931.8,432.9" fill="url(#g160)" stroke="#032a01" stroke-width="0.7"/>
<polygon points="316.0,251.3 316.0,251.3 306.4,275.5 305.8,277.7" fill="#890700" stroke="#890700" stroke-width="0.7"/>
<polygon points="316.0,251.3 316.0,251.3 330.3,226.9 329.0,228.7" fill="#920800" stroke="#920800" stroke-width="0.7"/>
<polygon points="939.5,461.7 936.5,470.8 940.2,479.6 943.0,471.3" fill="#001e03" stroke="#001e03" stroke-width="0.7"/>
<polygon points="650.8,167.6 652.3,172.1 687.1,186.2 685.5,181.7" fill="url(#g164)" stroke="#703900" stroke-width="0.7"/>
<polygon points="463.4,563.8 458.9,565.3 491.6,583.7 496.1,582.2" fill="url(#g165)" stroke="#2a1600" stroke-width="0.7"/>
<polygon points="942.3,503.8 938.5,513.1 940.7,518.4 944.0,510.2" fill="#001504" stroke="#001504" stroke-width="0.7"/>
<polygon points="923.4,556.0 918.8,565.0 923.1,564.1 927.1,556.2" fill="#001505" stroke="#001505" stroke-width="0.7"/>
<polygon points="331.3,225.8 331.9,225.6 352.5,203.0 351.3,203.4" fill="url(#g168)" stroke="#9b0900" stroke-width="0.7"/>
<polygon points="305.8,279.7 305.6,279.1 300.5,308.7 300.9,309.9" fill="#800800" stroke="#800800" stroke-width="0.7"/>
<polygon points="936.8,527.4 932.6,536.9 935.1,539.6 938.8,531.4" fill="#001505" stroke="#001505" stroke-width="0.7"/>
<polygon points="316.0,251.3 316.0,251.3 305.8,277.7 305.6,279.1" fill="#8c0700" stroke="#8c0700" stroke-width="0.7"/>
<polygon points="316.0,251.3 316.0,251.3 331.3,225.8 330.3,226.9" fill="#960800" stroke="#960800" stroke-width="0.7"/>
<polygon points="821.5,615.6 816.0,623.1 830.3,621.2 835.4,614.2" fill="url(#g173)" stroke="#041a00" stroke-width="0.7"/>
<polygon points="928.0,546.5 923.4,556.0 927.1,556.2 931.2,548.0" fill="#001505" stroke="#001505" stroke-width="0.7"/>
<polygon points="932.6,536.9 928.0,546.5 931.2,548.0 935.1,539.6" fill="#001505" stroke="#001505" stroke-width="0.7"/>
<polygon points="614.8,156.4 616.3,160.8 652.3,172.1 650.8,167.6" fill="url(#g176)" stroke="#793200" stroke-width="0.7"/>
<polygon points="432.1,542.6 427.8,544.1 458.9,565.3 463.4,563.8" fill="url(#g177)" stroke="#2a1100" stroke-width="0.7"/>
<polygon points="855.1,318.7 854.0,327.0 872.2,349.4 873.3,341.7" fill="url(#g178)" stroke="#3d4d00" stroke-width="0.7"/>
<polygon points="710.1,625.2 704.4,631.2 733.7,631.1 739.1,625.5" fill="url(#g179)" stroke="#212a00" stroke-width="0.7"/>
<polygon points="889.9,587.5 884.8,596.3 892.9,593.5 897.5,585.6" fill="#001503" stroke="#001503" stroke-width="0.7"/>
<polygon points="865.4,601.2 860.1,609.5 870.8,606.5 875.6,598.9" fill="#011502" stroke="#011502" stroke-width="0.7"/>
<polygon points="918.0,409.1 915.6,418.4 923.2,429.8 925.5,421.1" fill="url(#g182)" stroke="#083400" stroke-width="0.7"/>
<polygon points="316.0,251.3 316.0,251.3 305.6,279.1 305.8,279.7" fill="#8f0700" stroke="#8f0700" stroke-width="0.7"/>
<polygon points="316.0,251.3 316.0,251.3 331.9,225.6 331.3,225.8" fill="#990800" stroke="#990800" stroke-width="0.7"/>
<polygon points="913.9,565.5 908.9,575.0 914.4,573.4 918.8,565.0" fill="#001504" stroke="#001504" stroke-width="0.7"/>
<polygon points="940.2,479.6 936.5,489.6 939.7,497.0 943.2,487.9" fill="#001e04" stroke="#001e04" stroke-width="0.7"/>
<polygon points="935.1,451.6 931.8,461.5 936.5,470.8 939.5,461.7" fill="#012303" stroke="#012303" stroke-width="0.7"/>
<polygon points="578.2,148.8 579.7,152.9 616.3,160.8 614.8,156.4" fill="url(#g188)" stroke="#812b00" stroke-width="0.7"/>
<polygon points="403.2,518.8 399.0,520.3 427.8,544.1 432.1,542.6" fill="url(#g189)" stroke="#2a0e00" stroke-width="0.7"/>
<polygon points="902.7,576.2 897.5,585.6 904.2,583.4 908.9,575.0" fill="#001503" stroke="#001503" stroke-width="0.7"/>
<polygon points="938.5,513.1 934.1,523.2 936.8,527.4 940.7,518.4" fill="#001704" stroke="#001704" stroke-width="0.7"/>
<polygon points="316.0,251.3 316.0,251.3 305.8,279.7 306.5,279.5" fill="#920800" stroke="#920800" stroke-width="0.7"/>
<polygon points="316.0,251.3 316.0,251.3 332.1,226.2 331.9,225.6" fill="#9c0800" stroke="#9c0800" stroke-width="0.7"/>
<polygon points="939.7,497.0 935.6,507.3 938.5,513.1 942.3,503.8" fill="#001c04" stroke="#001c04" stroke-width="0.7"/>
<polygon points="806.4,616.3 800.5,624.3 816.0,623.1 821.5,615.6" fill="url(#g195)" stroke="#081e00" stroke-width="0.7"/>
<polygon points="541.9,145.1 543.2,149.0 579.7,152.9 578.2,148.8" fill="url(#g196)" stroke="#8a2600" stroke-width="0.7"/>
<polygon points="377.4,492.8 373.5,494.1 399.0,520.3 403.2,518.8" fill="url(#g197)" stroke="#310e00" stroke-width="0.7"/>
<polygon points="909.3,396.8 906.7,406.6 915.6,418.4 918.0,409.1" fill="url(#g198)" stroke="#134100" stroke-width="0.7"/>
<polygon points="919.1,555.3 913.9,565.5 918.8,565.0 923.4,556.0" fill="#001504" stroke="#001504" stroke-width="0.7"/>
<polygon points="306.5,279.5 305.8,279.7 300.9,309.9 302.1,309.5" fill="#880800" stroke="#880800" stroke-width="0.7"/>
<polygon points="331.9,225.6 332.1,226.2 352.9,204.2 352.5,203.0" fill="url(#g201)" stroke="#a40a00" stroke-width="0.7"/>
<polygon points="833.8,294.4 832.6,303.3 854.0,327.0 855.1,318.7" fill="url(#g202)" stroke="#4c5200" stroke-width="0.7"/>
<polygon points="678.3,623.1 672.1,629.6 704.4,631.2 710.1,625.2" fill="url(#g203)" stroke="#262900" stroke-width="0.7"/>
<polygon points="854.2,603.0 848.3,612.1 860.1,609.5 865.4,601.2" fill="url(#g204)" stroke="#011601" stroke-width="0.7"/>
<polygon points="934.1,523.2 929.3,533.8 932.6,536.9 936.8,527.4" fill="#001805" stroke="#001805" stroke-width="0.7"/>
<polygon points="316.0,251.3 316.0,251.3 331.9,227.7 332.1,226.2" fill="#9f0800" stroke="#9f0800" stroke-width="0.7"/>
<polygon points="316.0,251.3 316.0,251.3 306.5,279.5 307.4,278.4" fill="#960800" stroke="#960800" stroke-width="0.7"/>
<polygon points="504.8,144.1 506.1,147.7 543.2,149.0 541.9,145.1" fill="url(#g208)" stroke="#902000" stroke-width="0.7"/>
<polygon points="353.3,464.5 349.7,465.7 373.5,494.1 377.4,492.8" fill="url(#g209)" stroke="#390d00" stroke-width="0.7"/>
<polygon points="881.3,589.3 875.6,598.9 884.8,596.3 889.9,587.5" fill="#001502" stroke="#001502" stroke-width="0.7"/>
<polygon points="352.5,203.0 352.9,204.2 376.9,184.9 376.3,183.1" fill="url(#g211)" stroke="#a70c00" stroke-width="0.7"/>
<polygon points="302.1,309.5 300.9,309.9 300.2,340.9 301.9,340.3" fill="url(#g212)" stroke="#7f0900" stroke-width="0.7"/>
<polygon points="929.7,441.0 926.1,451.6 931.8,461.5 935.1,451.6" fill="url(#g213)" stroke="#022a02" stroke-width="0.7"/>
<polygon points="924.3,544.7 919.1,555.3 923.4,556.0 928.0,546.5" fill="#001504" stroke="#001504" stroke-width="0.7"/>
<polygon points="467.2,145.8 468.3,149.1 506.1,147.7 504.8,144.1" fill="url(#g215)" stroke="#951a00" stroke-width="0.7"/>
<polygon points="330.8,434.1 327.6,435.2 349.7,465.7 353.3,464.5" fill="url(#g216)" stroke="#410b00" stroke-width="0.7"/>
<polygon points="929.3,533.8 924.3,544.7 928.0,546.5 932.6,536.9" fill="#001704" stroke="#001704" stroke-width="0.7"/>
<polygon points="936.5,470.8 932.4,481.8 936.5,489.6 940.2,479.6" fill="#012404" stroke="#012404" stroke-width="0.7"/>
<polygon points="376.3,183.1 376.9,184.9 402.7,167.7 401.9,165.4" fill="url(#g219)" stroke="#a70f00" stroke-width="0.7"/>
<polygon points="301.9,340.3 300.2,340.9 302.3,371.9 304.6,371.1" fill="url(#g220)" stroke="#780a00" stroke-width="0.7"/>
<polygon points="316.0,251.3 316.0,251.3 331.3,229.8 331.9,227.7" fill="#a20800" stroke="#a20800" stroke-width="0.7"/>
<polygon points="316.0,251.3 316.0,251.3 307.4,278.4 308.8,276.6" fill="#990800" stroke="#990800" stroke-width="0.7"/>
<polygon points="908.3,565.7 902.7,576.2 908.9,575.0 913.9,565.5" fill="#001503" stroke="#001503" stroke-width="0.7"/>
<polygon points="431.8,152.4 432.8,155.2 468.3,149.1 467.2,145.8" fill="url(#g224)" stroke="#9d1500" stroke-width="0.7"/>
<polygon points="313.5,402.5 310.7,403.5 327.6,435.2 330.8,434.1" fill="url(#g225)" stroke="#500b00" stroke-width="0.7"/>
<polygon points="789.5,616.4 783.2,625.0 800.5,624.3 806.4,616.3" fill="url(#g226)" stroke="#0e2200" stroke-width="0.7"/>
<polygon points="304.6,371.1 302.3,371.9 310.7,403.5 313.5,402.5" fill="url(#g227)" stroke="#670b00" stroke-width="0.7"/>
<polygon points="401.9,165.4 402.7,167.7 432.8,155.2 431.8,152.4" fill="url(#g228)" stroke="#a51200" stroke-width="0.7"/>
<polygon points="895.6,577.2 889.9,587.5 897.5,585.6 902.7,576.2" fill="#001503" stroke="#001503" stroke-width="0.7"/>
<polygon points="899.2,383.4 896.4,393.8 906.7,406.6 909.3,396.8" fill="url(#g230)" stroke="#224e00" stroke-width="0.7"/>
<polygon points="935.6,507.3 930.7,518.6 934.1,523.2 938.5,513.1" fill="#001f05" stroke="#001f05" stroke-width="0.7"/>
<polygon points="936.5,489.6 931.9,501.1 935.6,507.3 939.7,497.0" fill="#002205" stroke="#002205" stroke-width="0.7"/>
<polygon points="316.0,251.3 316.0,251.3 330.4,232.7 331.3,229.8" fill="#a50900" stroke="#a50900" stroke-width="0.7"/>
<polygon points="316.0,251.3 316.0,251.3 308.8,276.6 310.4,274.1" fill="#9c0800" stroke="#9c0800" stroke-width="0.7"/>
<polygon points="809.9,271.0 808.7,280.4 832.6,303.3 833.8,294.4" fill="url(#g235)" stroke="#5c5400" stroke-width="0.7"/>
<polygon points="645.5,618.7 638.9,625.5 672.1,629.6 678.3,623.1" fill="url(#g236)" stroke="#292600" stroke-width="0.7"/>
<polygon points="841.7,604.4 835.4,614.2 848.3,612.1 854.2,603.0" fill="url(#g237)" stroke="#021800" stroke-width="0.7"/>
<polygon points="316.0,251.3 316.0,251.3 329.1,236.2 330.4,232.7" fill="#a70900" stroke="#a70900" stroke-width="0.7"/>
<polygon points="316.0,251.3 316.0,251.3 310.4,274.1 312.3,270.9" fill="#9f0800" stroke="#9f0800" stroke-width="0.7"/>
<polygon points="923.2,429.8 919.4,441.3 926.1,451.6 929.7,441.0" fill="url(#g240)" stroke="#043401" stroke-width="0.7"/>
<polygon points="871.6,590.6 865.4,601.2 875.6,598.9 881.3,589.3" fill="#011502" stroke="#011502" stroke-width="0.7"/>
<polygon points="914.0,554.4 908.3,565.7 913.9,565.5 919.1,555.3" fill="#001804" stroke="#001804" stroke-width="0.7"/>
<polygon points="307.4,278.4 306.5,279.5 302.1,309.5 304.1,307.4" fill="#920900" stroke="#920900" stroke-width="0.7"/>
<polygon points="332.1,226.2 331.9,227.7 352.6,207.0 352.9,204.2" fill="url(#g244)" stroke="#ac0a00" stroke-width="0.7"/>
<polygon points="930.7,518.6 925.4,530.4 929.3,533.8 934.1,523.2" fill="#001f05" stroke="#001f05" stroke-width="0.7"/>
<polygon points="770.0,616.2 763.2,625.3 783.2,625.0 789.5,616.4" fill="url(#g246)" stroke="#162600" stroke-width="0.7"/>
<polygon points="887.1,368.3 884.2,379.3 896.4,393.8 899.2,383.4" fill="url(#g247)" stroke="#345900" stroke-width="0.7"/>
<polygon points="316.0,251.3 316.0,251.3 327.4,240.1 329.1,236.2" fill="#a80900" stroke="#a80900" stroke-width="0.7"/>
<polygon points="316.0,251.3 316.0,251.3 312.3,270.9 314.4,267.1" fill="#a20800" stroke="#a20800" stroke-width="0.7"/>
<polygon points="931.8,461.5 927.3,473.4 932.4,481.8 936.5,470.8" fill="#012a04" stroke="#012a04" stroke-width="0.7"/>
<polygon points="919.8,542.5 914.0,554.4 919.1,555.3 924.3,544.7" fill="#001c04" stroke="#001c04" stroke-width="0.7"/>
<polygon points="316.0,251.3 316.0,251.3 325.5,244.5 327.4,240.1" fill="#a90900" stroke="#a90900" stroke-width="0.7"/>
<polygon points="316.0,251.3 316.0,251.3 314.4,267.1 316.6,263.0" fill="#a50900" stroke="#a50900" stroke-width="0.7"/>
<polygon points="925.4,530.4 919.8,542.5 924.3,544.7 929.3,533.8" fill="#001e05" stroke="#001e05" stroke-width="0.7"/>
<polygon points="901.8,565.6 895.6,577.2 902.7,576.2 908.3,565.7" fill="#001703" stroke="#001703" stroke-width="0.7"/>
<polygon points="887.6,577.9 881.3,589.3 889.9,587.5 895.6,577.2" fill="#001502" stroke="#001502" stroke-width="0.7"/>
<polygon points="316.0,251.3 316.0,251.3 323.5,249.1 325.5,244.5" fill="#a90900" stroke="#a90900" stroke-width="0.7"/>
<polygon points="316.0,251.3 316.0,251.3 316.6,263.0 318.9,258.5" fill="#a70900" stroke="#a70900" stroke-width="0.7"/>
<polygon points="783.2,248.1 781.9,257.9 808.7,280.4 809.9,271.0" fill="url(#g259)" stroke="#675400" stroke-width="0.7"/>
<polygon points="611.2,611.7 604.4,618.9 638.9,625.5 645.5,618.7" fill="url(#g260)" stroke="#2a2300" stroke-width="0.7"/>
<polygon points="316.0,251.3 316.0,251.3 321.2,253.8 323.5,249.1" fill="#a90900" stroke="#a90900" stroke-width="0.7"/>
<polygon points="316.0,251.3 316.0,251.3 318.9,258.5 321.2,253.8" fill="#a80900" stroke="#a80900" stroke-width="0.7"/>
<polygon points="931.9,501.1 926.5,513.5 930.7,518.6 935.6,507.3" fill="#002505" stroke="#002505" stroke-width="0.7"/>
<polygon points="828.3,605.0 821.5,615.6 835.4,614.2 841.7,604.4" fill="url(#g264)" stroke="#041a00" stroke-width="0.7"/>
<polygon points="932.4,481.8 927.3,494.3 931.9,501.1 936.5,489.6" fill="#012805" stroke="#012805" stroke-width="0.7"/>
<polygon points="915.6,418.4 911.5,430.6 919.4,441.3 923.2,429.8" fill="url(#g266)" stroke="#0a4000" stroke-width="0.7"/>
<polygon points="352.9,204.2 352.6,207.0 376.4,189.0 376.9,184.9" fill="url(#g267)" stroke="#b30d00" stroke-width="0.7"/>
<polygon points="304.1,307.4 302.1,309.5 301.9,340.3 304.8,337.3" fill="url(#g268)" stroke="#8c0a00" stroke-width="0.7"/>
<polygon points="860.9,591.6 854.2,603.0 865.4,601.2 871.6,590.6" fill="url(#g269)" stroke="#011601" stroke-width="0.7"/>
<polygon points="746.3,615.7 739.1,625.5 763.2,625.3 770.0,616.2" fill="url(#g270)" stroke="#1d2800" stroke-width="0.7"/>
<polygon points="872.2,349.4 869.0,361.2 884.2,379.3 887.1,368.3" fill="url(#g271)" stroke="#425e00" stroke-width="0.7"/>
<polygon points="331.9,227.7 331.3,229.8 351.4,211.3 352.6,207.0" fill="url(#g272)" stroke="#b40b00" stroke-width="0.7"/>
<polygon points="308.8,276.6 307.4,278.4 304.1,307.4 306.7,303.9" fill="url(#g273)" stroke="#9b0900" stroke-width="0.7"/>
<polygon points="908.1,553.1 901.8,565.6 908.3,565.7 914.0,554.4" fill="#001d04" stroke="#001d04" stroke-width="0.7"/>
<polygon points="926.1,451.6 921.3,464.5 927.3,473.4 931.8,461.5" fill="url(#g275)" stroke="#023102" stroke-width="0.7"/>
<polygon points="926.5,513.5 920.7,526.6 925.4,530.4 930.7,518.6" fill="#002505" stroke="#002505" stroke-width="0.7"/>
<polygon points="753.2,225.1 751.8,235.2 781.9,257.9 783.2,248.1" fill="url(#g277)" stroke="#6e5500" stroke-width="0.7"/>
<polygon points="574.8,602.3 567.7,609.8 604.4,618.9 611.2,611.7" fill="url(#g278)" stroke="#2a2100" stroke-width="0.7"/>
<polygon points="813.7,605.0 806.4,616.3 821.5,615.6 828.3,605.0" fill="url(#g279)" stroke="#081e00" stroke-width="0.7"/>
<polygon points="878.5,578.2 871.6,590.6 881.3,589.3 887.6,577.9" fill="#011902" stroke="#011902" stroke-width="0.7"/>
<polygon points="914.5,539.9 908.1,553.1 914.0,554.4 919.8,542.5" fill="#002205" stroke="#002205" stroke-width="0.7"/>
<polygon points="920.7,526.6 914.5,539.9 919.8,542.5 925.4,530.4" fill="#002405" stroke="#002405" stroke-width="0.7"/>
<polygon points="894.3,565.1 887.6,577.9 895.6,577.2 901.8,565.6" fill="#001c03" stroke="#001c03" stroke-width="0.7"/>
<polygon points="906.7,406.6 902.4,419.5 911.5,430.6 915.6,418.4" fill="url(#g284)" stroke="#174f00" stroke-width="0.7"/>
<polygon points="927.3,473.4 921.8,487.1 927.3,494.3 932.4,481.8" fill="url(#g285)" stroke="#012e04" stroke-width="0.7"/>
<polygon points="927.3,494.3 921.5,508.0 926.5,513.5 931.9,501.1" fill="#012b05" stroke="#012b05" stroke-width="0.7"/>
<polygon points="376.9,184.9 376.4,189.0 402.0,173.1 402.7,167.7" fill="url(#g287)" stroke="#b61000" stroke-width="0.7"/>
<polygon points="304.8,337.3 301.9,340.3 304.6,371.1 308.4,367.2" fill="url(#g288)" stroke="#880c00" stroke-width="0.7"/>
<polygon points="849.0,592.0 841.7,604.4 854.2,603.0 860.9,591.6" fill="url(#g289)" stroke="#021b00" stroke-width="0.7"/>
<polygon points="331.3,229.8 330.4,232.7 349.5,216.9 351.4,211.3" fill="url(#g290)" stroke="#ba0b00" stroke-width="0.7"/>
<polygon points="310.4,274.1 308.8,276.6 306.7,303.9 310.0,298.8" fill="url(#g291)" stroke="#a30a00" stroke-width="0.7"/>
<polygon points="720.8,203.8 719.4,214.3 751.8,235.2 753.2,225.1" fill="url(#g292)" stroke="#775500" stroke-width="0.7"/>
<polygon points="538.2,590.0 530.9,597.6 567.7,609.8 574.8,602.3" fill="url(#g293)" stroke="#2a1e00" stroke-width="0.7"/>
<polygon points="854.0,327.0 850.5,339.7 869.0,361.2 872.2,349.4" fill="url(#g294)" stroke="#4f6400" stroke-width="0.7"/>
<polygon points="718.0,614.5 710.1,625.2 739.1,625.5 746.3,615.7" fill="url(#g295)" stroke="#212a00" stroke-width="0.7"/>
<polygon points="919.4,441.3 914.2,455.1 921.3,464.5 926.1,451.6" fill="url(#g296)" stroke="#053c01" stroke-width="0.7"/>
<polygon points="797.2,604.4 789.5,616.4 806.4,616.3 813.7,605.0" fill="url(#g297)" stroke="#0f2400" stroke-width="0.7"/>
<polygon points="901.3,551.4 894.3,565.1 901.8,565.6 908.1,553.1" fill="#002204" stroke="#002204" stroke-width="0.7"/>
<polygon points="896.4,393.8 891.8,407.5 902.4,419.5 906.7,406.6" fill="url(#g299)" stroke="#295e00" stroke-width="0.7"/>
<polygon points="921.5,508.0 915.1,522.3 920.7,526.6 926.5,513.5" fill="#012b05" stroke="#012b05" stroke-width="0.7"/>
<polygon points="308.4,367.2 304.6,371.1 313.5,402.5 318.1,397.7" fill="url(#g301)" stroke="#7b0d00" stroke-width="0.7"/>
<polygon points="402.7,167.7 402.0,173.1 431.9,161.7 432.8,155.2" fill="url(#g302)" stroke="#b81400" stroke-width="0.7"/>
<polygon points="687.1,186.2 685.6,196.7 719.4,214.3 720.8,203.8" fill="url(#g303)" stroke="#835100" stroke-width="0.7"/>
<polygon points="503.4,574.5 496.1,582.2 530.9,597.6 538.2,590.0" fill="url(#g304)" stroke="#2a1a00" stroke-width="0.7"/>
<polygon points="868.4,578.1 860.9,591.6 871.6,590.6 878.5,578.2" fill="url(#g305)" stroke="#011f02" stroke-width="0.7"/>
<polygon points="352.6,207.0 351.4,211.3 374.6,195.3 376.4,189.0" fill="url(#g306)" stroke="#bd0e00" stroke-width="0.7"/>
<polygon points="306.7,303.9 304.1,307.4 304.8,337.3 308.7,332.0" fill="url(#g307)" stroke="#990b00" stroke-width="0.7"/>
<polygon points="885.8,564.3 878.5,578.2 887.6,577.9 894.3,565.1" fill="#012103" stroke="#012103" stroke-width="0.7"/>
<polygon points="908.2,536.9 901.3,551.4 908.1,553.1 914.5,539.9" fill="#012705" stroke="#012705" stroke-width="0.7"/>
<polygon points="915.1,522.3 908.2,536.9 914.5,539.9 920.7,526.6" fill="#012a05" stroke="#012a05" stroke-width="0.7"/>
<polygon points="921.3,464.5 915.4,479.3 921.8,487.1 927.3,473.4" fill="url(#g311)" stroke="#033703" stroke-width="0.7"/>
<polygon points="330.4,232.7 329.1,236.2 346.9,223.8 349.5,216.9" fill="url(#g312)" stroke="#bf0b00" stroke-width="0.7"/>
<polygon points="312.3,270.9 310.4,274.1 310.0,298.8 313.7,292.5" fill="url(#g313)" stroke="#ac0a00" stroke-width="0.7"/>
<polygon points="921.8,487.1 915.5,501.9 921.5,508.0 927.3,494.3" fill="url(#g314)" stroke="#013104" stroke-width="0.7"/>
<polygon points="836.1,591.7 828.3,605.0 841.7,604.4 849.0,592.0" fill="url(#g315)" stroke="#052300" stroke-width="0.7"/>
<polygon points="432.8,155.2 431.9,161.7 467.3,156.6 468.3,149.1" fill="url(#g316)" stroke="#b41900" stroke-width="0.7"/>
<polygon points="318.1,397.7 313.5,402.5 330.8,434.1 336.1,428.6" fill="url(#g317)" stroke="#690e00" stroke-width="0.7"/>
<polygon points="470.6,556.2 463.4,563.8 496.1,582.2 503.4,574.5" fill="url(#g318)" stroke="#311900" stroke-width="0.7"/>
<polygon points="652.3,172.1 650.9,182.5 685.6,196.7 687.1,186.2" fill="url(#g319)" stroke="#8d4800" stroke-width="0.7"/>
<polygon points="911.5,430.6 905.9,445.4 914.2,455.1 919.4,441.3" fill="url(#g320)" stroke="#0b4900" stroke-width="0.7"/>
<polygon points="832.6,303.3 828.9,317.0 850.5,339.7 854.0,327.0" fill="url(#g321)" stroke="#616900" stroke-width="0.7"/>
<polygon points="686.7,611.7 678.3,623.1 710.1,625.2 718.0,614.5" fill="url(#g322)" stroke="#262900" stroke-width="0.7"/>
<polygon points="778.3,603.3 770.0,616.2 789.5,616.4 797.2,604.4" fill="url(#g323)" stroke="#192a00" stroke-width="0.7"/>
<polygon points="884.2,379.3 879.3,393.8 891.8,407.5 896.4,393.8" fill="url(#g324)" stroke="#3f6b00" stroke-width="0.7"/>
<polygon points="468.3,149.1 467.3,156.6 504.9,156.1 506.1,147.7" fill="url(#g325)" stroke="#ae1f00" stroke-width="0.7"/>
<polygon points="336.1,428.6 330.8,434.1 353.3,464.5 359.1,458.4" fill="url(#g326)" stroke="#5d1000" stroke-width="0.7"/>
<polygon points="616.3,160.8 614.9,170.9 650.9,182.5 652.3,172.1" fill="url(#g327)" stroke="#953d00" stroke-width="0.7"/>
<polygon points="439.2,535.2 432.1,542.6 463.4,563.8 470.6,556.2" fill="url(#g328)" stroke="#3a1800" stroke-width="0.7"/>
<polygon points="506.1,147.7 504.9,156.1 542.0,158.1 543.2,149.0" fill="url(#g329)" stroke="#aa2600" stroke-width="0.7"/>
<polygon points="359.1,458.4 353.3,464.5 377.4,492.8 383.8,486.1" fill="url(#g330)" stroke="#561300" stroke-width="0.7"/>
<polygon points="329.1,236.2 327.4,240.1 343.7,231.7 346.9,223.8" fill="url(#g331)" stroke="#c30c00" stroke-width="0.7"/>
<polygon points="314.4,267.1 312.3,270.9 313.7,292.5 317.9,285.1" fill="url(#g332)" stroke="#b30b00" stroke-width="0.7"/>
<polygon points="579.7,152.9 578.4,162.6 614.9,170.9 616.3,160.8" fill="url(#g333)" stroke="#9d3500" stroke-width="0.7"/>
<polygon points="410.0,511.8 403.2,518.8 432.1,542.6 439.2,535.2" fill="url(#g334)" stroke="#431700" stroke-width="0.7"/>
<polygon points="893.4,549.2 885.8,564.3 894.3,565.1 901.3,551.4" fill="#012804" stroke="#012804" stroke-width="0.7"/>
<polygon points="543.2,149.0 542.0,158.1 578.4,162.6 579.7,152.9" fill="url(#g336)" stroke="#a52e00" stroke-width="0.7"/>
<polygon points="383.8,486.1 377.4,492.8 403.2,518.8 410.0,511.8" fill="url(#g337)" stroke="#4e1600" stroke-width="0.7"/>
<polygon points="915.5,501.9 908.5,517.5 915.1,522.3 921.5,508.0" fill="url(#g338)" stroke="#013204" stroke-width="0.7"/>
<polygon points="857.1,577.4 849.0,592.0 860.9,591.6 868.4,578.1" fill="url(#g339)" stroke="#032701" stroke-width="0.7"/>
<polygon points="914.2,455.1 907.8,470.9 915.4,479.3 921.3,464.5" fill="url(#g340)" stroke="#054201" stroke-width="0.7"/>
<polygon points="822.0,590.8 813.7,605.0 828.3,605.0 836.1,591.7" fill="url(#g341)" stroke="#0c2e00" stroke-width="0.7"/>
<polygon points="876.3,562.9 868.4,578.1 878.5,578.2 885.8,564.3" fill="url(#g342)" stroke="#022802" stroke-width="0.7"/>
<polygon points="901.1,533.5 893.4,549.2 901.3,551.4 908.2,536.9" fill="url(#g343)" stroke="#012d04" stroke-width="0.7"/>
<polygon points="902.4,419.5 896.5,435.2 905.9,445.4 911.5,430.6" fill="url(#g344)" stroke="#1a5a00" stroke-width="0.7"/>
<polygon points="908.5,517.5 901.1,533.5 908.2,536.9 915.1,522.3" fill="url(#g345)" stroke="#013004" stroke-width="0.7"/>
<polygon points="915.4,479.3 908.5,495.3 915.5,501.9 921.8,487.1" fill="url(#g346)" stroke="#033a03" stroke-width="0.7"/>
<polygon points="327.4,240.1 325.5,244.5 339.9,240.3 343.7,231.7" fill="url(#g347)" stroke="#c50c00" stroke-width="0.7"/>
<polygon points="316.6,263.0 314.4,267.1 317.9,285.1 322.3,276.8" fill="url(#g348)" stroke="#ba0b00" stroke-width="0.7"/>
<polygon points="376.4,189.0 374.6,195.3 399.7,181.4 402.0,173.1" fill="url(#g349)" stroke="#c31100" stroke-width="0.7"/>
<polygon points="308.7,332.0 304.8,337.3 308.4,367.2 313.5,360.3" fill="url(#g350)" stroke="#970d00" stroke-width="0.7"/>
<polygon points="351.4,211.3 349.5,216.9 371.8,203.7 374.6,195.3" fill="url(#g351)" stroke="#c70e00" stroke-width="0.7"/>
<polygon points="310.0,298.8 306.7,303.9 308.7,332.0 313.5,324.6" fill="url(#g352)" stroke="#a60c00" stroke-width="0.7"/>
<polygon points="808.7,280.4 804.7,294.9 828.9,317.0 832.6,303.3" fill="url(#g353)" stroke="#746a00" stroke-width="0.7"/>
<polygon points="654.4,606.6 645.5,618.7 678.3,623.1 686.7,611.7" fill="url(#g354)" stroke="#292600" stroke-width="0.7"/>
<polygon points="755.2,601.8 746.3,615.7 770.0,616.2 778.3,603.3" fill="url(#g355)" stroke="#212e00" stroke-width="0.7"/>
<polygon points="869.0,361.2 863.8,376.8 879.3,393.8 884.2,379.3" fill="url(#g356)" stroke="#507100" stroke-width="0.7"/>
<polygon points="325.5,244.5 323.5,249.1 335.8,249.4 339.9,240.3" fill="url(#g357)" stroke="#c60c00" stroke-width="0.7"/>
<polygon points="318.9,258.5 316.6,263.0 322.3,276.8 326.8,267.9" fill="url(#g358)" stroke="#bf0b00" stroke-width="0.7"/>
<polygon points="323.5,249.1 321.2,253.8 331.4,258.7 335.8,249.4" fill="url(#g359)" stroke="#c50c00" stroke-width="0.7"/>
<polygon points="321.2,253.8 318.9,258.5 326.8,267.9 331.4,258.7" fill="url(#g360)" stroke="#c30c00" stroke-width="0.7"/>
<polygon points="884.6,546.6 876.3,562.9 885.8,564.3 893.4,549.2" fill="url(#g361)" stroke="#022f02" stroke-width="0.7"/>
<polygon points="844.8,576.1 836.1,591.7 849.0,592.0 857.1,577.4" fill="url(#g362)" stroke="#073100" stroke-width="0.7"/>
<polygon points="806.2,589.3 797.2,604.4 813.7,605.0 822.0,590.8" fill="url(#g363)" stroke="#183800" stroke-width="0.7"/>
<polygon points="908.5,495.3 900.9,512.3 908.5,517.5 915.5,501.9" fill="url(#g364)" stroke="#033a03" stroke-width="0.7"/>
<polygon points="905.9,445.4 899.1,462.2 907.8,470.9 914.2,455.1" fill="url(#g365)" stroke="#0c5000" stroke-width="0.7"/>
<polygon points="891.8,407.5 885.5,424.1 896.5,435.2 902.4,419.5" fill="url(#g366)" stroke="#2e6b00" stroke-width="0.7"/>
<polygon points="865.7,561.0 857.1,577.4 868.4,578.1 876.3,562.9" fill="url(#g367)" stroke="#043101" stroke-width="0.7"/>
<polygon points="781.9,257.9 777.8,273.0 804.7,294.9 808.7,280.4" fill="url(#g368)" stroke="#806900" stroke-width="0.7"/>
<polygon points="620.5,599.1 611.2,611.7 645.5,618.7 654.4,606.6" fill="url(#g369)" stroke="#2c2400" stroke-width="0.7"/>
<polygon points="907.8,470.9 900.4,488.2 908.5,495.3 915.4,479.3" fill="url(#g370)" stroke="#054501" stroke-width="0.7"/>
<polygon points="892.9,529.5 884.6,546.6 893.4,549.2 901.1,533.5" fill="url(#g371)" stroke="#023503" stroke-width="0.7"/>
<polygon points="900.9,512.3 892.9,529.5 901.1,533.5 908.5,517.5" fill="url(#g372)" stroke="#033903" stroke-width="0.7"/>
<polygon points="402.0,173.1 399.7,181.4 429.2,171.8 431.9,161.7" fill="url(#g373)" stroke="#c91600" stroke-width="0.7"/>
<polygon points="313.5,360.3 308.4,367.2 318.1,397.7 324.3,389.3" fill="url(#g374)" stroke="#900f00" stroke-width="0.7"/>
<polygon points="349.5,216.9 346.9,223.8 368.0,213.8 371.8,203.7" fill="url(#g375)" stroke="#ce0f00" stroke-width="0.7"/>
<polygon points="313.7,292.5 310.0,298.8 313.5,324.6 319.0,315.3" fill="url(#g376)" stroke="#b20d00" stroke-width="0.7"/>
<polygon points="850.5,339.7 844.8,356.5 863.8,376.8 869.0,361.2" fill="url(#g377)" stroke="#5f7800" stroke-width="0.7"/>
<polygon points="727.6,599.6 718.0,614.5 746.3,615.7 755.2,601.8" fill="url(#g378)" stroke="#283200" stroke-width="0.7"/>
<polygon points="831.3,574.1 822.0,590.8 836.1,591.7 844.8,576.1" fill="url(#g379)" stroke="#113e00" stroke-width="0.7"/>
<polygon points="787.9,587.2 778.3,603.3 797.2,604.4 806.2,589.3" fill="url(#g380)" stroke="#264100" stroke-width="0.7"/>
<polygon points="879.3,393.8 872.6,411.4 885.5,424.1 891.8,407.5" fill="url(#g381)" stroke="#477900" stroke-width="0.7"/>
<polygon points="896.5,435.2 889.2,453.1 899.1,462.2 905.9,445.4" fill="url(#g382)" stroke="#1c6200" stroke-width="0.7"/>
<polygon points="874.6,543.4 865.7,561.0 876.3,562.9 884.6,546.6" fill="url(#g383)" stroke="#043a01" stroke-width="0.7"/>
<polygon points="751.8,235.2 747.6,250.9 777.8,273.0 781.9,257.9" fill="url(#g384)" stroke="#886900" stroke-width="0.7"/>
<polygon points="584.4,589.2 574.8,602.3 611.2,611.7 620.5,599.1" fill="url(#g385)" stroke="#332700" stroke-width="0.7"/>
<polygon points="900.4,488.2 892.2,506.4 900.9,512.3 908.5,495.3" fill="url(#g386)" stroke="#054601" stroke-width="0.7"/>
<polygon points="374.6,195.3 371.8,203.7 396.0,192.4 399.7,181.4" fill="url(#g387)" stroke="#ce1200" stroke-width="0.7"/>
<polygon points="313.5,324.6 308.7,332.0 313.5,360.3 319.7,350.5" fill="url(#g388)" stroke="#a70e00" stroke-width="0.7"/>
<polygon points="854.0,558.6 844.8,576.1 857.1,577.4 865.7,561.0" fill="url(#g389)" stroke="#093d00" stroke-width="0.7"/>
<polygon points="431.9,161.7 429.2,171.8 464.1,168.2 467.3,156.6" fill="url(#g390)" stroke="#c91b00" stroke-width="0.7"/>
<polygon points="324.3,389.3 318.1,397.7 336.1,428.6 343.2,418.9" fill="url(#g391)" stroke="#831200" stroke-width="0.7"/>
<polygon points="899.1,462.2 891.2,480.7 900.4,488.2 907.8,470.9" fill="url(#g392)" stroke="#0d5400" stroke-width="0.7"/>
<polygon points="883.5,525.0 874.6,543.4 884.6,546.6 892.9,529.5" fill="url(#g393)" stroke="#054001" stroke-width="0.7"/>
<polygon points="892.2,506.4 883.5,525.0 892.9,529.5 900.9,512.3" fill="url(#g394)" stroke="#054401" stroke-width="0.7"/>
<polygon points="346.9,223.8 343.7,231.7 363.2,225.4 368.0,213.8" fill="url(#g395)" stroke="#d40f00" stroke-width="0.7"/>
<polygon points="317.9,285.1 313.7,292.5 319.0,315.3 325.2,304.3" fill="url(#g396)" stroke="#bd0d00" stroke-width="0.7"/>
<polygon points="828.9,317.0 822.8,335.0 844.8,356.5 850.5,339.7" fill="url(#g397)" stroke="#747d00" stroke-width="0.7"/>
<polygon points="697.0,595.7 686.7,611.7 718.0,614.5 727.6,599.6" fill="url(#g398)" stroke="#333700" stroke-width="0.7"/>
<polygon points="719.4,214.3 715.0,230.3 747.6,250.9 751.8,235.2" fill="url(#g399)" stroke="#916700" stroke-width="0.7"/>
<polygon points="548.0,576.6 538.2,590.0 574.8,602.3 584.4,589.2" fill="url(#g400)" stroke="#3b2a00" stroke-width="0.7"/>
<polygon points="816.1,571.5 806.2,589.3 822.0,590.8 831.3,574.1" fill="url(#g401)" stroke="#204b00" stroke-width="0.7"/>
<polygon points="885.5,424.1 877.8,443.0 889.2,453.1 896.5,435.2" fill="url(#g402)" stroke="#327400" stroke-width="0.7"/>
<polygon points="467.3,156.6 464.1,168.2 501.4,169.0 504.9,156.1" fill="url(#g403)" stroke="#c52300" stroke-width="0.7"/>
<polygon points="343.2,418.9 336.1,428.6 359.1,458.4 367.1,447.6" fill="url(#g404)" stroke="#791500" stroke-width="0.7"/>
<polygon points="765.5,584.5 755.2,601.8 778.3,603.3 787.9,587.2" fill="url(#g405)" stroke="#324700" stroke-width="0.7"/>
<polygon points="863.8,376.8 856.6,395.6 872.6,411.4 879.3,393.8" fill="url(#g406)" stroke="#5b8000" stroke-width="0.7"/>
<polygon points="863.6,539.7 854.0,558.6 865.7,561.0 874.6,543.4" fill="url(#g407)" stroke="#0a4700" stroke-width="0.7"/>
<polygon points="891.2,480.7 882.5,500.1 892.2,506.4 900.4,488.2" fill="url(#g408)" stroke="#0d5500" stroke-width="0.7"/>
<polygon points="841.2,555.5 831.3,574.1 844.8,576.1 854.0,558.6" fill="url(#g409)" stroke="#154c00" stroke-width="0.7"/>
<polygon points="343.7,231.7 339.9,240.3 357.7,238.1 363.2,225.4" fill="url(#g410)" stroke="#d70f00" stroke-width="0.7"/>
<polygon points="322.3,276.8 317.9,285.1 325.2,304.3 331.7,292.1" fill="url(#g411)" stroke="#c60e00" stroke-width="0.7"/>
<polygon points="889.2,453.1 880.8,472.7 891.2,480.7 899.1,462.2" fill="url(#g412)" stroke="#1d6700" stroke-width="0.7"/>
<polygon points="685.6,196.7 681.3,212.8 715.0,230.3 719.4,214.3" fill="url(#g413)" stroke="#9d6100" stroke-width="0.7"/>
<polygon points="513.3,561.0 503.4,574.5 538.2,590.0 548.0,576.6" fill="url(#g414)" stroke="#462b00" stroke-width="0.7"/>
<polygon points="504.9,156.1 501.4,169.0 538.2,172.1 542.0,158.1" fill="url(#g415)" stroke="#c22b00" stroke-width="0.7"/>
<polygon points="367.1,447.6 359.1,458.4 383.8,486.1 392.4,474.4" fill="url(#g416)" stroke="#731a00" stroke-width="0.7"/>
<polygon points="873.2,520.0 863.6,539.7 874.6,543.4 883.5,525.0" fill="url(#g417)" stroke="#0b4e00" stroke-width="0.7"/>
<polygon points="882.5,500.1 873.2,520.0 883.5,525.0 892.2,506.4" fill="url(#g418)" stroke="#0c5300" stroke-width="0.7"/>
<polygon points="399.7,181.4 396.0,192.4 424.7,185.1 429.2,171.8" fill="url(#g419)" stroke="#d81700" stroke-width="0.7"/>
<polygon points="319.7,350.5 313.5,360.3 324.3,389.3 331.9,377.5" fill="url(#g420)" stroke="#a41200" stroke-width="0.7"/>
<polygon points="371.8,203.7 368.0,213.8 391.0,205.6 396.0,192.4" fill="url(#g421)" stroke="#d71300" stroke-width="0.7"/>
<polygon points="319.0,315.3 313.5,324.6 319.7,350.5 327.0,338.4" fill="url(#g422)" stroke="#b51000" stroke-width="0.7"/>
<polygon points="650.9,182.5 646.6,198.4 681.3,212.8 685.6,196.7" fill="url(#g423)" stroke="#a75500" stroke-width="0.7"/>
<polygon points="480.4,542.9 470.6,556.2 503.4,574.5 513.3,561.0" fill="url(#g424)" stroke="#502900" stroke-width="0.7"/>
<polygon points="542.0,158.1 538.2,172.1 574.3,177.6 578.4,162.6" fill="url(#g425)" stroke="#be3500" stroke-width="0.7"/>
<polygon points="392.4,474.4 383.8,486.1 410.0,511.8 419.1,499.3" fill="url(#g426)" stroke="#6c1e00" stroke-width="0.7"/>
<polygon points="339.9,240.3 335.8,249.4 351.6,251.6 357.7,238.1" fill="url(#g427)" stroke="#d80f00" stroke-width="0.7"/>
<polygon points="326.8,267.9 322.3,276.8 331.7,292.1 338.4,279.0" fill="url(#g428)" stroke="#ce0f00" stroke-width="0.7"/>
<polygon points="798.5,568.2 787.9,587.2 806.2,589.3 816.1,571.5" fill="url(#g429)" stroke="#325600" stroke-width="0.7"/>
<polygon points="804.7,294.9 798.3,314.0 822.8,335.0 828.9,317.0" fill="url(#g430)" stroke="#897d00" stroke-width="0.7"/>
<polygon points="665.3,589.7 654.4,606.6 686.7,611.7 697.0,595.7" fill="url(#g431)" stroke="#403b00" stroke-width="0.7"/>
<polygon points="614.9,170.9 610.7,186.5 646.6,198.4 650.9,182.5" fill="url(#g432)" stroke="#af4800" stroke-width="0.7"/>
<polygon points="448.8,522.2 439.2,535.2 470.6,556.2 480.4,542.9" fill="url(#g433)" stroke="#592500" stroke-width="0.7"/>
<polygon points="872.6,411.4 864.4,431.5 877.8,443.0 885.5,424.1" fill="url(#g434)" stroke="#4d8300" stroke-width="0.7"/>
<polygon points="578.4,162.6 574.3,177.6 610.7,186.5 614.9,170.9" fill="url(#g435)" stroke="#b73d00" stroke-width="0.7"/>
<polygon points="419.1,499.3 410.0,511.8 439.2,535.2 448.8,522.2" fill="url(#g436)" stroke="#622100" stroke-width="0.7"/>
<polygon points="335.8,249.4 331.4,258.7 345.1,265.3 351.6,251.6" fill="url(#g437)" stroke="#d70f00" stroke-width="0.7"/>
<polygon points="331.4,258.7 326.8,267.9 338.4,279.0 345.1,265.3" fill="url(#g438)" stroke="#d40f00" stroke-width="0.7"/>
<polygon points="851.4,535.4 841.2,555.5 854.0,558.6 863.6,539.7" fill="url(#g439)" stroke="#185700" stroke-width="0.7"/>
<polygon points="880.8,472.7 871.5,493.3 882.5,500.1 891.2,480.7" fill="url(#g440)" stroke="#1d6800" stroke-width="0.7"/>
<polygon points="826.6,551.7 816.1,571.5 831.3,574.1 841.2,555.5" fill="url(#g441)" stroke="#275b00" stroke-width="0.7"/>
<polygon points="844.8,356.5 837.1,376.9 856.6,395.6 863.8,376.8" fill="url(#g442)" stroke="#6b8800" stroke-width="0.7"/>
<polygon points="738.7,580.9 727.6,599.6 755.2,601.8 765.5,584.5" fill="url(#g443)" stroke="#3c4c00" stroke-width="0.7"/>
<polygon points="877.8,443.0 868.9,463.7 880.8,472.7 889.2,453.1" fill="url(#g444)" stroke="#347900" stroke-width="0.7"/>
<polygon points="861.6,514.4 851.4,535.4 863.6,539.7 873.2,520.0" fill="url(#g445)" stroke="#1b6000" stroke-width="0.7"/>
<polygon points="871.5,493.3 861.6,514.4 873.2,520.0 882.5,500.1" fill="url(#g446)" stroke="#1c6600" stroke-width="0.7"/>
<polygon points="777.8,273.0 771.1,293.0 798.3,314.0 804.7,294.9" fill="url(#g447)" stroke="#957a00" stroke-width="0.7"/>
<polygon points="631.9,581.4 620.5,599.1 654.4,606.6 665.3,589.7" fill="url(#g448)" stroke="#4a3d00" stroke-width="0.7"/>
<polygon points="429.2,171.8 424.7,185.1 458.9,183.6 464.1,168.2" fill="url(#g449)" stroke="#db1e00" stroke-width="0.7"/>
<polygon points="331.9,377.5 324.3,389.3 343.2,418.9 352.0,405.3" fill="url(#g450)" stroke="#9c1500" stroke-width="0.7"/>
<polygon points="368.0,213.8 363.2,225.4 384.8,220.8 391.0,205.6" fill="url(#g451)" stroke="#dd1300" stroke-width="0.7"/>
<polygon points="325.2,304.3 319.0,315.3 327.0,338.4 335.0,324.1" fill="url(#g452)" stroke="#c21100" stroke-width="0.7"/>
<polygon points="776.9,564.1 765.5,584.5 787.9,587.2 798.5,568.2" fill="url(#g453)" stroke="#425d00" stroke-width="0.7"/>
<polygon points="856.6,395.6 847.8,417.2 864.4,431.5 872.6,411.4" fill="url(#g454)" stroke="#638c00" stroke-width="0.7"/>
<polygon points="837.5,530.3 826.6,551.7 841.2,555.5 851.4,535.4" fill="url(#g455)" stroke="#2d6800" stroke-width="0.7"/>
<polygon points="868.9,463.7 859.0,485.7 871.5,493.3 880.8,472.7" fill="url(#g456)" stroke="#357b00" stroke-width="0.7"/>
<polygon points="809.7,547.1 798.5,568.2 816.1,571.5 826.6,551.7" fill="url(#g457)" stroke="#3d6800" stroke-width="0.7"/>
<polygon points="864.4,431.5 854.8,453.5 868.9,463.7 877.8,443.0" fill="url(#g458)" stroke="#518a00" stroke-width="0.7"/>
<polygon points="822.8,335.0 814.5,356.9 837.1,376.9 844.8,356.5" fill="url(#g459)" stroke="#828e00" stroke-width="0.7"/>
<polygon points="709.0,575.7 697.0,595.7 727.6,599.6 738.7,580.9" fill="url(#g460)" stroke="#4b5100" stroke-width="0.7"/>
<polygon points="396.0,192.4 391.0,205.6 418.5,201.3 424.7,185.1" fill="url(#g461)" stroke="#e41800" stroke-width="0.7"/>
<polygon points="327.0,338.4 319.7,350.5 331.9,377.5 340.7,362.7" fill="url(#g462)" stroke="#b71400" stroke-width="0.7"/>
<polygon points="848.4,508.1 837.5,530.3 851.4,535.4 861.6,514.4" fill="url(#g463)" stroke="#317200" stroke-width="0.7"/>
<polygon points="859.0,485.7 848.4,508.1 861.6,514.4 871.5,493.3" fill="url(#g464)" stroke="#347800" stroke-width="0.7"/>
<polygon points="747.6,250.9 740.6,271.6 771.1,293.0 777.8,273.0" fill="url(#g465)" stroke="#9e7a00" stroke-width="0.7"/>
<polygon points="596.3,570.9 584.4,589.2 620.5,599.1 631.9,581.4" fill="url(#g466)" stroke="#513e00" stroke-width="0.7"/>
<polygon points="464.1,168.2 458.9,183.6 495.7,186.1 501.4,169.0" fill="url(#g467)" stroke="#d92600" stroke-width="0.7"/>
<polygon points="352.0,405.3 343.2,418.9 367.1,447.6 376.8,432.5" fill="url(#g468)" stroke="#941a00" stroke-width="0.7"/>
<polygon points="363.2,225.4 357.7,238.1 377.6,237.4 384.8,220.8" fill="url(#g469)" stroke="#e11400" stroke-width="0.7"/>
<polygon points="331.7,292.1 325.2,304.3 335.0,324.1 343.5,308.1" fill="url(#g470)" stroke="#cd1200" stroke-width="0.7"/>
<polygon points="821.4,524.3 809.7,547.1 826.6,551.7 837.5,530.3" fill="url(#g471)" stroke="#467700" stroke-width="0.7"/>
<polygon points="854.8,453.5 844.3,476.8 859.0,485.7 868.9,463.7" fill="url(#g472)" stroke="#528b00" stroke-width="0.7"/>
<polygon points="837.1,376.9 827.6,400.2 847.8,417.2 856.6,395.6" fill="url(#g473)" stroke="#759400" stroke-width="0.7"/>
<polygon points="751.0,558.9 738.7,580.9 765.5,584.5 776.9,564.1" fill="url(#g474)" stroke="#4e6300" stroke-width="0.7"/>
<polygon points="715.0,230.3 707.9,251.5 740.6,271.6 747.6,250.9" fill="url(#g475)" stroke="#a77700" stroke-width="0.7"/>
<polygon points="560.1,557.8 548.0,576.6 584.4,589.2 596.3,570.9" fill="url(#g476)" stroke="#5a4000" stroke-width="0.7"/>
<polygon points="789.1,541.4 776.9,564.1 798.5,568.2 809.7,547.1" fill="url(#g477)" stroke="#4f7000" stroke-width="0.7"/>
<polygon points="847.8,417.2 837.5,440.9 854.8,453.5 864.4,431.5" fill="url(#g478)" stroke="#689300" stroke-width="0.7"/>
<polygon points="501.4,169.0 495.7,186.1 532.0,190.6 538.2,172.1" fill="url(#g479)" stroke="#d63000" stroke-width="0.7"/>
<polygon points="376.8,432.5 367.1,447.6 392.4,474.4 403.0,458.0" fill="url(#g480)" stroke="#8f2000" stroke-width="0.7"/>
<polygon points="357.7,238.1 351.6,251.6 369.6,255.0 377.6,237.4" fill="url(#g481)" stroke="#e31400" stroke-width="0.7"/>
<polygon points="338.4,279.0 331.7,292.1 343.5,308.1 352.3,290.9" fill="url(#g482)" stroke="#d61300" stroke-width="0.7"/>
<polygon points="798.3,314.0 789.5,337.1 814.5,356.9 822.8,335.0" fill="url(#g483)" stroke="#998c00" stroke-width="0.7"/>
<polygon points="677.9,568.4 665.3,589.7 697.0,595.7 709.0,575.7" fill="url(#g484)" stroke="#5b5300" stroke-width="0.7"/>
<polygon points="833.0,500.6 821.4,524.3 837.5,530.3 848.4,508.1" fill="url(#g485)" stroke="#4c8200" stroke-width="0.7"/>
<polygon points="844.3,476.8 833.0,500.6 848.4,508.1 859.0,485.7" fill="url(#g486)" stroke="#508900" stroke-width="0.7"/>
<polygon points="351.6,251.6 345.1,265.3 361.1,273.0 369.6,255.0" fill="url(#g487)" stroke="#e11400" stroke-width="0.7"/>
<polygon points="345.1,265.3 338.4,279.0 352.3,290.9 361.1,273.0" fill="url(#g488)" stroke="#dd1300" stroke-width="0.7"/>
<polygon points="681.3,212.8 674.1,234.2 707.9,251.5 715.0,230.3" fill="url(#g489)" stroke="#b36e00" stroke-width="0.7"/>
<polygon points="525.5,542.1 513.3,561.0 548.0,576.6 560.1,557.8" fill="url(#g490)" stroke="#653e00" stroke-width="0.7"/>
<polygon points="538.2,172.1 532.0,190.6 567.7,197.2 574.3,177.6" fill="url(#g491)" stroke="#d33b00" stroke-width="0.7"/>
<polygon points="403.0,458.0 392.4,474.4 419.1,499.3 430.4,481.8" fill="url(#g492)" stroke="#892600" stroke-width="0.7"/>
<polygon points="424.7,185.1 418.5,201.3 451.9,202.2 458.9,183.6" fill="url(#g493)" stroke="#ea2000" stroke-width="0.7"/>
<polygon points="340.7,362.7 331.9,377.5 352.0,405.3 362.2,388.2" fill="url(#g494)" stroke="#b31800" stroke-width="0.7"/>
<polygon points="335.0,324.1 327.0,338.4 340.7,362.7 350.4,345.3" fill="url(#g495)" stroke="#c81500" stroke-width="0.7"/>
<polygon points="391.0,205.6 384.8,220.8 411.0,219.7 418.5,201.3" fill="url(#g496)" stroke="#ec1900" stroke-width="0.7"/>
<polygon points="646.6,198.4 639.5,219.5 674.1,234.2 681.3,212.8" fill="url(#g497)" stroke="#bd6000" stroke-width="0.7"/>
<polygon points="492.5,524.2 480.4,542.9 513.3,561.0 525.5,542.1" fill="url(#g498)" stroke="#6f3800" stroke-width="0.7"/>
<polygon points="574.3,177.6 567.7,197.2 603.8,207.0 610.7,186.5" fill="url(#g499)" stroke="#cc4500" stroke-width="0.7"/>
<polygon points="430.4,481.8 419.1,499.3 448.8,522.2 460.5,504.0" fill="url(#g500)" stroke="#802b00" stroke-width="0.7"/>
<polygon points="610.7,186.5 603.8,207.0 639.5,219.5 646.6,198.4" fill="url(#g501)" stroke="#c55100" stroke-width="0.7"/>
<polygon points="460.5,504.0 448.8,522.2 480.4,542.9 492.5,524.2" fill="url(#g502)" stroke="#773100" stroke-width="0.7"/>
<polygon points="801.6,516.9 789.1,541.4 809.7,547.1 821.4,524.3" fill="url(#g503)" stroke="#5a8000" stroke-width="0.7"/>
<polygon points="837.5,440.9 826.2,465.9 844.3,476.8 854.8,453.5" fill="url(#g504)" stroke="#699500" stroke-width="0.7"/>
<polygon points="814.5,356.9 804.2,381.9 827.6,400.2 837.1,376.9" fill="url(#g505)" stroke="#8d9a00" stroke-width="0.7"/>
<polygon points="722.2,552.1 709.0,575.7 738.7,580.9 751.0,558.9" fill="url(#g506)" stroke="#606900" stroke-width="0.7"/>
<polygon points="771.1,293.0 761.9,317.2 789.5,337.1 798.3,314.0" fill="url(#g507)" stroke="#a78900" stroke-width="0.7"/>
<polygon points="645.2,559.2 631.9,581.4 665.3,589.7 677.9,568.4" fill="url(#g508)" stroke="#665300" stroke-width="0.7"/>
<polygon points="827.6,400.2 816.5,425.8 837.5,440.9 847.8,417.2" fill="url(#g509)" stroke="#7a9b00" stroke-width="0.7"/>
<polygon points="764.1,534.3 751.0,558.9 776.9,564.1 789.1,541.4" fill="url(#g510)" stroke="#5e7700" stroke-width="0.7"/>
<polygon points="814.1,491.5 801.6,516.9 821.4,524.3 833.0,500.6" fill="url(#g511)" stroke="#638b00" stroke-width="0.7"/>
<polygon points="826.2,465.9 814.1,491.5 833.0,500.6 844.3,476.8" fill="url(#g512)" stroke="#689200" stroke-width="0.7"/>
<polygon points="458.9,183.6 451.9,202.2 487.8,206.7 495.7,186.1" fill="url(#g513)" stroke="#e92900" stroke-width="0.7"/>
<polygon points="362.2,388.2 352.0,405.3 376.8,432.5 388.1,413.5" fill="url(#g514)" stroke="#ad1e00" stroke-width="0.7"/>
<polygon points="384.8,220.8 377.6,237.4 402.2,239.9 411.0,219.7" fill="url(#g515)" stroke="#f21a00" stroke-width="0.7"/>
<polygon points="343.5,308.1 335.0,324.1 350.4,345.3 360.8,325.8" fill="url(#g516)" stroke="#d71700" stroke-width="0.7"/>
<polygon points="740.6,271.6 731.1,296.7 761.9,317.2 771.1,293.0" fill="url(#g517)" stroke="#af8800" stroke-width="0.7"/>
<polygon points="610.0,547.8 596.3,570.9 631.9,581.4 645.2,559.2" fill="url(#g518)" stroke="#6d5400" stroke-width="0.7"/>
<polygon points="418.5,201.3 411.0,219.7 443.2,223.4 451.9,202.2" fill="url(#g519)" stroke="#f52100" stroke-width="0.7"/>
<polygon points="350.4,345.3 340.7,362.7 362.2,388.2 373.4,368.1" fill="url(#g520)" stroke="#c81b00" stroke-width="0.7"/>
<polygon points="816.5,425.8 804.2,452.8 826.2,465.9 837.5,440.9" fill="url(#g521)" stroke="#7c9d00" stroke-width="0.7"/>
<polygon points="777.7,507.9 764.1,534.3 789.1,541.4 801.6,516.9" fill="url(#g522)" stroke="#6b8700" stroke-width="0.7"/>
<polygon points="789.5,337.1 778.7,363.5 804.2,381.9 814.5,356.9" fill="url(#g523)" stroke="#a69700" stroke-width="0.7"/>
<polygon points="691.9,543.5 677.9,568.4 709.0,575.7 722.2,552.1" fill="url(#g524)" stroke="#736900" stroke-width="0.7"/>
<polygon points="377.6,237.4 369.6,255.0 392.5,261.3 402.2,239.9" fill="url(#g525)" stroke="#f31a00" stroke-width="0.7"/>
<polygon points="352.3,290.9 343.5,308.1 360.8,325.8 371.5,304.9" fill="url(#g526)" stroke="#e31800" stroke-width="0.7"/>
<polygon points="495.7,186.1 487.8,206.7 523.5,213.1 532.0,190.6" fill="url(#g527)" stroke="#e73400" stroke-width="0.7"/>
<polygon points="388.1,413.5 376.8,432.5 403.0,458.0 415.2,437.4" fill="url(#g528)" stroke="#a92600" stroke-width="0.7"/>
<polygon points="804.2,381.9 792.4,409.3 816.5,425.8 827.6,400.2" fill="url(#g529)" stroke="#94a100" stroke-width="0.7"/>
<polygon points="736.2,525.7 722.2,552.1 751.0,558.9 764.1,534.3" fill="url(#g530)" stroke="#737d00" stroke-width="0.7"/>
<polygon points="369.6,255.0 361.1,273.0 382.2,283.2 392.5,261.3" fill="url(#g531)" stroke="#f21a00" stroke-width="0.7"/>
<polygon points="361.1,273.0 352.3,290.9 371.5,304.9 382.2,283.2" fill="url(#g532)" stroke="#ec1900" stroke-width="0.7"/>
<polygon points="804.2,452.8 791.2,480.5 814.1,491.5 826.2,465.9" fill="url(#g533)" stroke="#7a9b00" stroke-width="0.7"/>
<polygon points="791.2,480.5 777.7,507.9 801.6,516.9 814.1,491.5" fill="url(#g534)" stroke="#749300" stroke-width="0.7"/>
<polygon points="707.9,251.5 698.1,277.2 731.1,296.7 740.6,271.6" fill="url(#g535)" stroke="#ba8400" stroke-width="0.7"/>
<polygon points="574.2,534.2 560.1,557.8 596.3,570.9 610.0,547.8" fill="url(#g536)" stroke="#765400" stroke-width="0.7"/>
<polygon points="532.0,190.6 523.5,213.1 558.6,221.1 567.7,197.2" fill="url(#g537)" stroke="#e43f00" stroke-width="0.7"/>
<polygon points="415.2,437.4 403.0,458.0 430.4,481.8 443.4,459.9" fill="url(#g538)" stroke="#a42e00" stroke-width="0.7"/>
<polygon points="674.1,234.2 664.3,260.0 698.1,277.2 707.9,251.5" fill="url(#g539)" stroke="#c57a00" stroke-width="0.7"/>
<polygon points="539.6,518.4 525.5,542.1 560.1,557.8 574.2,534.2" fill="url(#g540)" stroke="#825000" stroke-width="0.7"/>
<polygon points="761.9,317.2 750.6,344.8 778.7,363.5 789.5,337.1" fill="url(#g541)" stroke="#b39300" stroke-width="0.7"/>
<polygon points="659.8,533.1 645.2,559.2 677.9,568.4 691.9,543.5" fill="url(#g542)" stroke="#7f6800" stroke-width="0.7"/>
<polygon points="411.0,219.7 402.2,239.9 433.1,246.7 443.2,223.4" fill="url(#g543)" stroke="#fb2200" stroke-width="0.7"/>
<polygon points="360.8,325.8 350.4,345.3 373.4,368.1 385.3,345.7" fill="url(#g544)" stroke="#db1e00" stroke-width="0.7"/>
<polygon points="451.9,202.2 443.2,223.4 478.2,230.4 487.8,206.7" fill="url(#g545)" stroke="#f52b00" stroke-width="0.7"/>
<polygon points="373.4,368.1 362.2,388.2 388.1,413.5 400.6,391.2" fill="url(#g546)" stroke="#c42200" stroke-width="0.7"/>
<polygon points="567.7,197.2 558.6,221.1 594.3,231.9 603.8,207.0" fill="url(#g547)" stroke="#de4a00" stroke-width="0.7"/>
<polygon points="443.4,459.9 430.4,481.8 460.5,504.0 474.1,481.1" fill="url(#g548)" stroke="#9c3400" stroke-width="0.7"/>
<polygon points="639.5,219.5 629.8,245.1 664.3,260.0 674.1,234.2" fill="url(#g549)" stroke="#cf6a00" stroke-width="0.7"/>
<polygon points="506.5,500.7 492.5,524.2 525.5,542.1 539.6,518.4" fill="url(#g550)" stroke="#8c4700" stroke-width="0.7"/>
<polygon points="603.8,207.0 594.3,231.9 629.8,245.1 639.5,219.5" fill="url(#g551)" stroke="#d75800" stroke-width="0.7"/>
<polygon points="474.1,481.1 460.5,504.0 492.5,524.2 506.5,500.7" fill="url(#g552)" stroke="#943d00" stroke-width="0.7"/>
<polygon points="792.4,409.3 779.2,438.3 804.2,452.8 816.5,425.8" fill="url(#g553)" stroke="#96a300" stroke-width="0.7"/>
<polygon points="750.7,497.4 736.2,525.7 764.1,534.3 777.7,507.9" fill="url(#g554)" stroke="#828d00" stroke-width="0.7"/>
<polygon points="778.7,363.5 766.1,392.5 792.4,409.3 804.2,381.9" fill="url(#g555)" stroke="#ad9e00" stroke-width="0.7"/>
<polygon points="706.8,515.6 691.9,543.5 722.2,552.1 736.2,525.7" fill="url(#g556)" stroke="#887c00" stroke-width="0.7"/>
<polygon points="779.2,438.3 765.2,467.9 791.2,480.5 804.2,452.8" fill="url(#g557)" stroke="#94a100" stroke-width="0.7"/>
<polygon points="765.2,467.9 750.7,497.4 777.7,507.9 791.2,480.5" fill="url(#g558)" stroke="#8d9900" stroke-width="0.7"/>
<polygon points="402.2,239.9 392.5,261.3 421.9,271.4 433.1,246.7" fill="url(#g559)" stroke="#fe2300" stroke-width="0.7"/>
<polygon points="371.5,304.9 360.8,325.8 385.3,345.7 397.7,321.6" fill="url(#g560)" stroke="#e92000" stroke-width="0.7"/>
<polygon points="731.1,296.7 719.3,325.4 750.6,344.8 761.9,317.2" fill="url(#g561)" stroke="#bc9200" stroke-width="0.7"/>
<polygon points="625.1,520.8 610.0,547.8 645.2,559.2 659.8,533.1" fill="url(#g562)" stroke="#876800" stroke-width="0.7"/>
<polygon points="487.8,206.7 478.2,230.4 513.0,238.7 523.5,213.1" fill="url(#g563)" stroke="#f33600" stroke-width="0.7"/>
<polygon points="400.6,391.2 388.1,413.5 415.2,437.4 428.8,413.2" fill="url(#g564)" stroke="#c12b00" stroke-width="0.7"/>
<polygon points="392.5,261.3 382.2,283.2 410.0,296.6 421.9,271.4" fill="url(#g565)" stroke="#fb2200" stroke-width="0.7"/>
<polygon points="382.2,283.2 371.5,304.9 397.7,321.6 410.0,296.6" fill="url(#g566)" stroke="#f42100" stroke-width="0.7"/>
<polygon points="443.2,223.4 433.1,246.7 466.9,256.3 478.2,230.4" fill="url(#g567)" stroke="#fc2c00" stroke-width="0.7"/>
<polygon points="385.3,345.7 373.4,368.1 400.6,391.2 413.9,366.3" fill="url(#g568)" stroke="#d82600" stroke-width="0.7"/>
<polygon points="766.1,392.5 752.2,423.2 779.2,438.3 792.4,409.3" fill="url(#g569)" stroke="#afa000" stroke-width="0.7"/>
<polygon points="722.1,485.7 706.8,515.6 736.2,525.7 750.7,497.4" fill="url(#g570)" stroke="#998b00" stroke-width="0.7"/>
<polygon points="750.6,344.8 737.4,375.2 766.1,392.5 778.7,363.5" fill="url(#g571)" stroke="#bb9a00" stroke-width="0.7"/>
<polygon points="675.3,504.0 659.8,533.1 691.9,543.5 706.8,515.6" fill="url(#g572)" stroke="#947a00" stroke-width="0.7"/>
<polygon points="698.1,277.2 686.1,306.6 719.3,325.4 731.1,296.7" fill="url(#g573)" stroke="#c78d00" stroke-width="0.7"/>
<polygon points="589.7,506.5 574.2,534.2 610.0,547.8 625.1,520.8" fill="url(#g574)" stroke="#906600" stroke-width="0.7"/>
<polygon points="523.5,213.1 513.0,238.7 547.4,248.4 558.6,221.1" fill="url(#g575)" stroke="#f14300" stroke-width="0.7"/>
<polygon points="428.8,413.2 415.2,437.4 443.4,459.9 457.8,434.2" fill="url(#g576)" stroke="#bd3500" stroke-width="0.7"/>
<polygon points="737.4,454.5 722.1,485.7 750.7,497.4 765.2,467.9" fill="url(#g577)" stroke="#a59700" stroke-width="0.7"/>
<polygon points="752.2,423.2 737.4,454.5 765.2,467.9 779.2,438.3" fill="url(#g578)" stroke="#ad9e00" stroke-width="0.7"/>
<polygon points="664.3,260.0 652.2,289.5 686.1,306.6 698.1,277.2" fill="url(#g579)" stroke="#d38200" stroke-width="0.7"/>
<polygon points="555.2,490.5 539.6,518.4 574.2,534.2 589.7,506.5" fill="url(#g580)" stroke="#9c6000" stroke-width="0.7"/>
<polygon points="558.6,221.1 547.4,248.4 582.7,260.4 594.3,231.9" fill="url(#g581)" stroke="#eb4f00" stroke-width="0.7"/>
<polygon points="457.8,434.2 443.4,459.9 474.1,481.1 489.2,454.3" fill="url(#g582)" stroke="#b63d00" stroke-width="0.7"/>
<polygon points="433.1,246.7 421.9,271.4 454.5,283.6 466.9,256.3" fill="url(#g583)" stroke="#fe2d00" stroke-width="0.7"/>
<polygon points="397.7,321.6 385.3,345.7 413.9,366.3 427.6,339.5" fill="url(#g584)" stroke="#e82900" stroke-width="0.7"/>
<polygon points="478.2,230.4 466.9,256.3 500.8,266.8 513.0,238.7" fill="url(#g585)" stroke="#fb3800" stroke-width="0.7"/>
<polygon points="413.9,366.3 400.6,391.2 428.8,413.2 443.2,386.2" fill="url(#g586)" stroke="#d63000" stroke-width="0.7"/>
<polygon points="629.8,245.1 617.8,274.3 652.2,289.5 664.3,260.0" fill="url(#g587)" stroke="#dd7000" stroke-width="0.7"/>
<polygon points="521.9,473.1 506.5,500.7 539.6,518.4 555.2,490.5" fill="url(#g588)" stroke="#a65400" stroke-width="0.7"/>
<polygon points="594.3,231.9 582.7,260.4 617.8,274.3 629.8,245.1" fill="url(#g589)" stroke="#e45e00" stroke-width="0.7"/>
<polygon points="489.2,454.3 474.1,481.1 506.5,500.7 521.9,473.1" fill="url(#g590)" stroke="#ae4700" stroke-width="0.7"/>
<polygon points="719.3,325.4 705.7,356.9 737.4,375.2 750.6,344.8" fill="url(#g591)" stroke="#c49800" stroke-width="0.7"/>
<polygon points="641.3,490.5 625.1,520.8 659.8,533.1 675.3,504.0" fill="url(#g592)" stroke="#9d7900" stroke-width="0.7"/>
<polygon points="737.4,375.2 722.9,407.2 752.2,423.2 766.1,392.5" fill="url(#g593)" stroke="#be9c00" stroke-width="0.7"/>
<polygon points="691.3,472.6 675.3,504.0 706.8,515.6 722.1,485.7" fill="url(#g594)" stroke="#a68800" stroke-width="0.7"/>
<polygon points="421.9,271.4 410.0,296.6 441.2,311.7 454.5,283.6" fill="url(#g595)" stroke="#fc2c00" stroke-width="0.7"/>
<polygon points="410.0,296.6 397.7,321.6 427.6,339.5 441.2,311.7" fill="url(#g596)" stroke="#f42b00" stroke-width="0.7"/>
<polygon points="722.9,407.2 707.4,440.0 737.4,454.5 752.2,423.2" fill="url(#g597)" stroke="#bb9a00" stroke-width="0.7"/>
<polygon points="707.4,440.0 691.3,472.6 722.1,485.7 737.4,454.5" fill="url(#g598)" stroke="#b39300" stroke-width="0.7"/>
<polygon points="513.0,238.7 500.8,266.8 534.5,278.3 547.4,248.4" fill="url(#g599)" stroke="#f84500" stroke-width="0.7"/>
<polygon points="443.2,386.2 428.8,413.2 457.8,434.2 473.2,405.4" fill="url(#g600)" stroke="#d23b00" stroke-width="0.7"/>
<polygon points="686.1,306.6 672.1,338.8 705.7,356.9 719.3,325.4" fill="url(#g601)" stroke="#cf9300" stroke-width="0.7"/>
<polygon points="606.2,475.5 589.7,506.5 625.1,520.8 641.3,490.5" fill="url(#g602)" stroke="#a77600" stroke-width="0.7"/>
<polygon points="466.9,256.3 454.5,283.6 487.3,296.5 500.8,266.8" fill="url(#g603)" stroke="#fd3900" stroke-width="0.7"/>
<polygon points="427.6,339.5 413.9,366.3 443.2,386.2 458.1,357.1" fill="url(#g604)" stroke="#e63400" stroke-width="0.7"/>
<polygon points="705.7,356.9 690.6,390.2 722.9,407.2 737.4,375.2" fill="url(#g605)" stroke="#c79a00" stroke-width="0.7"/>
<polygon points="657.9,458.0 641.3,490.5 675.3,504.0 691.3,472.6" fill="url(#g606)" stroke="#af8700" stroke-width="0.7"/>
<polygon points="547.4,248.4 534.5,278.3 569.1,291.6 582.7,260.4" fill="url(#g607)" stroke="#f35100" stroke-width="0.7"/>
<polygon points="473.2,405.4 457.8,434.2 489.2,454.3 505.2,424.2" fill="url(#g608)" stroke="#cc4400" stroke-width="0.7"/>
<polygon points="454.5,283.6 441.2,311.7 472.9,327.0 487.3,296.5" fill="url(#g609)" stroke="#fa3800" stroke-width="0.7"/>
<polygon points="441.2,311.7 427.6,339.5 458.1,357.1 472.9,327.0" fill="url(#g610)" stroke="#f33600" stroke-width="0.7"/>
<polygon points="652.2,289.5 638.1,321.9 672.1,338.8 686.1,306.6" fill="url(#g611)" stroke="#db8700" stroke-width="0.7"/>
<polygon points="571.8,459.4 555.2,490.5 589.7,506.5 606.2,475.5" fill="url(#g612)" stroke="#b26e00" stroke-width="0.7"/>
<polygon points="582.7,260.4 569.1,291.6 603.9,306.3 617.8,274.3" fill="url(#g613)" stroke="#ec6100" stroke-width="0.7"/>
<polygon points="505.2,424.2 489.2,454.3 521.9,473.1 538.3,442.3" fill="url(#g614)" stroke="#c45100" stroke-width="0.7"/>
<polygon points="538.3,442.3 521.9,473.1 555.2,490.5 571.8,459.4" fill="url(#g615)" stroke="#bc6000" stroke-width="0.7"/>
<polygon points="617.8,274.3 603.9,306.3 638.1,321.9 652.2,289.5" fill="url(#g616)" stroke="#e57400" stroke-width="0.7"/>
<polygon points="690.6,390.2 674.5,424.2 707.4,440.0 722.9,407.2" fill="url(#g617)" stroke="#c49800" stroke-width="0.7"/>
<polygon points="674.5,424.2 657.9,458.0 691.3,472.6 707.4,440.0" fill="url(#g618)" stroke="#bc9100" stroke-width="0.7"/>
<polygon points="500.8,266.8 487.3,296.5 520.1,310.0 534.5,278.3" fill="url(#g619)" stroke="#fb4600" stroke-width="0.7"/>
<polygon points="458.1,357.1 443.2,386.2 473.2,405.4 489.0,374.5" fill="url(#g620)" stroke="#e33f00" stroke-width="0.7"/>
<polygon points="672.1,338.8 656.7,372.8 690.6,390.2 705.7,356.9" fill="url(#g621)" stroke="#d19500" stroke-width="0.7"/>
<polygon points="623.2,442.2 606.2,475.5 641.3,490.5 657.9,458.0" fill="url(#g622)" stroke="#b98300" stroke-width="0.7"/>
<polygon points="487.3,296.5 472.9,327.0 504.8,342.3 520.1,310.0" fill="url(#g623)" stroke="#f84500" stroke-width="0.7"/>
<polygon points="472.9,327.0 458.1,357.1 489.0,374.5 504.8,342.3" fill="url(#g624)" stroke="#f04300" stroke-width="0.7"/>
<polygon points="534.5,278.3 520.1,310.0 554.1,324.6 569.1,291.6" fill="url(#g625)" stroke="#f55200" stroke-width="0.7"/>
<polygon points="489.0,374.5 473.2,405.4 505.2,424.2 521.7,392.0" fill="url(#g626)" stroke="#dd4a00" stroke-width="0.7"/>
<polygon points="638.1,321.9 622.6,356.1 656.7,372.8 672.1,338.8" fill="url(#g627)" stroke="#dd8900" stroke-width="0.7"/>
<polygon points="588.9,425.9 571.8,459.4 606.2,475.5 623.2,442.2" fill="url(#g628)" stroke="#c57900" stroke-width="0.7"/>
<polygon points="656.7,372.8 640.2,407.7 674.5,424.2 690.6,390.2" fill="url(#g629)" stroke="#cf9300" stroke-width="0.7"/>
<polygon points="640.2,407.7 623.2,442.2 657.9,458.0 674.5,424.2" fill="url(#g630)" stroke="#c68d00" stroke-width="0.7"/>
<polygon points="569.1,291.6 554.1,324.6 588.6,340.2 603.9,306.3" fill="url(#g631)" stroke="#ef6200" stroke-width="0.7"/>
<polygon points="521.7,392.0 505.2,424.2 538.3,442.3 555.3,409.2" fill="url(#g632)" stroke="#d65800" stroke-width="0.7"/>
<polygon points="603.9,306.3 588.6,340.2 622.6,356.1 638.1,321.9" fill="url(#g633)" stroke="#e87600" stroke-width="0.7"/>
<polygon points="555.3,409.2 538.3,442.3 571.8,459.4 588.9,425.9" fill="url(#g634)" stroke="#cf6900" stroke-width="0.7"/>
<polygon points="520.1,310.0 504.8,342.3 538.2,358.4 554.1,324.6" fill="url(#g635)" stroke="#f35100" stroke-width="0.7"/>
<polygon points="504.8,342.3 489.0,374.5 521.7,392.0 538.2,358.4" fill="url(#g636)" stroke="#eb4f00" stroke-width="0.7"/>
<polygon points="606.0,391.2 588.9,425.9 623.2,442.2 640.2,407.7" fill="url(#g637)" stroke="#d28200" stroke-width="0.7"/>
<polygon points="622.6,356.1 606.0,391.2 640.2,407.7 656.7,372.8" fill="url(#g638)" stroke="#da8700" stroke-width="0.7"/>
<polygon points="554.1,324.6 538.2,358.4 572.2,374.8 588.6,340.2" fill="url(#g639)" stroke="#ec6100" stroke-width="0.7"/>
<polygon points="538.2,358.4 521.7,392.0 555.3,409.2 572.2,374.8" fill="url(#g640)" stroke="#e45e00" stroke-width="0.7"/>
<polygon points="588.6,340.2 572.2,374.8 606.0,391.2 622.6,356.1" fill="url(#g641)" stroke="#e57400" stroke-width="0.7"/>
<polygon points="572.2,374.8 555.3,409.2 588.9,425.9 606.0,391.2" fill="url(#g642)" stroke="#dc7000" stroke-width="0.7"/>
<g fill="none" stroke-linecap="round">
<path d="M819,670 L826.6,626" stroke="#2f7088" stroke-width="5"/>
<path d="M819,670 L826.6,626" stroke="#111" stroke-width="2.5" stroke-dasharray="3 1.5"/>
<path d="M819,669 L872.6,587.6" stroke="#2f7088" stroke-width="5"/>
<path d="M819,669 L872.6,587.6" stroke="#111" stroke-width="2.5" stroke-dasharray="3 1.5"/>
<path d="M933.2,441.3 L942.2,390" stroke="#2f7088" stroke-width="5"/>
<path d="M933.2,441.3 L942.2,390" stroke="#111" stroke-width="2.5" stroke-dasharray="3 1.5"/>
<path d="M926.2,415.2 L940.2,390" stroke="#2f7088" stroke-width="5"/>
<path d="M926.2,415.2 L940.2,390" stroke="#111" stroke-width="2.5" stroke-dasharray="3 1.5"/>
<circle cx="933" cy="441" r="2.5" fill="#999" stroke="none"/>
<path d="M933,533 L937,527 L934,556 Z" fill="#1020b0"/>
</g>
</g></svg>
<div class="a" style="left:1243px;top:94px;width:1px;height:751px;background:#fff"></div>
<div class="a" style="left:156px;top:844px;width:1088px;height:1px;background:#fff"></div>
<div class="a" style="left:0;top:844px;width:156px;height:1px;background:#aca899"></div>
<div class="a" style="left:2px;top:852px;width:1238px;height:84px;background:#fff;border:1px solid #aca899;border-left:2px solid #aca899"></div>
<div class="hd" style="left:3px;width:32px">Port</div>
<div class="a" style="left:34px;top:870px;width:1px;height:65px;background:#ece9d8"></div>
<div class="hd" style="left:35px;width:56px">Mag(Src)</div>
<div class="a" style="left:90px;top:870px;width:1px;height:65px;background:#ece9d8"></div>
<div class="hd" style="left:91px;width:53px">Ang(Src)</div>
<div class="a" style="left:143px;top:870px;width:1px;height:65px;background:#ece9d8"></div>
<div class="hd" style="left:144px;width:54px">Mag(Inc)</div>
<div class="a" style="left:197px;top:870px;width:1px;height:65px;background:#ece9d8"></div>
<div class="hd" style="left:198px;width:52px">Ang(Inc)</div>
<div class="a" style="left:249px;top:870px;width:1px;height:65px;background:#ece9d8"></div>
<div class="hd" style="left:250px;width:56px">Mag(Ref)</div>
<div class="a" style="left:305px;top:870px;width:1px;height:65px;background:#ece9d8"></div>
<div class="hd" style="left:306px;width:52px">Ang(Ref)</div>
<div class="a" style="left:357px;top:870px;width:1px;height:65px;background:#ece9d8"></div>
<div class="hd" style="left:358px;width:47px">Mag(V)</div>
<div class="a" style="left:404px;top:870px;width:1px;height:65px;background:#ece9d8"></div>
<div class="hd" style="left:405px;width:46px">Ang(V)</div>
<div class="a" style="left:450px;top:870px;width:1px;height:65px;background:#ece9d8"></div>
<div class="hd" style="left:451px;width:50px">Mag(I)</div>
<div class="a" style="left:500px;top:870px;width:1px;height:65px;background:#ece9d8"></div>
<div class="hd" style="left:501px;width:42px">Ang(I)</div>
<div class="a" style="left:542px;top:870px;width:1px;height:65px;background:#ece9d8"></div>
<div class="hd" style="left:543px;width:43px">Re(Zs)</div>
<div class="a" style="left:585px;top:870px;width:1px;height:65px;background:#ece9d8"></div>
<div class="hd" style="left:586px;width:42px">Im(Zs)</div>
<div class="a" style="left:627px;top:870px;width:1px;height:65px;background:#ece9d8"></div>
<div class="hd" style="left:628px;width:26px">Zc</div>
<div class="a" style="left:653px;top:870px;width:1px;height:65px;background:#ece9d8"></div>
<div class="hd" style="left:654px;width:32px">Pinc</div>
<div class="a" style="left:685px;top:870px;width:1px;height:65px;background:#ece9d8"></div>
<div class="hd" style="left:686px;width:65px">Pref</div>
<div class="a" style="left:750px;top:870px;width:1px;height:65px;background:#ece9d8"></div>
<div class="hd" style="left:751px;width:64px">Pin</div>
<div class="a" style="left:814px;top:870px;width:1px;height:65px;background:#ece9d8"></div>
<div class="hd" style="left:815px;width:67px">Re(Zactive)</div>
<div class="a" style="left:881px;top:870px;width:1px;height:65px;background:#ece9d8"></div>
<div class="hd" style="left:882px;width:65px">Im(Zactive)</div>
<div class="a" style="left:946px;top:870px;width:1px;height:65px;background:#ece9d8"></div>
<div class="hd" style="left:947px;width:291px"></div>
<div class="a" style="left:1237px;top:870px;width:1px;height:65px;background:#ece9d8"></div>
<div class="a" style="left:3px;top:884px;width:1235px;height:1px;background:#ece9d8"></div>
<div class="a" style="left:3px;top:898px;width:1235px;height:1px;background:#ece9d8"></div>
<div class="a" style="left:3px;top:912px;width:1235px;height:1px;background:#ece9d8"></div>
<div class="a" style="left:3px;top:926px;width:1235px;height:1px;background:#ece9d8"></div>
<div class="cell" style="left:3px;width:32px;top:871px;text-align:left;padding-left:5px">1</div>
<div class="cell" style="left:3px;width:32px;top:885px;text-align:left;padding-left:5px">Sum</div>
<div class="cell" style="left:35px;width:56px;top:871px;text-align:center">1</div>
<div class="cell" style="left:91px;width:53px;top:871px;text-align:center">0.000</div>
<div class="cell" style="left:144px;width:54px;top:871px;text-align:center">1</div>
<div class="cell" style="left:198px;width:52px;top:871px;text-align:center">0.000</div>
<div class="cell" style="left:250px;width:56px;top:871px;text-align:center">0.02887</div>
<div class="cell" style="left:306px;width:52px;top:871px;text-align:center">75.108</div>
<div class="cell" style="left:358px;width:47px;top:871px;text-align:center">1.008</div>
<div class="cell" style="left:405px;width:46px;top:871px;text-align:center">1.587</div>
<div class="cell" style="left:451px;width:50px;top:871px;text-align:center">0.01986</div>
<div class="cell" style="left:501px;width:42px;top:871px;text-align:center">-1.610</div>
<div class="cell" style="left:543px;width:43px;top:871px;text-align:center">50</div>
<div class="cell" style="left:586px;width:42px;top:871px;text-align:center">0</div>
<div class="cell" style="left:628px;width:26px;top:871px;text-align:center">50</div>
<div class="cell" style="left:654px;width:32px;top:871px;text-align:center">0.01</div>
<div class="cell" style="left:654px;width:32px;top:885px;text-align:center">0.01</div>
<div class="cell" style="left:686px;width:65px;top:871px;text-align:center">8.338e-006</div>
<div class="cell" style="left:686px;width:65px;top:885px;text-align:center">8.338e-006</div>
<div class="cell" style="left:751px;width:64px;top:871px;text-align:center">0.0005581</div>
<div class="cell" style="left:751px;width:64px;top:885px;text-align:center">0.0005581</div>
<div class="cell" style="left:815px;width:67px;top:871px;text-align:center">50.67</div>
<div class="cell" style="left:882px;width:65px;top:871px;text-align:center">2.83</div>
<div class="a" style="left:0;top:938px;width:1267px;height:8px;background:#ece9d8;border-top:1px solid #aca899"></div>
<div class="a" style="left:104px;top:942px;width:205px;height:4px;border:1px solid #aca899;border-bottom:none"></div>
<div class="a" style="left:312px;top:942px;width:165px;height:4px;border:1px solid #aca899;border-bottom:none"></div>
<div class="a" style="left:481px;top:942px;width:53px;height:4px;border:1px solid #aca899;border-bottom:none"></div>
</body></html>
